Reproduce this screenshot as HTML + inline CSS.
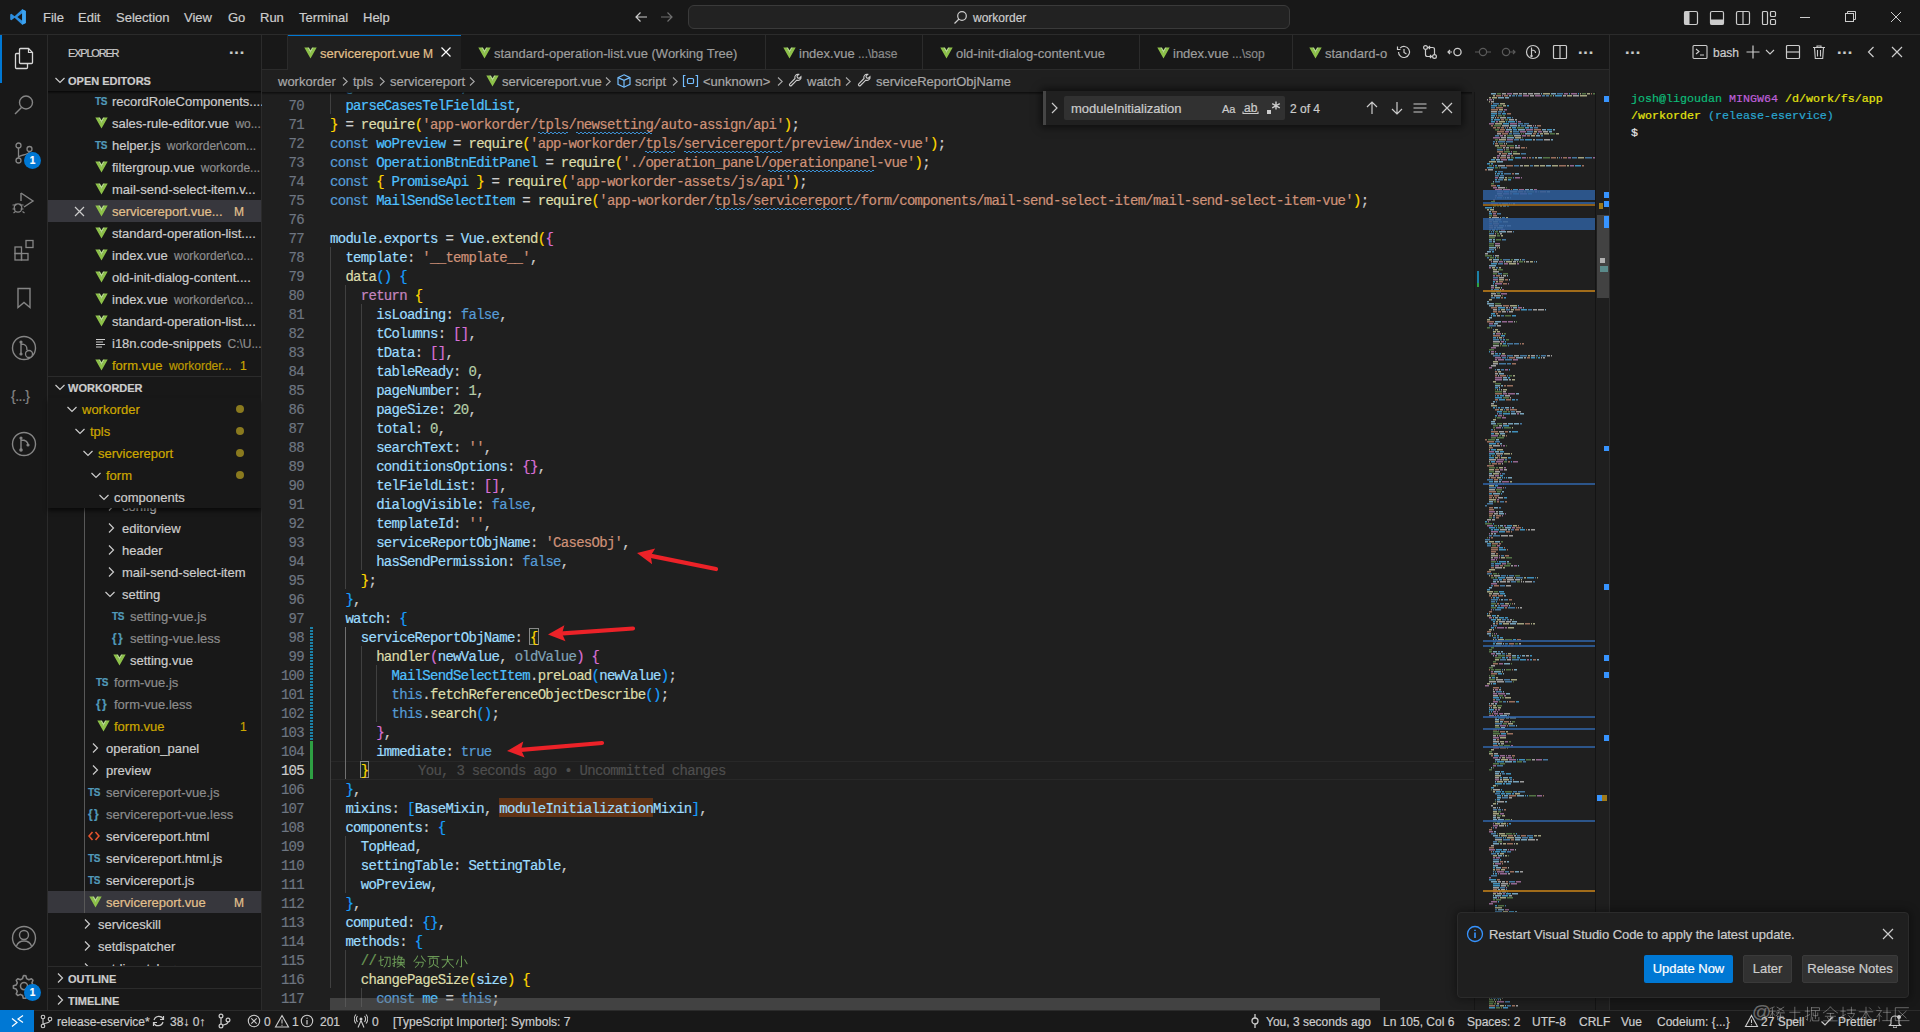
<!DOCTYPE html><html><head><meta charset="utf-8"><style>
*{box-sizing:border-box}
html,body{margin:0;padding:0}
body{width:1920px;height:1032px;overflow:hidden;position:relative;background:#181818;font-family:"Liberation Sans",sans-serif;color:#cccccc;-webkit-text-stroke:0.2px}
.mono{font-family:"Liberation Mono",monospace}
.ui{font-size:13px;line-height:22px}
.cl{position:absolute;left:0;height:19px;line-height:19px;white-space:pre;font-family:"Liberation Mono",monospace;font-size:14px;letter-spacing:-0.71px;margin-top:2px}
.ln{position:absolute;width:42px;text-align:right;height:19px;line-height:19px;font-family:"Liberation Mono",monospace;font-size:14px;letter-spacing:-0.71px;color:#6e7681;margin-top:2px}
.row{position:absolute;left:48px;width:213px;height:22px;line-height:22px;font-size:13px;white-space:pre;color:#cccccc}
.sb{position:absolute;top:1011px;height:22px;line-height:22px;font-size:12px;white-space:pre;color:#cccccc}
</style></head><body><div style="position:absolute;left:0px;top:0px;width:1920px;height:34px;background:#181818"></div><div style="position:absolute;left:0px;top:34px;width:1920px;height:1px;background:#2b2b2b"></div><svg style="position:absolute;left:9px;top:8px;" width="18" height="18" viewBox="0 0 18 18" fill="none"><path d="M13.2 1.2 L16.8 3 V15 L13.2 16.8 L5.6 9.8 L2.4 12.3 L1.2 11.6 V6.4 L2.4 5.7 L5.6 8.2 Z" fill="#2d8fe0"/><path d="M13.2 5.3 V12.7 L8.4 9 Z" fill="#181818"/><path d="M13.2 1.2 L16.8 3 V15 L13.2 16.8 Z" fill="#3ca3f0"/></svg><div style="position:absolute;left:43px;top:7px;white-space:pre;font-size:13px;line-height:22px;color:#cccccc">File</div><div style="position:absolute;left:78px;top:7px;white-space:pre;font-size:13px;line-height:22px;color:#cccccc">Edit</div><div style="position:absolute;left:116px;top:7px;white-space:pre;font-size:13px;line-height:22px;color:#cccccc">Selection</div><div style="position:absolute;left:184px;top:7px;white-space:pre;font-size:13px;line-height:22px;color:#cccccc">View</div><div style="position:absolute;left:228px;top:7px;white-space:pre;font-size:13px;line-height:22px;color:#cccccc">Go</div><div style="position:absolute;left:260px;top:7px;white-space:pre;font-size:13px;line-height:22px;color:#cccccc">Run</div><div style="position:absolute;left:299px;top:7px;white-space:pre;font-size:13px;line-height:22px;color:#cccccc">Terminal</div><div style="position:absolute;left:363px;top:7px;white-space:pre;font-size:13px;line-height:22px;color:#cccccc">Help</div><svg style="position:absolute;left:633px;top:9px;" width="16" height="16" viewBox="0 0 16 16" fill="none"><path d="M14 8H3M7.5 3.5L3 8l4.5 4.5" stroke="#cccccc" stroke-width="1.2"/></svg><svg style="position:absolute;left:659px;top:9px;" width="16" height="16" viewBox="0 0 16 16" fill="none"><path d="M2 8h11M8.5 3.5L13 8l-4.5 4.5" stroke="#6f6f6f" stroke-width="1.2"/></svg><div style="position:absolute;left:688px;top:5px;width:602px;height:24px;background:#222222;border:1px solid #3a3a3a;border-radius:6px"></div><svg style="position:absolute;left:953px;top:10px;" width="15" height="15" viewBox="0 0 15 15" fill="none"><circle cx="9" cy="6" r="4.3" stroke="#cccccc" stroke-width="1.2"/><path d="M6 9L1.5 13.5" stroke="#cccccc" stroke-width="1.3"/></svg><div style="position:absolute;left:973px;top:7px;white-space:pre;font-size:12px;line-height:22px;color:#cccccc">workorder</div><svg style="position:absolute;left:1683px;top:10px;" width="16" height="16" viewBox="0 0 16 16" fill="none"><rect x="1.5" y="1.5" width="13" height="13" rx="1.5" stroke="#cccccc" stroke-width="1.2"/><rect x="1.5" y="1.5" width="5" height="13" fill="#cccccc"/></svg><svg style="position:absolute;left:1709px;top:10px;" width="16" height="16" viewBox="0 0 16 16" fill="none"><rect x="1.5" y="1.5" width="13" height="13" rx="1.5" stroke="#cccccc" stroke-width="1.2"/><rect x="1.5" y="9.5" width="13" height="5" fill="#cccccc"/></svg><svg style="position:absolute;left:1735px;top:10px;" width="16" height="16" viewBox="0 0 16 16" fill="none"><rect x="1.5" y="1.5" width="13" height="13" rx="1.5" stroke="#cccccc" stroke-width="1.2"/><path d="M8 1.5v13" stroke="#cccccc" stroke-width="1.2"/></svg><svg style="position:absolute;left:1761px;top:10px;" width="16" height="16" viewBox="0 0 16 16" fill="none"><rect x="1.5" y="1.5" width="5" height="13" rx="1" stroke="#cccccc" stroke-width="1.2"/><rect x="9.5" y="1.5" width="5" height="5" rx="1" stroke="#cccccc" stroke-width="1.2"/><rect x="9.5" y="9.5" width="5" height="5" rx="1" stroke="#cccccc" stroke-width="1.2"/></svg><div style="position:absolute;left:1800px;top:17px;width:10px;height:1px;background:#cccccc"></div><svg style="position:absolute;left:1845px;top:11px;" width="12" height="12" viewBox="0 0 12 12" fill="none"><rect x="0.5" y="2.5" width="8" height="8" stroke="#cccccc"/><path d="M2.5 2.5V0.5h8v8h-2" stroke="#cccccc"/></svg><svg style="position:absolute;left:1890px;top:11px;" width="12" height="12" viewBox="0 0 12 12" fill="none"><path d="M1 1l10 10M11 1L1 11" stroke="#cccccc" stroke-width="1"/></svg><div style="position:absolute;left:0px;top:35px;width:48px;height:975px;background:#181818"></div><div style="position:absolute;left:47px;top:35px;width:1px;height:975px;background:#2b2b2b"></div><div style="position:absolute;left:0px;top:35px;width:2px;height:48px;background:#0078d4"></div><svg style="position:absolute;left:12px;top:46px;" width="24" height="24" viewBox="0 0 24 24" fill="none"><path d="M8.5 2.5h8l4 4v10a1 1 0 0 1-1 1h-11a1 1 0 0 1-1-1v-13a1 1 0 0 1 1-1z" stroke="#d7d7d7" stroke-width="1.3"/><path d="M16.5 2.5v4h4" stroke="#d7d7d7" stroke-width="1.2"/><path d="M7.5 7.5h-3a1 1 0 0 0-1 1v13a1 1 0 0 0 1 1h10a1 1 0 0 0 1-1v-4" stroke="#d7d7d7" stroke-width="1.3"/></svg><svg style="position:absolute;left:12px;top:93px;" width="24" height="24" viewBox="0 0 24 24" fill="none"><circle cx="14" cy="9.5" r="6.5" stroke="#858585" stroke-width="1.4"/><path d="M9.5 14.5L3 21" stroke="#858585" stroke-width="1.5"/></svg><svg style="position:absolute;left:12px;top:141px;" width="24" height="24" viewBox="0 0 24 24" fill="none"><circle cx="6.5" cy="4.5" r="2.5" stroke="#858585" stroke-width="1.3"/><circle cx="6.5" cy="19.5" r="2.5" stroke="#858585" stroke-width="1.3"/><circle cx="17.5" cy="8" r="2.5" stroke="#858585" stroke-width="1.3"/><path d="M6.5 7v10M17.5 10.5c0 4-11 3-11 6" stroke="#858585" stroke-width="1.3"/></svg><div style="position:absolute;left:24px;top:152px;width:17px;height:17px;background:#0078d4;border-radius:50%;color:#fff;font-size:10px;font-weight:bold;line-height:17px;text-align:center">1</div><svg style="position:absolute;left:10px;top:189px;" width="26" height="26" viewBox="0 0 26 26" fill="none"><path d="M11 4l12 8-9 6" stroke="#858585" stroke-width="1.4"/><path d="M11 4v8" stroke="#858585" stroke-width="1.4"/><ellipse cx="8" cy="19" rx="3.8" ry="4.2" stroke="#858585" stroke-width="1.3"/><path d="M2.5 16h3M10.5 16h3M2.5 20h3M10.5 20h3M3.5 24l2-1.5M12.5 22.5l2 1.5M5 15l1.5 1M11 15l-1.5 1" stroke="#858585" stroke-width="1.2"/></svg><svg style="position:absolute;left:12px;top:238px;" width="24" height="24" viewBox="0 0 24 24" fill="none"><rect x="3" y="9" width="6.5" height="6.5" stroke="#858585" stroke-width="1.3"/><rect x="3" y="15.5" width="6.5" height="6.5" stroke="#858585" stroke-width="1.3"/><rect x="9.5" y="15.5" width="6.5" height="6.5" stroke="#858585" stroke-width="1.3"/><rect x="14" y="2.5" width="7" height="7" stroke="#858585" stroke-width="1.3"/></svg><svg style="position:absolute;left:12px;top:286px;" width="24" height="24" viewBox="0 0 24 24" fill="none"><path d="M6 2.5h12v19l-6-5-6 5z" stroke="#858585" stroke-width="1.4"/></svg><svg style="position:absolute;left:10px;top:334px;" width="28" height="28" viewBox="0 0 28 28" fill="none"><circle cx="14" cy="14" r="11.5" stroke="#858585" stroke-width="1.4"/><path d="M11 7v14M11 10c5 0 6 2 6 6" stroke="#858585" stroke-width="1.4"/><circle cx="11" cy="8" r="1.6" fill="#858585"/><circle cx="11" cy="20" r="1.6" fill="#858585"/><circle cx="19" cy="20" r="3.5" fill="#181818" stroke="#858585" stroke-width="1.3"/></svg><div style="position:absolute;left:11px;top:385px;white-space:pre;font-size:14px;line-height:22px;color:#858585;letter-spacing:-0.5px">{...}</div><svg style="position:absolute;left:10px;top:430px;" width="28" height="28" viewBox="0 0 28 28" fill="none"><circle cx="14" cy="14" r="11.5" stroke="#858585" stroke-width="1.4"/><path d="M11 7v13M11 10c5 0 7 2 7 5" stroke="#858585" stroke-width="1.4"/><circle cx="11" cy="8" r="1.6" fill="#858585"/><circle cx="11" cy="20" r="1.8" fill="#858585"/><circle cx="18" cy="15" r="1.6" fill="#858585"/></svg><svg style="position:absolute;left:10px;top:924px;" width="28" height="28" viewBox="0 0 28 28" fill="none"><circle cx="14" cy="14" r="11.5" stroke="#858585" stroke-width="1.4"/><circle cx="14" cy="11" r="4.5" stroke="#858585" stroke-width="1.4"/><path d="M6.5 22c1.5-4 4-5 7.5-5s6 1 7.5 5" stroke="#858585" stroke-width="1.4"/></svg><svg style="position:absolute;left:8px;top:970px;" width="32" height="32" viewBox="0 0 32 32" fill="none"><g transform="translate(-0.5,-1) scale(1.18)"><path d="M14 5.5l1.6 0.3 0.6 2.3 1.9 1 2.2-0.9 1.3 1.3-0.9 2.2 1 1.9 2.3 0.6v2.2l-2.3 0.6-1 1.9 0.9 2.2-1.3 1.3-2.2-0.9-1.9 1-0.6 2.3h-2.2l-0.6-2.3-1.9-1-2.2 0.9-1.3-1.3 0.9-2.2-1-1.9-2.3-0.6v-2.2l2.3-0.6 1-1.9-0.9-2.2 1.3-1.3 2.2 0.9 1.9-1 0.6-2.3z" stroke="#858585" stroke-width="1.3" stroke-linejoin="round"/><circle cx="14" cy="14.5" r="3" stroke="#858585" stroke-width="1.3"/></g></svg><div style="position:absolute;left:24px;top:984px;width:17px;height:17px;background:#0078d4;border-radius:50%;color:#fff;font-size:10px;font-weight:bold;line-height:17px;text-align:center">1</div><div style="position:absolute;left:48px;top:35px;width:213px;height:975px;background:#181818"></div><div style="position:absolute;left:261px;top:35px;width:1px;height:975px;background:#2b2b2b"></div><div style="position:absolute;left:68px;top:42px;white-space:pre;font-size:11px;line-height:22px;color:#cccccc;letter-spacing:-1.2px">EXPLORER</div><div style="position:absolute;left:229px;top:42px;white-space:pre;font-size:16px;line-height:22px;color:#cccccc;letter-spacing:0px;font-weight:bold">···</div><svg style="position:absolute;left:54px;top:75px;" width="12" height="10" viewBox="0 0 12 10" fill="none"><path d="M1.5 3l4.5 4.5L10.5 3" stroke="#cccccc" stroke-width="1.2"/></svg><div style="position:absolute;left:68px;top:70px;white-space:pre;font-size:11px;line-height:22px;font-weight:bold;color:#cccccc">OPEN EDITORS</div><div style="position:absolute;left:48px;top:91px;width:213px;height:3px;background:linear-gradient(rgba(0,0,0,0.7),rgba(0,0,0,0))"></div><div style="position:absolute;left:95px;top:91px;white-space:pre;font-size:10px;line-height:22px;font-weight:bold;color:#519aba;letter-spacing:-0.3px">TS</div><div style="position:absolute;left:112px;top:91px;white-space:pre;font-size:13px;line-height:22px"><span style="color:#cccccc">recordRoleComponents....</span><span style="font-size:12px;color:#9a9a9a;margin-left:3px;opacity:0.9"></span></div><svg style="position:absolute;left:95px;top:117px;" width="13" height="12" viewBox="0 0 13 12" fill="none"><path d="M0.3 0.5h3.2L6.5 6 9.5 0.5h3.2L6.5 11.5z" fill="#8dc149"/><path d="M3.3 0.5h1.6L6.5 3.3 8.1 0.5h1.6L6.5 6.3z" fill="#b6dd8a"/></svg><div style="position:absolute;left:112px;top:113px;white-space:pre;font-size:13px;line-height:22px"><span style="color:#cccccc">sales-rule-editor.vue</span><span style="font-size:12px;color:#9a9a9a;margin-left:3px;opacity:0.9"> wo...</span></div><div style="position:absolute;left:95px;top:135px;white-space:pre;font-size:10px;line-height:22px;font-weight:bold;color:#519aba;letter-spacing:-0.3px">TS</div><div style="position:absolute;left:112px;top:135px;white-space:pre;font-size:13px;line-height:22px"><span style="color:#cccccc">helper.js</span><span style="font-size:12px;color:#9a9a9a;margin-left:3px;opacity:0.9"> workorder\com...</span></div><svg style="position:absolute;left:95px;top:161px;" width="13" height="12" viewBox="0 0 13 12" fill="none"><path d="M0.3 0.5h3.2L6.5 6 9.5 0.5h3.2L6.5 11.5z" fill="#8dc149"/><path d="M3.3 0.5h1.6L6.5 3.3 8.1 0.5h1.6L6.5 6.3z" fill="#b6dd8a"/></svg><div style="position:absolute;left:112px;top:157px;white-space:pre;font-size:13px;line-height:22px"><span style="color:#cccccc">filtergroup.vue</span><span style="font-size:12px;color:#9a9a9a;margin-left:3px;opacity:0.9"> workorde...</span></div><svg style="position:absolute;left:95px;top:183px;" width="13" height="12" viewBox="0 0 13 12" fill="none"><path d="M0.3 0.5h3.2L6.5 6 9.5 0.5h3.2L6.5 11.5z" fill="#8dc149"/><path d="M3.3 0.5h1.6L6.5 3.3 8.1 0.5h1.6L6.5 6.3z" fill="#b6dd8a"/></svg><div style="position:absolute;left:112px;top:179px;white-space:pre;font-size:13px;line-height:22px"><span style="color:#cccccc">mail-send-select-item.v...</span><span style="font-size:12px;color:#9a9a9a;margin-left:3px;opacity:0.9"></span></div><div style="position:absolute;left:48px;top:200px;width:213px;height:22px;background:#37373d"></div><svg style="position:absolute;left:74px;top:206px;" width="11" height="11" viewBox="0 0 11 11" fill="none"><path d="M1 1l9 9M10 1L1 10" stroke="#cccccc" stroke-width="1.2"/></svg><svg style="position:absolute;left:95px;top:205px;" width="13" height="12" viewBox="0 0 13 12" fill="none"><path d="M0.3 0.5h3.2L6.5 6 9.5 0.5h3.2L6.5 11.5z" fill="#8dc149"/><path d="M3.3 0.5h1.6L6.5 3.3 8.1 0.5h1.6L6.5 6.3z" fill="#b6dd8a"/></svg><div style="position:absolute;left:112px;top:201px;white-space:pre;font-size:13px;line-height:22px"><span style="color:#e2c08d">servicereport.vue...</span><span style="font-size:12px;color:#e2c08d;margin-left:3px;opacity:0.9"></span></div><div style="position:absolute;left:234px;top:201px;white-space:pre;font-size:12px;line-height:22px;color:#e2c08d">M</div><svg style="position:absolute;left:95px;top:227px;" width="13" height="12" viewBox="0 0 13 12" fill="none"><path d="M0.3 0.5h3.2L6.5 6 9.5 0.5h3.2L6.5 11.5z" fill="#8dc149"/><path d="M3.3 0.5h1.6L6.5 3.3 8.1 0.5h1.6L6.5 6.3z" fill="#b6dd8a"/></svg><div style="position:absolute;left:112px;top:223px;white-space:pre;font-size:13px;line-height:22px"><span style="color:#cccccc">standard-operation-list....</span><span style="font-size:12px;color:#9a9a9a;margin-left:3px;opacity:0.9"></span></div><svg style="position:absolute;left:95px;top:249px;" width="13" height="12" viewBox="0 0 13 12" fill="none"><path d="M0.3 0.5h3.2L6.5 6 9.5 0.5h3.2L6.5 11.5z" fill="#8dc149"/><path d="M3.3 0.5h1.6L6.5 3.3 8.1 0.5h1.6L6.5 6.3z" fill="#b6dd8a"/></svg><div style="position:absolute;left:112px;top:245px;white-space:pre;font-size:13px;line-height:22px"><span style="color:#cccccc">index.vue</span><span style="font-size:12px;color:#9a9a9a;margin-left:3px;opacity:0.9"> workorder\co...</span></div><svg style="position:absolute;left:95px;top:271px;" width="13" height="12" viewBox="0 0 13 12" fill="none"><path d="M0.3 0.5h3.2L6.5 6 9.5 0.5h3.2L6.5 11.5z" fill="#8dc149"/><path d="M3.3 0.5h1.6L6.5 3.3 8.1 0.5h1.6L6.5 6.3z" fill="#b6dd8a"/></svg><div style="position:absolute;left:112px;top:267px;white-space:pre;font-size:13px;line-height:22px"><span style="color:#cccccc">old-init-dialog-content....</span><span style="font-size:12px;color:#9a9a9a;margin-left:3px;opacity:0.9"></span></div><svg style="position:absolute;left:95px;top:293px;" width="13" height="12" viewBox="0 0 13 12" fill="none"><path d="M0.3 0.5h3.2L6.5 6 9.5 0.5h3.2L6.5 11.5z" fill="#8dc149"/><path d="M3.3 0.5h1.6L6.5 3.3 8.1 0.5h1.6L6.5 6.3z" fill="#b6dd8a"/></svg><div style="position:absolute;left:112px;top:289px;white-space:pre;font-size:13px;line-height:22px"><span style="color:#cccccc">index.vue</span><span style="font-size:12px;color:#9a9a9a;margin-left:3px;opacity:0.9"> workorder\co...</span></div><svg style="position:absolute;left:95px;top:315px;" width="13" height="12" viewBox="0 0 13 12" fill="none"><path d="M0.3 0.5h3.2L6.5 6 9.5 0.5h3.2L6.5 11.5z" fill="#8dc149"/><path d="M3.3 0.5h1.6L6.5 3.3 8.1 0.5h1.6L6.5 6.3z" fill="#b6dd8a"/></svg><div style="position:absolute;left:112px;top:311px;white-space:pre;font-size:13px;line-height:22px"><span style="color:#cccccc">standard-operation-list....</span><span style="font-size:12px;color:#9a9a9a;margin-left:3px;opacity:0.9"></span></div><svg style="position:absolute;left:95px;top:338px;" width="12" height="10" viewBox="0 0 12 10" fill="none"><path d="M1 1.5h9M1 4h7M1 6.5h9M1 9h6" stroke="#cccccc" stroke-width="1.2"/></svg><div style="position:absolute;left:112px;top:333px;white-space:pre;font-size:13px;line-height:22px"><span style="color:#cccccc">i18n.code-snippets</span><span style="font-size:12px;color:#9a9a9a;margin-left:3px;opacity:0.9"> C:\U...</span></div><svg style="position:absolute;left:95px;top:359px;" width="13" height="12" viewBox="0 0 13 12" fill="none"><path d="M0.3 0.5h3.2L6.5 6 9.5 0.5h3.2L6.5 11.5z" fill="#8dc149"/><path d="M3.3 0.5h1.6L6.5 3.3 8.1 0.5h1.6L6.5 6.3z" fill="#b6dd8a"/></svg><div style="position:absolute;left:112px;top:355px;white-space:pre;font-size:13px;line-height:22px"><span style="color:#cca700">form.vue</span><span style="font-size:12px;color:#cca700;margin-left:3px;opacity:0.9"> workorder...</span></div><div style="position:absolute;left:240px;top:355px;white-space:pre;font-size:12px;line-height:22px;color:#cca700">1</div><div style="position:absolute;left:48px;top:376px;width:213px;height:1px;background:#2b2b2b"></div><svg style="position:absolute;left:54px;top:382px;" width="12" height="10" viewBox="0 0 12 10" fill="none"><path d="M1.5 3l4.5 4.5L10.5 3" stroke="#cccccc" stroke-width="1.2"/></svg><div style="position:absolute;left:68px;top:377px;white-space:pre;font-size:11px;line-height:22px;font-weight:bold;color:#cccccc">WORKORDER</div><div style="position:absolute;left:0px;top:0px;width:261px;height:966px;overflow:hidden;position:absolute"><svg style="position:absolute;left:106px;top:500px;" width="10" height="12" viewBox="0 0 10 12" fill="none"><path d="M3 1.5l4.5 4.5L3 10.5" stroke="#cccccc" stroke-width="1.2"/></svg><div style="position:absolute;left:122px;top:496px;white-space:pre;font-size:13px;line-height:22px;color:#cccccc">config</div><svg style="position:absolute;left:106px;top:522px;" width="10" height="12" viewBox="0 0 10 12" fill="none"><path d="M3 1.5l4.5 4.5L3 10.5" stroke="#cccccc" stroke-width="1.2"/></svg><div style="position:absolute;left:122px;top:518px;white-space:pre;font-size:13px;line-height:22px;color:#cccccc">editorview</div><svg style="position:absolute;left:106px;top:544px;" width="10" height="12" viewBox="0 0 10 12" fill="none"><path d="M3 1.5l4.5 4.5L3 10.5" stroke="#cccccc" stroke-width="1.2"/></svg><div style="position:absolute;left:122px;top:540px;white-space:pre;font-size:13px;line-height:22px;color:#cccccc">header</div><svg style="position:absolute;left:106px;top:566px;" width="10" height="12" viewBox="0 0 10 12" fill="none"><path d="M3 1.5l4.5 4.5L3 10.5" stroke="#cccccc" stroke-width="1.2"/></svg><div style="position:absolute;left:122px;top:562px;white-space:pre;font-size:13px;line-height:22px;color:#cccccc">mail-send-select-item</div><svg style="position:absolute;left:104px;top:589px;" width="12" height="10" viewBox="0 0 12 10" fill="none"><path d="M1.5 3l4.5 4.5L10.5 3" stroke="#cccccc" stroke-width="1.2"/></svg><div style="position:absolute;left:122px;top:584px;white-space:pre;font-size:13px;line-height:22px;color:#cccccc">setting</div><div style="position:absolute;left:112px;top:606px;white-space:pre;font-size:10px;line-height:22px;font-weight:bold;color:#519aba;letter-spacing:-0.3px">TS</div><div style="position:absolute;left:130px;top:606px;white-space:pre;font-size:13px;line-height:22px;color:#8c8c8c">setting-vue.js</div><div style="position:absolute;left:112px;top:627px;white-space:pre;font-size:12px;line-height:22px;font-weight:bold;color:#519aba;letter-spacing:-1px">{ }</div><div style="position:absolute;left:130px;top:628px;white-space:pre;font-size:13px;line-height:22px;color:#8c8c8c">setting-vue.less</div><svg style="position:absolute;left:113px;top:654px;" width="13" height="12" viewBox="0 0 13 12" fill="none"><path d="M0.3 0.5h3.2L6.5 6 9.5 0.5h3.2L6.5 11.5z" fill="#8dc149"/><path d="M3.3 0.5h1.6L6.5 3.3 8.1 0.5h1.6L6.5 6.3z" fill="#b6dd8a"/></svg><div style="position:absolute;left:130px;top:650px;white-space:pre;font-size:13px;line-height:22px;color:#cccccc">setting.vue</div><div style="position:absolute;left:96px;top:672px;white-space:pre;font-size:10px;line-height:22px;font-weight:bold;color:#519aba;letter-spacing:-0.3px">TS</div><div style="position:absolute;left:114px;top:672px;white-space:pre;font-size:13px;line-height:22px;color:#8c8c8c">form-vue.js</div><div style="position:absolute;left:96px;top:693px;white-space:pre;font-size:12px;line-height:22px;font-weight:bold;color:#519aba;letter-spacing:-1px">{ }</div><div style="position:absolute;left:114px;top:694px;white-space:pre;font-size:13px;line-height:22px;color:#8c8c8c">form-vue.less</div><svg style="position:absolute;left:97px;top:720px;" width="13" height="12" viewBox="0 0 13 12" fill="none"><path d="M0.3 0.5h3.2L6.5 6 9.5 0.5h3.2L6.5 11.5z" fill="#8dc149"/><path d="M3.3 0.5h1.6L6.5 3.3 8.1 0.5h1.6L6.5 6.3z" fill="#b6dd8a"/></svg><div style="position:absolute;left:114px;top:716px;white-space:pre;font-size:13px;line-height:22px;color:#cca700">form.vue</div><div style="position:absolute;left:240px;top:716px;white-space:pre;font-size:12px;line-height:22px;color:#cca700">1</div><svg style="position:absolute;left:90px;top:742px;" width="10" height="12" viewBox="0 0 10 12" fill="none"><path d="M3 1.5l4.5 4.5L3 10.5" stroke="#cccccc" stroke-width="1.2"/></svg><div style="position:absolute;left:106px;top:738px;white-space:pre;font-size:13px;line-height:22px;color:#cccccc">operation_panel</div><svg style="position:absolute;left:90px;top:764px;" width="10" height="12" viewBox="0 0 10 12" fill="none"><path d="M3 1.5l4.5 4.5L3 10.5" stroke="#cccccc" stroke-width="1.2"/></svg><div style="position:absolute;left:106px;top:760px;white-space:pre;font-size:13px;line-height:22px;color:#cccccc">preview</div><div style="position:absolute;left:88px;top:782px;white-space:pre;font-size:10px;line-height:22px;font-weight:bold;color:#519aba;letter-spacing:-0.3px">TS</div><div style="position:absolute;left:106px;top:782px;white-space:pre;font-size:13px;line-height:22px;color:#8c8c8c">servicereport-vue.js</div><div style="position:absolute;left:88px;top:803px;white-space:pre;font-size:12px;line-height:22px;font-weight:bold;color:#519aba;letter-spacing:-1px">{ }</div><div style="position:absolute;left:106px;top:804px;white-space:pre;font-size:13px;line-height:22px;color:#8c8c8c">servicereport-vue.less</div><svg style="position:absolute;left:88px;top:831px;" width="12" height="10" viewBox="0 0 12 10" fill="none"><path d="M4.5 1L1 5l3.5 4M7.5 1L11 5l-3.5 4" stroke="#e5532d" stroke-width="1.6"/></svg><div style="position:absolute;left:106px;top:826px;white-space:pre;font-size:13px;line-height:22px;color:#cccccc">servicereport.html</div><div style="position:absolute;left:88px;top:848px;white-space:pre;font-size:10px;line-height:22px;font-weight:bold;color:#519aba;letter-spacing:-0.3px">TS</div><div style="position:absolute;left:106px;top:848px;white-space:pre;font-size:13px;line-height:22px;color:#cccccc">servicereport.html.js</div><div style="position:absolute;left:88px;top:870px;white-space:pre;font-size:10px;line-height:22px;font-weight:bold;color:#519aba;letter-spacing:-0.3px">TS</div><div style="position:absolute;left:106px;top:870px;white-space:pre;font-size:13px;line-height:22px;color:#cccccc">servicereport.js</div><div style="position:absolute;left:48px;top:891px;width:213px;height:22px;background:#37373d"></div><svg style="position:absolute;left:89px;top:896px;" width="13" height="12" viewBox="0 0 13 12" fill="none"><path d="M0.3 0.5h3.2L6.5 6 9.5 0.5h3.2L6.5 11.5z" fill="#8dc149"/><path d="M3.3 0.5h1.6L6.5 3.3 8.1 0.5h1.6L6.5 6.3z" fill="#b6dd8a"/></svg><div style="position:absolute;left:106px;top:892px;white-space:pre;font-size:13px;line-height:22px;color:#e2c08d">servicereport.vue</div><div style="position:absolute;left:234px;top:892px;white-space:pre;font-size:12px;line-height:22px;color:#e2c08d">M</div><svg style="position:absolute;left:82px;top:918px;" width="10" height="12" viewBox="0 0 10 12" fill="none"><path d="M3 1.5l4.5 4.5L3 10.5" stroke="#cccccc" stroke-width="1.2"/></svg><div style="position:absolute;left:98px;top:914px;white-space:pre;font-size:13px;line-height:22px;color:#cccccc">serviceskill</div><svg style="position:absolute;left:82px;top:940px;" width="10" height="12" viewBox="0 0 10 12" fill="none"><path d="M3 1.5l4.5 4.5L3 10.5" stroke="#cccccc" stroke-width="1.2"/></svg><div style="position:absolute;left:98px;top:936px;white-space:pre;font-size:13px;line-height:22px;color:#cccccc">setdispatcher</div><svg style="position:absolute;left:82px;top:962px;" width="10" height="12" viewBox="0 0 10 12" fill="none"><path d="M3 1.5l4.5 4.5L3 10.5" stroke="#cccccc" stroke-width="1.2"/></svg><div style="position:absolute;left:98px;top:958px;white-space:pre;font-size:13px;line-height:22px;color:#cccccc">setdispatcher</div><div style="position:absolute;left:84px;top:508px;width:1px;height:405px;background:#585858"></div></div><div style="position:absolute;left:48px;top:398px;width:213px;height:110px;background:#181818;box-shadow:0 3px 4px rgba(0,0,0,0.6)"></div><svg style="position:absolute;left:66px;top:404px;" width="12" height="10" viewBox="0 0 12 10" fill="none"><path d="M1.5 3l4.5 4.5L10.5 3" stroke="#cccccc" stroke-width="1.2"/></svg><div style="position:absolute;left:82px;top:399px;white-space:pre;font-size:13px;line-height:22px;color:#cca700">workorder</div><div style="position:absolute;left:236px;top:405px;width:8px;height:8px;background:#8a7a1e;border-radius:50%"></div><svg style="position:absolute;left:74px;top:426px;" width="12" height="10" viewBox="0 0 12 10" fill="none"><path d="M1.5 3l4.5 4.5L10.5 3" stroke="#cccccc" stroke-width="1.2"/></svg><div style="position:absolute;left:90px;top:421px;white-space:pre;font-size:13px;line-height:22px;color:#cca700">tpls</div><div style="position:absolute;left:236px;top:427px;width:8px;height:8px;background:#8a7a1e;border-radius:50%"></div><svg style="position:absolute;left:82px;top:448px;" width="12" height="10" viewBox="0 0 12 10" fill="none"><path d="M1.5 3l4.5 4.5L10.5 3" stroke="#cccccc" stroke-width="1.2"/></svg><div style="position:absolute;left:98px;top:443px;white-space:pre;font-size:13px;line-height:22px;color:#cca700">servicereport</div><div style="position:absolute;left:236px;top:449px;width:8px;height:8px;background:#8a7a1e;border-radius:50%"></div><svg style="position:absolute;left:90px;top:470px;" width="12" height="10" viewBox="0 0 12 10" fill="none"><path d="M1.5 3l4.5 4.5L10.5 3" stroke="#cccccc" stroke-width="1.2"/></svg><div style="position:absolute;left:106px;top:465px;white-space:pre;font-size:13px;line-height:22px;color:#cca700">form</div><div style="position:absolute;left:236px;top:471px;width:8px;height:8px;background:#8a7a1e;border-radius:50%"></div><svg style="position:absolute;left:98px;top:492px;" width="12" height="10" viewBox="0 0 12 10" fill="none"><path d="M1.5 3l4.5 4.5L10.5 3" stroke="#cccccc" stroke-width="1.2"/></svg><div style="position:absolute;left:114px;top:487px;white-space:pre;font-size:13px;line-height:22px;color:#cccccc">components</div><div style="position:absolute;left:48px;top:966px;width:213px;height:1px;background:#2b2b2b"></div><div style="position:absolute;left:48px;top:967px;width:213px;height:22px;background:#181818"></div><svg style="position:absolute;left:55px;top:972px;" width="10" height="12" viewBox="0 0 10 12" fill="none"><path d="M3 1.5l4.5 4.5L3 10.5" stroke="#cccccc" stroke-width="1.2"/></svg><div style="position:absolute;left:68px;top:968px;white-space:pre;font-size:11px;line-height:22px;font-weight:bold;color:#cccccc">OUTLINE</div><div style="position:absolute;left:48px;top:988px;width:213px;height:1px;background:#2b2b2b"></div><svg style="position:absolute;left:55px;top:994px;" width="10" height="12" viewBox="0 0 10 12" fill="none"><path d="M3 1.5l4.5 4.5L3 10.5" stroke="#cccccc" stroke-width="1.2"/></svg><div style="position:absolute;left:68px;top:990px;white-space:pre;font-size:11px;line-height:22px;font-weight:bold;color:#cccccc">TIMELINE</div><div style="position:absolute;left:262px;top:35px;width:1348px;height:35px;background:#181818"></div><div style="position:absolute;left:262px;top:69px;width:1348px;height:1px;background:#2b2b2b"></div><div style="position:absolute;left:287px;top:35px;width:1px;height:34px;background:#2b2b2b"></div><div style="position:absolute;left:288px;top:35px;width:173px;height:35px;background:#1f1f1f;border-top:1px solid #0078d4"></div><svg style="position:absolute;left:304px;top:47px;" width="13" height="12" viewBox="0 0 13 12" fill="none"><path d="M0.3 0.5h3.2L6.5 6 9.5 0.5h3.2L6.5 11.5z" fill="#8dc149"/><path d="M3.3 0.5h1.6L6.5 3.3 8.1 0.5h1.6L6.5 6.3z" fill="#b6dd8a"/></svg><div style="position:absolute;left:320px;top:43px;white-space:pre;font-size:13px;line-height:22px"><span style="color:#e2c08d">servicereport.vue</span><span style="color:#e2c08d;font-size:12px"> M</span></div><svg style="position:absolute;left:440px;top:46px;" width="12" height="12" viewBox="0 0 12 12" fill="none"><path d="M1.5 1.5l9 9M10.5 1.5l-9 9" stroke="#ffffff" stroke-width="1.2"/></svg><div style="position:absolute;left:765px;top:35px;width:1px;height:34px;background:#2b2b2b"></div><svg style="position:absolute;left:478px;top:47px;" width="13" height="12" viewBox="0 0 13 12" fill="none"><path d="M0.3 0.5h3.2L6.5 6 9.5 0.5h3.2L6.5 11.5z" fill="#8dc149"/><path d="M3.3 0.5h1.6L6.5 3.3 8.1 0.5h1.6L6.5 6.3z" fill="#b6dd8a"/></svg><div style="position:absolute;left:494px;top:43px;white-space:pre;font-size:13px;line-height:22px"><span style="color:#9d9d9d">standard-operation-list.vue (Working Tree)</span><span style="color:#8a8a8a;font-size:12px"></span></div><div style="position:absolute;left:922px;top:35px;width:1px;height:34px;background:#2b2b2b"></div><svg style="position:absolute;left:783px;top:47px;" width="13" height="12" viewBox="0 0 13 12" fill="none"><path d="M0.3 0.5h3.2L6.5 6 9.5 0.5h3.2L6.5 11.5z" fill="#8dc149"/><path d="M3.3 0.5h1.6L6.5 3.3 8.1 0.5h1.6L6.5 6.3z" fill="#b6dd8a"/></svg><div style="position:absolute;left:799px;top:43px;white-space:pre;font-size:13px;line-height:22px"><span style="color:#9d9d9d">index.vue</span><span style="color:#8a8a8a;font-size:12px"> ...\base</span></div><div style="position:absolute;left:1139px;top:35px;width:1px;height:34px;background:#2b2b2b"></div><svg style="position:absolute;left:940px;top:47px;" width="13" height="12" viewBox="0 0 13 12" fill="none"><path d="M0.3 0.5h3.2L6.5 6 9.5 0.5h3.2L6.5 11.5z" fill="#8dc149"/><path d="M3.3 0.5h1.6L6.5 3.3 8.1 0.5h1.6L6.5 6.3z" fill="#b6dd8a"/></svg><div style="position:absolute;left:956px;top:43px;white-space:pre;font-size:13px;line-height:22px"><span style="color:#9d9d9d">old-init-dialog-content.vue</span><span style="color:#8a8a8a;font-size:12px"></span></div><div style="position:absolute;left:1292px;top:35px;width:1px;height:34px;background:#2b2b2b"></div><svg style="position:absolute;left:1157px;top:47px;" width="13" height="12" viewBox="0 0 13 12" fill="none"><path d="M0.3 0.5h3.2L6.5 6 9.5 0.5h3.2L6.5 11.5z" fill="#8dc149"/><path d="M3.3 0.5h1.6L6.5 3.3 8.1 0.5h1.6L6.5 6.3z" fill="#b6dd8a"/></svg><div style="position:absolute;left:1173px;top:43px;white-space:pre;font-size:13px;line-height:22px"><span style="color:#9d9d9d">index.vue</span><span style="color:#8a8a8a;font-size:12px"> ...\sop</span></div><svg style="position:absolute;left:1309px;top:47px;" width="13" height="12" viewBox="0 0 13 12" fill="none"><path d="M0.3 0.5h3.2L6.5 6 9.5 0.5h3.2L6.5 11.5z" fill="#8dc149"/><path d="M3.3 0.5h1.6L6.5 3.3 8.1 0.5h1.6L6.5 6.3z" fill="#b6dd8a"/></svg><div style="position:absolute;left:1325px;top:43px;white-space:pre;font-size:13px;line-height:22px;color:#9d9d9d">standard-o</div><div style="position:absolute;left:1392px;top:35px;width:218px;height:34px;background:#181818"></div><svg style="position:absolute;left:1396px;top:44px;" width="16" height="16" viewBox="0 0 16 16" fill="none"><path d="M2.5 8a5.5 5.5 0 1 0 1.6-3.9" stroke="#cccccc" stroke-width="1.2"/><path d="M1.5 2.5v3h3" stroke="#cccccc" stroke-width="1.2"/><path d="M8 5v3.5l2.5 1.5" stroke="#cccccc" stroke-width="1.2"/></svg><svg style="position:absolute;left:1422px;top:44px;" width="16" height="16" viewBox="0 0 16 16" fill="none"><circle cx="3.5" cy="3.5" r="1.9" stroke="#cccccc" stroke-width="1.2"/><circle cx="12.5" cy="12.5" r="1.9" stroke="#cccccc" stroke-width="1.2"/><path d="M3.5 5.5V10.5Q3.5 12.5 5.5 12.5H9.5M8 11l1.5 1.5L8 14M12.5 10.5V5.5Q12.5 3.5 10.5 3.5H6.5M8 2L6.5 3.5 8 5" stroke="#cccccc" stroke-width="1.2"/></svg><svg style="position:absolute;left:1447px;top:44px;" width="18" height="16" viewBox="0 0 18 16" fill="none"><circle cx="10.5" cy="8" r="3.6" stroke="#cccccc" stroke-width="1.3"/><path d="M5 8H1M3 6L1 8l2 2" stroke="#cccccc" stroke-width="1.2"/></svg><svg style="position:absolute;left:1474px;top:44px;" width="18" height="16" viewBox="0 0 18 16" fill="none"><circle cx="9" cy="8" r="3.6" stroke="#5a5a5a" stroke-width="1.2"/><path d="M1 8h4M13 8h4" stroke="#5a5a5a" stroke-width="1.2"/></svg><svg style="position:absolute;left:1499px;top:44px;" width="18" height="16" viewBox="0 0 18 16" fill="none"><circle cx="7" cy="8" r="3.6" stroke="#5a5a5a" stroke-width="1.2"/><path d="M11 8h5M14 6l2 2-2 2" stroke="#5a5a5a" stroke-width="1.2"/></svg><svg style="position:absolute;left:1525px;top:44px;" width="16" height="16" viewBox="0 0 16 16" fill="none"><circle cx="8" cy="8" r="6.5" stroke="#cccccc" stroke-width="1.2"/><path d="M6.5 3.5v9M6.5 6c3 0 4 1 4 3" stroke="#cccccc" stroke-width="1.2"/><circle cx="6.5" cy="12" r="1.2" fill="#cccccc"/></svg><svg style="position:absolute;left:1552px;top:44px;" width="16" height="16" viewBox="0 0 16 16" fill="none"><rect x="1.5" y="1.5" width="13" height="13" rx="1" stroke="#cccccc" stroke-width="1.2"/><path d="M8 1.5v13" stroke="#cccccc" stroke-width="1.2"/></svg><div style="position:absolute;left:1578px;top:42px;white-space:pre;font-size:16px;line-height:22px;color:#cccccc;font-weight:bold">···</div><div style="position:absolute;left:262px;top:92px;width:1348px;height:918px;background:#1f1f1f"></div><div style="position:absolute;left:0px;top:92px;width:1920px;height:918px;overflow:hidden"><div style="position:absolute;left:330px;top:669px;width:1145px;height:19px;border-top:1px solid #282828;border-bottom:1px solid #282828"></div><div class="ln" style="left:262px;top:-16px;color:#6e7681">69</div><div class="ln" style="left:262px;top:3px;color:#6e7681">70</div><div class="ln" style="left:262px;top:22px;color:#6e7681">71</div><div class="ln" style="left:262px;top:41px;color:#6e7681">72</div><div class="ln" style="left:262px;top:60px;color:#6e7681">73</div><div class="ln" style="left:262px;top:79px;color:#6e7681">74</div><div class="ln" style="left:262px;top:98px;color:#6e7681">75</div><div class="ln" style="left:262px;top:117px;color:#6e7681">76</div><div class="ln" style="left:262px;top:136px;color:#6e7681">77</div><div class="ln" style="left:262px;top:155px;color:#6e7681">78</div><div class="ln" style="left:262px;top:174px;color:#6e7681">79</div><div class="ln" style="left:262px;top:193px;color:#6e7681">80</div><div class="ln" style="left:262px;top:212px;color:#6e7681">81</div><div class="ln" style="left:262px;top:231px;color:#6e7681">82</div><div class="ln" style="left:262px;top:250px;color:#6e7681">83</div><div class="ln" style="left:262px;top:269px;color:#6e7681">84</div><div class="ln" style="left:262px;top:288px;color:#6e7681">85</div><div class="ln" style="left:262px;top:307px;color:#6e7681">86</div><div class="ln" style="left:262px;top:326px;color:#6e7681">87</div><div class="ln" style="left:262px;top:345px;color:#6e7681">88</div><div class="ln" style="left:262px;top:364px;color:#6e7681">89</div><div class="ln" style="left:262px;top:383px;color:#6e7681">90</div><div class="ln" style="left:262px;top:402px;color:#6e7681">91</div><div class="ln" style="left:262px;top:421px;color:#6e7681">92</div><div class="ln" style="left:262px;top:440px;color:#6e7681">93</div><div class="ln" style="left:262px;top:459px;color:#6e7681">94</div><div class="ln" style="left:262px;top:478px;color:#6e7681">95</div><div class="ln" style="left:262px;top:497px;color:#6e7681">96</div><div class="ln" style="left:262px;top:516px;color:#6e7681">97</div><div class="ln" style="left:262px;top:535px;color:#6e7681">98</div><div class="ln" style="left:262px;top:554px;color:#6e7681">99</div><div class="ln" style="left:262px;top:573px;color:#6e7681">100</div><div class="ln" style="left:262px;top:592px;color:#6e7681">101</div><div class="ln" style="left:262px;top:611px;color:#6e7681">102</div><div class="ln" style="left:262px;top:630px;color:#6e7681">103</div><div class="ln" style="left:262px;top:649px;color:#6e7681">104</div><div class="ln" style="left:262px;top:668px;color:#cccccc">105</div><div class="ln" style="left:262px;top:687px;color:#6e7681">106</div><div class="ln" style="left:262px;top:706px;color:#6e7681">107</div><div class="ln" style="left:262px;top:725px;color:#6e7681">108</div><div class="ln" style="left:262px;top:744px;color:#6e7681">109</div><div class="ln" style="left:262px;top:763px;color:#6e7681">110</div><div class="ln" style="left:262px;top:782px;color:#6e7681">111</div><div class="ln" style="left:262px;top:801px;color:#6e7681">112</div><div class="ln" style="left:262px;top:820px;color:#6e7681">113</div><div class="ln" style="left:262px;top:839px;color:#6e7681">114</div><div class="ln" style="left:262px;top:858px;color:#6e7681">115</div><div class="ln" style="left:262px;top:877px;color:#6e7681">116</div><div class="ln" style="left:262px;top:896px;color:#6e7681">117</div><div style="position:absolute;left:498.68px;top:706px;width:154.8px;height:19px;background:#623315"></div><div style="position:absolute;left:528.94px;top:536px;width:9.690000000000001px;height:17px;border:1px solid #888888;background:rgba(0,100,0,0.1)"></div><div style="position:absolute;left:359.76px;top:669px;width:9.690000000000001px;height:17px;border:1px solid #888888;background:rgba(0,100,0,0.1)"></div><div style="position:absolute;left:330.0px;top:-16px;width:1px;height:38px;background:#404040"></div><div style="position:absolute;left:330.0px;top:155px;width:1px;height:741px;background:#404040"></div><div style="position:absolute;left:345.38px;top:193px;width:1px;height:304px;background:#404040"></div><div style="position:absolute;left:360.76px;top:212px;width:1px;height:266px;background:#404040"></div><div style="position:absolute;left:345.38px;top:535px;width:1px;height:152px;background:#707070"></div><div style="position:absolute;left:360.76px;top:554px;width:1px;height:114px;background:#404040"></div><div style="position:absolute;left:376.14px;top:573px;width:1px;height:57px;background:#404040"></div><div style="position:absolute;left:345.38px;top:744px;width:1px;height:57px;background:#404040"></div><div style="position:absolute;left:345.38px;top:858px;width:1px;height:57px;background:#404040"></div><div style="position:absolute;left:360.76px;top:896px;width:1px;height:19px;background:#404040"></div><div class="cl" style="left:330px;top:3px"><span style="color:#cccccc">  </span><span style="color:#4fc1ff">parseCasesTelFieldList</span><span style="color:#cccccc">,</span></div><div class="cl" style="left:330px;top:22px"><span style="color:#ffd700">}</span><span style="color:#cccccc"> = </span><span style="color:#dcdcaa">require</span><span style="color:#ffd700">(</span><span style="color:#ce9178">'app-workorder/tpls/newsetting/auto-assign/api'</span><span style="color:#ffd700">)</span><span style="color:#cccccc">;</span></div><div class="cl" style="left:330px;top:41px"><span style="color:#569cd6">const</span><span style="color:#cccccc"> </span><span style="color:#4fc1ff">woPreview</span><span style="color:#cccccc"> = </span><span style="color:#dcdcaa">require</span><span style="color:#ffd700">(</span><span style="color:#ce9178">'app-workorder/tpls/servicereport/preview/index-vue'</span><span style="color:#ffd700">)</span><span style="color:#cccccc">;</span></div><div class="cl" style="left:330px;top:60px"><span style="color:#569cd6">const</span><span style="color:#cccccc"> </span><span style="color:#4fc1ff">OperationBtnEditPanel</span><span style="color:#cccccc"> = </span><span style="color:#dcdcaa">require</span><span style="color:#ffd700">(</span><span style="color:#ce9178">'./operation_panel/operationpanel-vue'</span><span style="color:#ffd700">)</span><span style="color:#cccccc">;</span></div><div class="cl" style="left:330px;top:79px"><span style="color:#569cd6">const</span><span style="color:#cccccc"> </span><span style="color:#ffd700">{</span><span style="color:#cccccc"> </span><span style="color:#4fc1ff">PromiseApi</span><span style="color:#cccccc"> </span><span style="color:#ffd700">}</span><span style="color:#cccccc"> = </span><span style="color:#dcdcaa">require</span><span style="color:#ffd700">(</span><span style="color:#ce9178">'app-workorder-assets/js/api'</span><span style="color:#ffd700">)</span><span style="color:#cccccc">;</span></div><div class="cl" style="left:330px;top:98px"><span style="color:#569cd6">const</span><span style="color:#cccccc"> </span><span style="color:#4fc1ff">MailSendSelectItem</span><span style="color:#cccccc"> = </span><span style="color:#dcdcaa">require</span><span style="color:#ffd700">(</span><span style="color:#ce9178">'app-workorder/tpls/servicereport/form/components/mail-send-select-item/mail-send-select-item-vue'</span><span style="color:#ffd700">)</span><span style="color:#cccccc">;</span></div><div class="cl" style="left:330px;top:117px"></div><div class="cl" style="left:330px;top:136px"><span style="color:#9cdcfe">module</span><span style="color:#cccccc">.</span><span style="color:#9cdcfe">exports</span><span style="color:#cccccc"> = </span><span style="color:#9cdcfe">Vue</span><span style="color:#cccccc">.</span><span style="color:#dcdcaa">extend</span><span style="color:#ffd700">(</span><span style="color:#da70d6">{</span></div><div class="cl" style="left:330px;top:155px"><span style="color:#cccccc">  </span><span style="color:#9cdcfe">template</span><span style="color:#cccccc">: </span><span style="color:#ce9178">'__template__'</span><span style="color:#cccccc">,</span></div><div class="cl" style="left:330px;top:174px"><span style="color:#cccccc">  </span><span style="color:#dcdcaa">data</span><span style="color:#179fff">()</span><span style="color:#cccccc"> </span><span style="color:#179fff">{</span></div><div class="cl" style="left:330px;top:193px"><span style="color:#cccccc">    </span><span style="color:#c586c0">return</span><span style="color:#cccccc"> </span><span style="color:#ffd700">{</span></div><div class="cl" style="left:330px;top:212px"><span style="color:#cccccc">      </span><span style="color:#9cdcfe">isLoading</span><span style="color:#cccccc">: </span><span style="color:#569cd6">false</span><span style="color:#cccccc">,</span></div><div class="cl" style="left:330px;top:231px"><span style="color:#cccccc">      </span><span style="color:#9cdcfe">tColumns</span><span style="color:#cccccc">: </span><span style="color:#da70d6">[]</span><span style="color:#cccccc">,</span></div><div class="cl" style="left:330px;top:250px"><span style="color:#cccccc">      </span><span style="color:#9cdcfe">tData</span><span style="color:#cccccc">: </span><span style="color:#da70d6">[]</span><span style="color:#cccccc">,</span></div><div class="cl" style="left:330px;top:269px"><span style="color:#cccccc">      </span><span style="color:#9cdcfe">tableReady</span><span style="color:#cccccc">: </span><span style="color:#b5cea8">0</span><span style="color:#cccccc">,</span></div><div class="cl" style="left:330px;top:288px"><span style="color:#cccccc">      </span><span style="color:#9cdcfe">pageNumber</span><span style="color:#cccccc">: </span><span style="color:#b5cea8">1</span><span style="color:#cccccc">,</span></div><div class="cl" style="left:330px;top:307px"><span style="color:#cccccc">      </span><span style="color:#9cdcfe">pageSize</span><span style="color:#cccccc">: </span><span style="color:#b5cea8">20</span><span style="color:#cccccc">,</span></div><div class="cl" style="left:330px;top:326px"><span style="color:#cccccc">      </span><span style="color:#9cdcfe">total</span><span style="color:#cccccc">: </span><span style="color:#b5cea8">0</span><span style="color:#cccccc">,</span></div><div class="cl" style="left:330px;top:345px"><span style="color:#cccccc">      </span><span style="color:#9cdcfe">searchText</span><span style="color:#cccccc">: </span><span style="color:#ce9178">''</span><span style="color:#cccccc">,</span></div><div class="cl" style="left:330px;top:364px"><span style="color:#cccccc">      </span><span style="color:#9cdcfe">conditionsOptions</span><span style="color:#cccccc">: </span><span style="color:#da70d6">{}</span><span style="color:#cccccc">,</span></div><div class="cl" style="left:330px;top:383px"><span style="color:#cccccc">      </span><span style="color:#9cdcfe">telFieldList</span><span style="color:#cccccc">: </span><span style="color:#da70d6">[]</span><span style="color:#cccccc">,</span></div><div class="cl" style="left:330px;top:402px"><span style="color:#cccccc">      </span><span style="color:#9cdcfe">dialogVisible</span><span style="color:#cccccc">: </span><span style="color:#569cd6">false</span><span style="color:#cccccc">,</span></div><div class="cl" style="left:330px;top:421px"><span style="color:#cccccc">      </span><span style="color:#9cdcfe">templateId</span><span style="color:#cccccc">: </span><span style="color:#ce9178">''</span><span style="color:#cccccc">,</span></div><div class="cl" style="left:330px;top:440px"><span style="color:#cccccc">      </span><span style="color:#9cdcfe">serviceReportObjName</span><span style="color:#cccccc">: </span><span style="color:#ce9178">'CasesObj'</span><span style="color:#cccccc">,</span></div><div class="cl" style="left:330px;top:459px"><span style="color:#cccccc">      </span><span style="color:#9cdcfe">hasSendPermission</span><span style="color:#cccccc">: </span><span style="color:#569cd6">false</span><span style="color:#cccccc">,</span></div><div class="cl" style="left:330px;top:478px"><span style="color:#cccccc">    </span><span style="color:#ffd700">}</span><span style="color:#cccccc">;</span></div><div class="cl" style="left:330px;top:497px"><span style="color:#cccccc">  </span><span style="color:#179fff">}</span><span style="color:#cccccc">,</span></div><div class="cl" style="left:330px;top:516px"><span style="color:#cccccc">  </span><span style="color:#9cdcfe">watch</span><span style="color:#cccccc">: </span><span style="color:#179fff">{</span></div><div class="cl" style="left:330px;top:535px"><span style="color:#cccccc">    </span><span style="color:#9cdcfe">serviceReportObjName</span><span style="color:#cccccc">: </span><span style="color:#ffd700">{</span></div><div class="cl" style="left:330px;top:554px"><span style="color:#cccccc">      </span><span style="color:#dcdcaa">handler</span><span style="color:#da70d6">(</span><span style="color:#9cdcfe">newValue</span><span style="color:#cccccc">, </span><span style="color:#7fa2b8">oldValue</span><span style="color:#da70d6">)</span><span style="color:#cccccc"> </span><span style="color:#da70d6">{</span></div><div class="cl" style="left:330px;top:573px"><span style="color:#cccccc">        </span><span style="color:#4fc1ff">MailSendSelectItem</span><span style="color:#cccccc">.</span><span style="color:#dcdcaa">preLoad</span><span style="color:#179fff">(</span><span style="color:#9cdcfe">newValue</span><span style="color:#179fff">)</span><span style="color:#cccccc">;</span></div><div class="cl" style="left:330px;top:592px"><span style="color:#cccccc">        </span><span style="color:#569cd6">this</span><span style="color:#cccccc">.</span><span style="color:#dcdcaa">fetchReferenceObjectDescribe</span><span style="color:#179fff">()</span><span style="color:#cccccc">;</span></div><div class="cl" style="left:330px;top:611px"><span style="color:#cccccc">        </span><span style="color:#569cd6">this</span><span style="color:#cccccc">.</span><span style="color:#dcdcaa">search</span><span style="color:#179fff">()</span><span style="color:#cccccc">;</span></div><div class="cl" style="left:330px;top:630px"><span style="color:#cccccc">      </span><span style="color:#da70d6">}</span><span style="color:#cccccc">,</span></div><div class="cl" style="left:330px;top:649px"><span style="color:#cccccc">      </span><span style="color:#9cdcfe">immediate</span><span style="color:#cccccc">: </span><span style="color:#569cd6">true</span></div><div class="cl" style="left:330px;top:668px"><span style="color:#cccccc">    </span><span style="color:#ffd700">}</span></div><div class="cl" style="left:330px;top:687px"><span style="color:#cccccc">  </span><span style="color:#179fff">}</span><span style="color:#cccccc">,</span></div><div class="cl" style="left:330px;top:706px"><span style="color:#cccccc">  </span><span style="color:#9cdcfe">mixins</span><span style="color:#cccccc">: </span><span style="color:#179fff">[</span><span style="color:#9cdcfe">BaseMixin</span><span style="color:#cccccc">, </span><span style="color:#9cdcfe">moduleInitializationMixin</span><span style="color:#179fff">]</span><span style="color:#cccccc">,</span></div><div class="cl" style="left:330px;top:725px"><span style="color:#cccccc">  </span><span style="color:#9cdcfe">components</span><span style="color:#cccccc">: </span><span style="color:#179fff">{</span></div><div class="cl" style="left:330px;top:744px"><span style="color:#cccccc">    </span><span style="color:#9cdcfe">TopHead</span><span style="color:#cccccc">,</span></div><div class="cl" style="left:330px;top:763px"><span style="color:#cccccc">    </span><span style="color:#9cdcfe">settingTable</span><span style="color:#cccccc">: </span><span style="color:#9cdcfe">SettingTable</span><span style="color:#cccccc">,</span></div><div class="cl" style="left:330px;top:782px"><span style="color:#cccccc">    </span><span style="color:#9cdcfe">woPreview</span><span style="color:#cccccc">,</span></div><div class="cl" style="left:330px;top:801px"><span style="color:#cccccc">  </span><span style="color:#179fff">}</span><span style="color:#cccccc">,</span></div><div class="cl" style="left:330px;top:820px"><span style="color:#cccccc">  </span><span style="color:#9cdcfe">computed</span><span style="color:#cccccc">: </span><span style="color:#179fff">{}</span><span style="color:#cccccc">,</span></div><div class="cl" style="left:330px;top:839px"><span style="color:#cccccc">  </span><span style="color:#9cdcfe">methods</span><span style="color:#cccccc">: </span><span style="color:#179fff">{</span></div><div class="cl" style="left:330px;top:858px"><span style="color:#cccccc">    </span><span style="color:#6a9955">//</span></div><div class="cl" style="left:330px;top:877px"><span style="color:#cccccc">    </span><span style="color:#dcdcaa">changePageSize</span><span style="color:#ffd700">(</span><span style="color:#9cdcfe">size</span><span style="color:#ffd700">)</span><span style="color:#cccccc"> </span><span style="color:#ffd700">{</span></div><div class="cl" style="left:330px;top:896px"><span style="color:#cccccc">      </span><span style="color:#569cd6">const</span><span style="color:#cccccc"> </span><span style="color:#4fc1ff">me</span><span style="color:#cccccc"> = </span><span style="color:#569cd6">this</span><span style="color:#cccccc">;</span></div><div class="cl" style="left:330px;top:-16px"><span style="color:#4fc1ff">  getBizFieldList,</span></div><svg style="position:absolute;left:377px;top:862px;opacity:1" width="32" height="17" viewBox="-1 -1 32 17"><path transform="translate(0.00 0) scale(0.929)" d="M1 6.5L6 4.8M3 1V10.5Q3 11.5 5 11.2M7 2.5H13V11Q13 12.8 11 12.3M10 2.5Q10 9.5 6.5 13" stroke="#6a9955" stroke-width="1.08" fill="none" stroke-linecap="round" stroke-linejoin="round"/><path transform="translate(14.00 0) scale(0.929)" d="M0.5 4.5H4.5M2.5 1V12.5L1.3 11.5M0.5 9.5L4.5 7.5M7.5 0.8L6 3.8M7 2.3H11L9.8 4.2M6.3 4.5H13V8.2H6.3ZM5.5 9.8H13.5M9.6 4.5V9.8Q9 12.3 5.5 13.3M9.9 10.2L13.5 13.3" stroke="#6a9955" stroke-width="1.08" fill="none" stroke-linecap="round" stroke-linejoin="round"/></svg><svg style="position:absolute;left:412px;top:862px;opacity:1" width="60" height="17" viewBox="-1 -1 60 17"><path transform="translate(0.00 0) scale(0.929)" d="M5 1Q4 4 1 6.8M9 1Q10 4 13.5 6.8M3 7.8H11Q11 12.3 9 12.8M6.5 7.8Q6 11.3 2.5 13.3" stroke="#6a9955" stroke-width="1.08" fill="none" stroke-linecap="round" stroke-linejoin="round"/><path transform="translate(14.00 0) scale(0.929)" d="M1 1.5H13M7 1.5L6 3.5M3 3.5H11V10M3 3.5V10M7 5.5V9Q6.5 11.5 2 13.3M8 10.5L12.5 13.3" stroke="#6a9955" stroke-width="1.08" fill="none" stroke-linecap="round" stroke-linejoin="round"/><path transform="translate(28.00 0) scale(0.929)" d="M1 5H13M7 1V5Q6.5 10 1.5 13.3M7.5 6Q9 10 13.5 13.3" stroke="#6a9955" stroke-width="1.08" fill="none" stroke-linecap="round" stroke-linejoin="round"/><path transform="translate(42.00 0) scale(0.929)" d="M7 1V12Q7 13.3 5.5 12.5M3.5 5L1.5 10M10.5 5L13 9.5" stroke="#6a9955" stroke-width="1.08" fill="none" stroke-linecap="round" stroke-linejoin="round"/></svg><svg style="position:absolute;left:537.6px;top:39px" width="32" height="4" viewBox="0 0 32 4"><path d="M0 2 Q1 0 2 2 Q3 4 4 2 Q5 0 6 2 Q7 4 8 2 Q9 0 10 2 Q11 4 12 2 Q13 0 14 2 Q15 4 16 2 Q17 0 18 2 Q19 4 20 2 Q21 0 22 2 Q23 4 24 2 Q25 0 26 2 Q27 4 28 2 Q29 0 30 2" stroke="#3d8fd1" stroke-width="1" fill="none"/></svg><svg style="position:absolute;left:576.1px;top:39px" width="78" height="4" viewBox="0 0 78 4"><path d="M0 2 Q1 0 2 2 Q3 4 4 2 Q5 0 6 2 Q7 4 8 2 Q9 0 10 2 Q11 4 12 2 Q13 0 14 2 Q15 4 16 2 Q17 0 18 2 Q19 4 20 2 Q21 0 22 2 Q23 4 24 2 Q25 0 26 2 Q27 4 28 2 Q29 0 30 2 Q31 4 32 2 Q33 0 34 2 Q35 4 36 2 Q37 0 38 2 Q39 4 40 2 Q41 0 42 2 Q43 4 44 2 Q45 0 46 2 Q47 4 48 2 Q49 0 50 2 Q51 4 52 2 Q53 0 54 2 Q55 4 56 2 Q57 0 58 2 Q59 4 60 2 Q61 0 62 2 Q63 4 64 2 Q65 0 66 2 Q67 4 68 2 Q69 0 70 2 Q71 4 72 2 Q73 0 74 2 Q75 4 76 2" stroke="#3d8fd1" stroke-width="1" fill="none"/></svg><svg style="position:absolute;left:645.3px;top:58px" width="32" height="4" viewBox="0 0 32 4"><path d="M0 2 Q1 0 2 2 Q3 4 4 2 Q5 0 6 2 Q7 4 8 2 Q9 0 10 2 Q11 4 12 2 Q13 0 14 2 Q15 4 16 2 Q17 0 18 2 Q19 4 20 2 Q21 0 22 2 Q23 4 24 2 Q25 0 26 2 Q27 4 28 2 Q29 0 30 2" stroke="#3d8fd1" stroke-width="1" fill="none"/></svg><svg style="position:absolute;left:683.7px;top:58px" width="101" height="4" viewBox="0 0 101 4"><path d="M0 2 Q1 0 2 2 Q3 4 4 2 Q5 0 6 2 Q7 4 8 2 Q9 0 10 2 Q11 4 12 2 Q13 0 14 2 Q15 4 16 2 Q17 0 18 2 Q19 4 20 2 Q21 0 22 2 Q23 4 24 2 Q25 0 26 2 Q27 4 28 2 Q29 0 30 2 Q31 4 32 2 Q33 0 34 2 Q35 4 36 2 Q37 0 38 2 Q39 4 40 2 Q41 0 42 2 Q43 4 44 2 Q45 0 46 2 Q47 4 48 2 Q49 0 50 2 Q51 4 52 2 Q53 0 54 2 Q55 4 56 2 Q57 0 58 2 Q59 4 60 2 Q61 0 62 2 Q63 4 64 2 Q65 0 66 2 Q67 4 68 2 Q69 0 70 2 Q71 4 72 2 Q73 0 74 2 Q75 4 76 2 Q77 0 78 2 Q79 4 80 2 Q81 0 82 2 Q83 4 84 2 Q85 0 86 2 Q87 4 88 2 Q89 0 90 2 Q91 4 92 2 Q93 0 94 2 Q95 4 96 2 Q97 0 98 2" stroke="#3d8fd1" stroke-width="1" fill="none"/></svg><svg style="position:absolute;left:768.3px;top:77px" width="109" height="4" viewBox="0 0 109 4"><path d="M0 2 Q1 0 2 2 Q3 4 4 2 Q5 0 6 2 Q7 4 8 2 Q9 0 10 2 Q11 4 12 2 Q13 0 14 2 Q15 4 16 2 Q17 0 18 2 Q19 4 20 2 Q21 0 22 2 Q23 4 24 2 Q25 0 26 2 Q27 4 28 2 Q29 0 30 2 Q31 4 32 2 Q33 0 34 2 Q35 4 36 2 Q37 0 38 2 Q39 4 40 2 Q41 0 42 2 Q43 4 44 2 Q45 0 46 2 Q47 4 48 2 Q49 0 50 2 Q51 4 52 2 Q53 0 54 2 Q55 4 56 2 Q57 0 58 2 Q59 4 60 2 Q61 0 62 2 Q63 4 64 2 Q65 0 66 2 Q67 4 68 2 Q69 0 70 2 Q71 4 72 2 Q73 0 74 2 Q75 4 76 2 Q77 0 78 2 Q79 4 80 2 Q81 0 82 2 Q83 4 84 2 Q85 0 86 2 Q87 4 88 2 Q89 0 90 2 Q91 4 92 2 Q93 0 94 2 Q95 4 96 2 Q97 0 98 2 Q99 4 100 2 Q101 0 102 2 Q103 4 104 2 Q105 0 106 2" stroke="#3d8fd1" stroke-width="1" fill="none"/></svg><svg style="position:absolute;left:714.5px;top:115px" width="32" height="4" viewBox="0 0 32 4"><path d="M0 2 Q1 0 2 2 Q3 4 4 2 Q5 0 6 2 Q7 4 8 2 Q9 0 10 2 Q11 4 12 2 Q13 0 14 2 Q15 4 16 2 Q17 0 18 2 Q19 4 20 2 Q21 0 22 2 Q23 4 24 2 Q25 0 26 2 Q27 4 28 2 Q29 0 30 2" stroke="#3d8fd1" stroke-width="1" fill="none"/></svg><svg style="position:absolute;left:753.0px;top:115px" width="101" height="4" viewBox="0 0 101 4"><path d="M0 2 Q1 0 2 2 Q3 4 4 2 Q5 0 6 2 Q7 4 8 2 Q9 0 10 2 Q11 4 12 2 Q13 0 14 2 Q15 4 16 2 Q17 0 18 2 Q19 4 20 2 Q21 0 22 2 Q23 4 24 2 Q25 0 26 2 Q27 4 28 2 Q29 0 30 2 Q31 4 32 2 Q33 0 34 2 Q35 4 36 2 Q37 0 38 2 Q39 4 40 2 Q41 0 42 2 Q43 4 44 2 Q45 0 46 2 Q47 4 48 2 Q49 0 50 2 Q51 4 52 2 Q53 0 54 2 Q55 4 56 2 Q57 0 58 2 Q59 4 60 2 Q61 0 62 2 Q63 4 64 2 Q65 0 66 2 Q67 4 68 2 Q69 0 70 2 Q71 4 72 2 Q73 0 74 2 Q75 4 76 2 Q77 0 78 2 Q79 4 80 2 Q81 0 82 2 Q83 4 84 2 Q85 0 86 2 Q87 4 88 2 Q89 0 90 2 Q91 4 92 2 Q93 0 94 2 Q95 4 96 2 Q97 0 98 2" stroke="#3d8fd1" stroke-width="1" fill="none"/></svg><div class="cl" style="left:418px;top:668px;color:#4e4e4e">You, 3 seconds ago • Uncommitted changes</div><div style="position:absolute;left:310px;top:535px;width:3px;height:114px;background:repeating-linear-gradient(to bottom,#1b81a8 0 2px,#1f1f1f 2px 3px)"></div><div style="position:absolute;left:310px;top:649px;width:3px;height:38px;background:#2ea043"></div></div><div style="position:absolute;left:262px;top:92px;width:1210px;height:3px;background:linear-gradient(#0d0d0d,rgba(0,0,0,0))"></div><div style="position:absolute;left:330px;top:998px;width:1050px;height:12px;background:rgba(121,121,121,0.4)"></div><div style="position:absolute;left:262px;top:70px;width:1348px;height:22px;background:#1f1f1f"></div><div style="position:absolute;left:278px;top:71px;white-space:pre;font-size:13px;line-height:22px;color:#a9a9a9">workorder</div><svg style="position:absolute;left:341px;top:75px;" width="9" height="13" viewBox="0 0 9 13" fill="none"><path d="M2 2.5l4.2 4-4.2 4" stroke="#a9a9a9" stroke-width="1.1"/></svg><div style="position:absolute;left:353px;top:71px;white-space:pre;font-size:13px;line-height:22px;color:#a9a9a9">tpls</div><svg style="position:absolute;left:378px;top:75px;" width="9" height="13" viewBox="0 0 9 13" fill="none"><path d="M2 2.5l4.2 4-4.2 4" stroke="#a9a9a9" stroke-width="1.1"/></svg><div style="position:absolute;left:390px;top:71px;white-space:pre;font-size:13px;line-height:22px;color:#a9a9a9">servicereport</div><svg style="position:absolute;left:468px;top:75px;" width="9" height="13" viewBox="0 0 9 13" fill="none"><path d="M2 2.5l4.2 4-4.2 4" stroke="#a9a9a9" stroke-width="1.1"/></svg><svg style="position:absolute;left:486px;top:75px;" width="13" height="12" viewBox="0 0 13 12" fill="none"><path d="M0.3 0.5h3.2L6.5 6 9.5 0.5h3.2L6.5 11.5z" fill="#8dc149"/><path d="M3.3 0.5h1.6L6.5 3.3 8.1 0.5h1.6L6.5 6.3z" fill="#b6dd8a"/></svg><div style="position:absolute;left:502px;top:71px;white-space:pre;font-size:13px;line-height:22px;color:#a9a9a9">servicereport.vue</div><svg style="position:absolute;left:604px;top:75px;" width="9" height="13" viewBox="0 0 9 13" fill="none"><path d="M2 2.5l4.2 4-4.2 4" stroke="#a9a9a9" stroke-width="1.1"/></svg><svg style="position:absolute;left:616px;top:73px;" width="16" height="16" viewBox="0 0 16 16" fill="none"><path d="M8 1.8l6 2.8v6.8l-6 2.8-6-2.8V4.6z" stroke="#75beff" stroke-width="1.2"/><path d="M2 4.6l6 2.8 6-2.8M8 7.4v6.8" stroke="#75beff" stroke-width="1.2"/></svg><div style="position:absolute;left:635px;top:71px;white-space:pre;font-size:13px;line-height:22px;color:#a9a9a9">script</div><svg style="position:absolute;left:671px;top:75px;" width="9" height="13" viewBox="0 0 9 13" fill="none"><path d="M2 2.5l4.2 4-4.2 4" stroke="#a9a9a9" stroke-width="1.1"/></svg><svg style="position:absolute;left:682px;top:74px;" width="17" height="14" viewBox="0 0 17 14" fill="none"><path d="M3.5 1.5h-2v11h2M13.5 1.5h2v11h-2" stroke="#75beff" stroke-width="1.2"/><rect x="5.5" y="4.5" width="6" height="5" rx="1" stroke="#75beff" stroke-width="1.2"/></svg><div style="position:absolute;left:703px;top:71px;white-space:pre;font-size:13px;line-height:22px;color:#a9a9a9">&lt;unknown&gt;</div><svg style="position:absolute;left:776px;top:75px;" width="9" height="13" viewBox="0 0 9 13" fill="none"><path d="M2 2.5l4.2 4-4.2 4" stroke="#a9a9a9" stroke-width="1.1"/></svg><svg style="position:absolute;left:788px;top:73px;" width="15" height="15" viewBox="0 0 15 15" fill="none"><path d="M13 3.5a3.2 3.2 0 0 1-4.2 3.7L3.5 12.5a1.2 1.2 0 0 1-1.7-1.7L7 5.5A3.2 3.2 0 0 1 10.8 1.3L9 3.2l0.5 1.6 1.6 0.5z" stroke="#cccccc" stroke-width="1.1"/></svg><div style="position:absolute;left:807px;top:71px;white-space:pre;font-size:13px;line-height:22px;color:#a9a9a9">watch</div><svg style="position:absolute;left:844px;top:75px;" width="9" height="13" viewBox="0 0 9 13" fill="none"><path d="M2 2.5l4.2 4-4.2 4" stroke="#a9a9a9" stroke-width="1.1"/></svg><svg style="position:absolute;left:857px;top:73px;" width="15" height="15" viewBox="0 0 15 15" fill="none"><path d="M13 3.5a3.2 3.2 0 0 1-4.2 3.7L3.5 12.5a1.2 1.2 0 0 1-1.7-1.7L7 5.5A3.2 3.2 0 0 1 10.8 1.3L9 3.2l0.5 1.6 1.6 0.5z" stroke="#cccccc" stroke-width="1.1"/></svg><div style="position:absolute;left:876px;top:71px;white-space:pre;font-size:13px;line-height:22px;color:#a9a9a9">serviceReportObjName</div><div style="position:absolute;left:1043px;top:91px;width:418px;height:34px;background:#202020;box-shadow:0 0 8px 2px rgba(0,0,0,0.6)"></div><div style="position:absolute;left:1043px;top:91px;width:3px;height:34px;background:#454545"></div><svg style="position:absolute;left:1049px;top:100px;" width="10" height="16" viewBox="0 0 10 16" fill="none"><path d="M3 3l5 5-5 5" stroke="#cccccc" stroke-width="1.2"/></svg><div style="position:absolute;left:1064px;top:96px;width:221px;height:24px;background:#313131;border-radius:2px"></div><div style="position:absolute;left:1071px;top:98px;white-space:pre;font-size:13px;line-height:22px;color:#cccccc">moduleInitialization</div><div style="position:absolute;left:1222px;top:98px;white-space:pre;font-size:11px;line-height:22px;color:#cccccc">Aa</div><div style="position:absolute;left:1244px;top:97px;white-space:pre;font-size:12px;line-height:22px;color:#cccccc">ab</div><svg style="position:absolute;left:1242px;top:111px;" width="18" height="4" viewBox="0 0 18 4" fill="none"><path d="M1 0.5v2h15v-2" stroke="#cccccc" stroke-width="1.1"/></svg><div style="position:absolute;left:1267px;top:110px;width:4px;height:4px;background:#cccccc"></div><svg style="position:absolute;left:1271px;top:101px;" width="10" height="10" viewBox="0 0 10 10" fill="none"><path d="M5 0.5v8M1.2 2.6l7.6 4.2M8.8 2.6L1.2 6.8" stroke="#cccccc" stroke-width="1.4"/></svg><div style="position:absolute;left:1290px;top:98px;white-space:pre;font-size:12px;line-height:22px;color:#cccccc">2 of 4</div><svg style="position:absolute;left:1364px;top:100px;" width="16" height="16" viewBox="0 0 16 16" fill="none"><path d="M8 14V2.5M3 7l5-5 5 5" stroke="#cccccc" stroke-width="1.2"/></svg><svg style="position:absolute;left:1389px;top:100px;" width="16" height="16" viewBox="0 0 16 16" fill="none"><path d="M8 2v11.5M3 9l5 5 5-5" stroke="#cccccc" stroke-width="1.2"/></svg><svg style="position:absolute;left:1412px;top:100px;" width="16" height="16" viewBox="0 0 16 16" fill="none"><path d="M1.5 4h13M1.5 8h13M1.5 12h9" stroke="#cccccc" stroke-width="1.2"/></svg><svg style="position:absolute;left:1439px;top:100px;" width="16" height="16" viewBox="0 0 16 16" fill="none"><path d="M3 3l10 10M13 3L3 13" stroke="#cccccc" stroke-width="1.2"/></svg><div style="position:absolute;left:1475px;top:92px;width:135px;height:918px;background:#1f1f1f"></div><div style="position:absolute;left:1474px;top:92px;width:1px;height:918px;background:#161616"></div><svg style="position:absolute;left:1475px;top:92px;" width="135" height="918" viewBox="0 0 135 918" fill="none"><rect x="16" y="1" width="5" height="1.5" fill="#9cdcfe" fill-opacity="0.7"/><rect x="22" y="1" width="4" height="1.5" fill="#6a9955" fill-opacity="0.7"/><rect x="27" y="1" width="4" height="1.5" fill="#d4d4d4" fill-opacity="0.7"/><rect x="32" y="1" width="5" height="1.5" fill="#c586c0" fill-opacity="0.7"/><rect x="38" y="1" width="5" height="1.5" fill="#d4d4d4" fill-opacity="0.7"/><rect x="44" y="1" width="3" height="1.5" fill="#d4d4d4" fill-opacity="0.7"/><rect x="48" y="1" width="4" height="1.5" fill="#d4d4d4" fill-opacity="0.7"/><rect x="53" y="1" width="5" height="1.5" fill="#d4d4d4" fill-opacity="0.7"/><rect x="59" y="1" width="6" height="1.5" fill="#d4d4d4" fill-opacity="0.7"/><rect x="66" y="1" width="1" height="1.5" fill="#9cdcfe" fill-opacity="0.7"/><rect x="68" y="1" width="7" height="1.5" fill="#dcdcaa" fill-opacity="0.7"/><rect x="76" y="1" width="5" height="1.5" fill="#9cdcfe" fill-opacity="0.7"/><rect x="82" y="1" width="6" height="1.5" fill="#569cd6" fill-opacity="0.7"/><rect x="89" y="1" width="4" height="1.5" fill="#c586c0" fill-opacity="0.7"/><rect x="94" y="1" width="1" height="1.5" fill="#4fc1ff" fill-opacity="0.7"/><rect x="96" y="1" width="6" height="1.5" fill="#c586c0" fill-opacity="0.7"/><rect x="103" y="1" width="1" height="1.5" fill="#4fc1ff" fill-opacity="0.7"/><rect x="105" y="1" width="1" height="1.5" fill="#dcdcaa" fill-opacity="0.7"/><rect x="107" y="1" width="4" height="1.5" fill="#6a9955" fill-opacity="0.7"/><rect x="112" y="1" width="3" height="1.5" fill="#dcdcaa" fill-opacity="0.7"/><rect x="116" y="1" width="1" height="1.5" fill="#ce9178" fill-opacity="0.7"/><rect x="118" y="1" width="2" height="1.5" fill="#6a9955" fill-opacity="0.7"/><rect x="18" y="3" width="2" height="1.5" fill="#dcdcaa" fill-opacity="0.7"/><rect x="21" y="3" width="5" height="1.5" fill="#ce9178" fill-opacity="0.7"/><rect x="27" y="3" width="1" height="1.5" fill="#c586c0" fill-opacity="0.7"/><rect x="29" y="3" width="4" height="1.5" fill="#ce9178" fill-opacity="0.7"/><rect x="34" y="3" width="2" height="1.5" fill="#9cdcfe" fill-opacity="0.7"/><rect x="37" y="3" width="3" height="1.5" fill="#569cd6" fill-opacity="0.7"/><rect x="41" y="3" width="1" height="1.5" fill="#4fc1ff" fill-opacity="0.7"/><rect x="43" y="3" width="4" height="1.5" fill="#569cd6" fill-opacity="0.7"/><rect x="48" y="3" width="6" height="1.5" fill="#c586c0" fill-opacity="0.7"/><rect x="55" y="3" width="4" height="1.5" fill="#d4d4d4" fill-opacity="0.7"/><rect x="60" y="3" width="6" height="1.5" fill="#c586c0" fill-opacity="0.7"/><rect x="67" y="3" width="3" height="1.5" fill="#569cd6" fill-opacity="0.7"/><rect x="71" y="3" width="3" height="1.5" fill="#569cd6" fill-opacity="0.7"/><rect x="75" y="3" width="2" height="1.5" fill="#6a9955" fill-opacity="0.7"/><rect x="78" y="3" width="1" height="1.5" fill="#d4d4d4" fill-opacity="0.7"/><rect x="80" y="3" width="7" height="1.5" fill="#4fc1ff" fill-opacity="0.7"/><rect x="88" y="3" width="3" height="1.5" fill="#d4d4d4" fill-opacity="0.7"/><rect x="92" y="3" width="5" height="1.5" fill="#dcdcaa" fill-opacity="0.7"/><rect x="98" y="3" width="6" height="1.5" fill="#d4d4d4" fill-opacity="0.7"/><rect x="105" y="3" width="7" height="1.5" fill="#dcdcaa" fill-opacity="0.7"/><rect x="14" y="5" width="2" height="1.5" fill="#dcdcaa" fill-opacity="0.7"/><rect x="17" y="5" width="5" height="1.5" fill="#dcdcaa" fill-opacity="0.7"/><rect x="23" y="5" width="6" height="1.5" fill="#9cdcfe" fill-opacity="0.7"/><rect x="30" y="5" width="4" height="1.5" fill="#9cdcfe" fill-opacity="0.7"/><rect x="12" y="7" width="1" height="1.5" fill="#d4d4d4" fill-opacity="0.7"/><rect x="14" y="7" width="3" height="1.5" fill="#c586c0" fill-opacity="0.7"/><rect x="18" y="7" width="1" height="1.5" fill="#9cdcfe" fill-opacity="0.7"/><rect x="14" y="9" width="1" height="1.5" fill="#dcdcaa" fill-opacity="0.7"/><rect x="16" y="9" width="3" height="1.5" fill="#d4d4d4" fill-opacity="0.7"/><rect x="16" y="11" width="1" height="1.5" fill="#ce9178" fill-opacity="0.7"/><rect x="18" y="11" width="6" height="1.5" fill="#569cd6" fill-opacity="0.7"/><rect x="25" y="11" width="5" height="1.5" fill="#dcdcaa" fill-opacity="0.7"/><rect x="16" y="13" width="6" height="1.5" fill="#4fc1ff" fill-opacity="0.7"/><rect x="23" y="13" width="4" height="1.5" fill="#6a9955" fill-opacity="0.7"/><rect x="28" y="13" width="3" height="1.5" fill="#dcdcaa" fill-opacity="0.7"/><rect x="32" y="13" width="2" height="1.5" fill="#4fc1ff" fill-opacity="0.7"/><rect x="16" y="15" width="4" height="1.5" fill="#569cd6" fill-opacity="0.7"/><rect x="21" y="15" width="7" height="1.5" fill="#ce9178" fill-opacity="0.7"/><rect x="16" y="17" width="7" height="1.5" fill="#ce9178" fill-opacity="0.7"/><rect x="24" y="17" width="4" height="1.5" fill="#dcdcaa" fill-opacity="0.7"/><rect x="29" y="17" width="3" height="1.5" fill="#c586c0" fill-opacity="0.7"/><rect x="16" y="19" width="6" height="1.5" fill="#d4d4d4" fill-opacity="0.7"/><rect x="23" y="19" width="4" height="1.5" fill="#569cd6" fill-opacity="0.7"/><rect x="28" y="19" width="2" height="1.5" fill="#569cd6" fill-opacity="0.7"/><rect x="16" y="21" width="6" height="1.5" fill="#4fc1ff" fill-opacity="0.7"/><rect x="23" y="21" width="3" height="1.5" fill="#569cd6" fill-opacity="0.7"/><rect x="27" y="21" width="4" height="1.5" fill="#4fc1ff" fill-opacity="0.7"/><rect x="32" y="21" width="4" height="1.5" fill="#ce9178" fill-opacity="0.7"/><rect x="16" y="23" width="4" height="1.5" fill="#4fc1ff" fill-opacity="0.7"/><rect x="21" y="23" width="1" height="1.5" fill="#ce9178" fill-opacity="0.7"/><rect x="23" y="23" width="4" height="1.5" fill="#6a9955" fill-opacity="0.7"/><rect x="28" y="23" width="2" height="1.5" fill="#6a9955" fill-opacity="0.7"/><rect x="16" y="25" width="3" height="1.5" fill="#9cdcfe" fill-opacity="0.7"/><rect x="20" y="25" width="1" height="1.5" fill="#d4d4d4" fill-opacity="0.7"/><rect x="22" y="25" width="2" height="1.5" fill="#ce9178" fill-opacity="0.7"/><rect x="25" y="25" width="6" height="1.5" fill="#d4d4d4" fill-opacity="0.7"/><rect x="32" y="25" width="4" height="1.5" fill="#4fc1ff" fill-opacity="0.7"/><rect x="37" y="25" width="1" height="1.5" fill="#569cd6" fill-opacity="0.7"/><rect x="16" y="27" width="2" height="1.5" fill="#4fc1ff" fill-opacity="0.7"/><rect x="19" y="27" width="6" height="1.5" fill="#4fc1ff" fill-opacity="0.7"/><rect x="26" y="27" width="3" height="1.5" fill="#ce9178" fill-opacity="0.7"/><rect x="30" y="27" width="3" height="1.5" fill="#6a9955" fill-opacity="0.7"/><rect x="34" y="27" width="5" height="1.5" fill="#d4d4d4" fill-opacity="0.7"/><rect x="40" y="27" width="2" height="1.5" fill="#d4d4d4" fill-opacity="0.7"/><rect x="16" y="29" width="4" height="1.5" fill="#4fc1ff" fill-opacity="0.7"/><rect x="21" y="29" width="2" height="1.5" fill="#c586c0" fill-opacity="0.7"/><rect x="24" y="29" width="6" height="1.5" fill="#dcdcaa" fill-opacity="0.7"/><rect x="31" y="29" width="1" height="1.5" fill="#4fc1ff" fill-opacity="0.7"/><rect x="33" y="29" width="7" height="1.5" fill="#4fc1ff" fill-opacity="0.7"/><rect x="41" y="29" width="1" height="1.5" fill="#4fc1ff" fill-opacity="0.7"/><rect x="43" y="29" width="3" height="1.5" fill="#c586c0" fill-opacity="0.7"/><rect x="14" y="31" width="5" height="1.5" fill="#c586c0" fill-opacity="0.7"/><rect x="20" y="31" width="7" height="1.5" fill="#dcdcaa" fill-opacity="0.7"/><rect x="28" y="31" width="6" height="1.5" fill="#4fc1ff" fill-opacity="0.7"/><rect x="35" y="31" width="7" height="1.5" fill="#c586c0" fill-opacity="0.7"/><rect x="43" y="31" width="5" height="1.5" fill="#569cd6" fill-opacity="0.7"/><rect x="49" y="31" width="5" height="1.5" fill="#569cd6" fill-opacity="0.7"/><rect x="16" y="33" width="2" height="1.5" fill="#ce9178" fill-opacity="0.7"/><rect x="19" y="33" width="7" height="1.5" fill="#6a9955" fill-opacity="0.7"/><rect x="27" y="33" width="7" height="1.5" fill="#d4d4d4" fill-opacity="0.7"/><rect x="35" y="33" width="7" height="1.5" fill="#9cdcfe" fill-opacity="0.7"/><rect x="43" y="33" width="2" height="1.5" fill="#9cdcfe" fill-opacity="0.7"/><rect x="46" y="33" width="5" height="1.5" fill="#569cd6" fill-opacity="0.7"/><rect x="52" y="33" width="5" height="1.5" fill="#d4d4d4" fill-opacity="0.7"/><rect x="58" y="33" width="1" height="1.5" fill="#c586c0" fill-opacity="0.7"/><rect x="60" y="33" width="1" height="1.5" fill="#d4d4d4" fill-opacity="0.7"/><rect x="62" y="33" width="4" height="1.5" fill="#ce9178" fill-opacity="0.7"/><rect x="18" y="35" width="3" height="1.5" fill="#ce9178" fill-opacity="0.7"/><rect x="22" y="35" width="3" height="1.5" fill="#ce9178" fill-opacity="0.7"/><rect x="26" y="35" width="3" height="1.5" fill="#ce9178" fill-opacity="0.7"/><rect x="30" y="35" width="1" height="1.5" fill="#569cd6" fill-opacity="0.7"/><rect x="32" y="35" width="1" height="1.5" fill="#c586c0" fill-opacity="0.7"/><rect x="34" y="35" width="2" height="1.5" fill="#dcdcaa" fill-opacity="0.7"/><rect x="37" y="35" width="4" height="1.5" fill="#4fc1ff" fill-opacity="0.7"/><rect x="42" y="35" width="7" height="1.5" fill="#6a9955" fill-opacity="0.7"/><rect x="50" y="35" width="4" height="1.5" fill="#4fc1ff" fill-opacity="0.7"/><rect x="55" y="35" width="3" height="1.5" fill="#4fc1ff" fill-opacity="0.7"/><rect x="59" y="35" width="4" height="1.5" fill="#569cd6" fill-opacity="0.7"/><rect x="20" y="37" width="4" height="1.5" fill="#6a9955" fill-opacity="0.7"/><rect x="25" y="37" width="5" height="1.5" fill="#ce9178" fill-opacity="0.7"/><rect x="31" y="37" width="6" height="1.5" fill="#9cdcfe" fill-opacity="0.7"/><rect x="38" y="37" width="4" height="1.5" fill="#4fc1ff" fill-opacity="0.7"/><rect x="43" y="37" width="7" height="1.5" fill="#9cdcfe" fill-opacity="0.7"/><rect x="51" y="37" width="7" height="1.5" fill="#c586c0" fill-opacity="0.7"/><rect x="59" y="37" width="7" height="1.5" fill="#ce9178" fill-opacity="0.7"/><rect x="67" y="37" width="4" height="1.5" fill="#9cdcfe" fill-opacity="0.7"/><rect x="72" y="37" width="5" height="1.5" fill="#4fc1ff" fill-opacity="0.7"/><rect x="78" y="37" width="2" height="1.5" fill="#9cdcfe" fill-opacity="0.7"/><rect x="22" y="39" width="7" height="1.5" fill="#ce9178" fill-opacity="0.7"/><rect x="30" y="39" width="4" height="1.5" fill="#c586c0" fill-opacity="0.7"/><rect x="35" y="39" width="2" height="1.5" fill="#dcdcaa" fill-opacity="0.7"/><rect x="38" y="39" width="6" height="1.5" fill="#569cd6" fill-opacity="0.7"/><rect x="45" y="39" width="6" height="1.5" fill="#c586c0" fill-opacity="0.7"/><rect x="52" y="39" width="6" height="1.5" fill="#569cd6" fill-opacity="0.7"/><rect x="59" y="39" width="3" height="1.5" fill="#dcdcaa" fill-opacity="0.7"/><rect x="63" y="39" width="4" height="1.5" fill="#c586c0" fill-opacity="0.7"/><rect x="68" y="39" width="5" height="1.5" fill="#d4d4d4" fill-opacity="0.7"/><rect x="74" y="39" width="3" height="1.5" fill="#9cdcfe" fill-opacity="0.7"/><rect x="22" y="41" width="4" height="1.5" fill="#d4d4d4" fill-opacity="0.7"/><rect x="27" y="41" width="6" height="1.5" fill="#ce9178" fill-opacity="0.7"/><rect x="34" y="41" width="3" height="1.5" fill="#569cd6" fill-opacity="0.7"/><rect x="38" y="41" width="7" height="1.5" fill="#569cd6" fill-opacity="0.7"/><rect x="46" y="41" width="1" height="1.5" fill="#6a9955" fill-opacity="0.7"/><rect x="48" y="41" width="1" height="1.5" fill="#6a9955" fill-opacity="0.7"/><rect x="50" y="41" width="7" height="1.5" fill="#9cdcfe" fill-opacity="0.7"/><rect x="58" y="41" width="3" height="1.5" fill="#ce9178" fill-opacity="0.7"/><rect x="62" y="41" width="2" height="1.5" fill="#569cd6" fill-opacity="0.7"/><rect x="65" y="41" width="3" height="1.5" fill="#dcdcaa" fill-opacity="0.7"/><rect x="69" y="41" width="5" height="1.5" fill="#dcdcaa" fill-opacity="0.7"/><rect x="75" y="41" width="5" height="1.5" fill="#6a9955" fill-opacity="0.7"/><rect x="81" y="41" width="3" height="1.5" fill="#dcdcaa" fill-opacity="0.7"/><rect x="20" y="43" width="4" height="1.5" fill="#569cd6" fill-opacity="0.7"/><rect x="25" y="43" width="3" height="1.5" fill="#c586c0" fill-opacity="0.7"/><rect x="29" y="43" width="2" height="1.5" fill="#d4d4d4" fill-opacity="0.7"/><rect x="32" y="43" width="6" height="1.5" fill="#6a9955" fill-opacity="0.7"/><rect x="39" y="43" width="7" height="1.5" fill="#d4d4d4" fill-opacity="0.7"/><rect x="47" y="43" width="4" height="1.5" fill="#c586c0" fill-opacity="0.7"/><rect x="52" y="43" width="3" height="1.5" fill="#ce9178" fill-opacity="0.7"/><rect x="56" y="43" width="4" height="1.5" fill="#dcdcaa" fill-opacity="0.7"/><rect x="61" y="43" width="4" height="1.5" fill="#9cdcfe" fill-opacity="0.7"/><rect x="66" y="43" width="2" height="1.5" fill="#569cd6" fill-opacity="0.7"/><rect x="18" y="45" width="7" height="1.5" fill="#c586c0" fill-opacity="0.7"/><rect x="26" y="45" width="5" height="1.5" fill="#d4d4d4" fill-opacity="0.7"/><rect x="32" y="45" width="7" height="1.5" fill="#9cdcfe" fill-opacity="0.7"/><rect x="40" y="45" width="6" height="1.5" fill="#dcdcaa" fill-opacity="0.7"/><rect x="47" y="45" width="1" height="1.5" fill="#6a9955" fill-opacity="0.7"/><rect x="20" y="47" width="3" height="1.5" fill="#6a9955" fill-opacity="0.7"/><rect x="24" y="47" width="7" height="1.5" fill="#dcdcaa" fill-opacity="0.7"/><rect x="32" y="47" width="6" height="1.5" fill="#c586c0" fill-opacity="0.7"/><rect x="39" y="47" width="5" height="1.5" fill="#569cd6" fill-opacity="0.7"/><rect x="45" y="47" width="4" height="1.5" fill="#569cd6" fill-opacity="0.7"/><rect x="50" y="47" width="7" height="1.5" fill="#4fc1ff" fill-opacity="0.7"/><rect x="58" y="47" width="2" height="1.5" fill="#d4d4d4" fill-opacity="0.7"/><rect x="61" y="47" width="7" height="1.5" fill="#569cd6" fill-opacity="0.7"/><rect x="69" y="47" width="6" height="1.5" fill="#d4d4d4" fill-opacity="0.7"/><rect x="76" y="47" width="2" height="1.5" fill="#9cdcfe" fill-opacity="0.7"/><rect x="18" y="49" width="2" height="1.5" fill="#569cd6" fill-opacity="0.7"/><rect x="21" y="49" width="1" height="1.5" fill="#dcdcaa" fill-opacity="0.7"/><rect x="23" y="49" width="7" height="1.5" fill="#569cd6" fill-opacity="0.7"/><rect x="31" y="49" width="7" height="1.5" fill="#569cd6" fill-opacity="0.7"/><rect x="18" y="51" width="1" height="1.5" fill="#4fc1ff" fill-opacity="0.7"/><rect x="20" y="51" width="3" height="1.5" fill="#ce9178" fill-opacity="0.7"/><rect x="24" y="51" width="4" height="1.5" fill="#6a9955" fill-opacity="0.7"/><rect x="29" y="51" width="1" height="1.5" fill="#d4d4d4" fill-opacity="0.7"/><rect x="31" y="51" width="1" height="1.5" fill="#dcdcaa" fill-opacity="0.7"/><rect x="20" y="53" width="4" height="1.5" fill="#dcdcaa" fill-opacity="0.7"/><rect x="25" y="53" width="6" height="1.5" fill="#ce9178" fill-opacity="0.7"/><rect x="32" y="53" width="7" height="1.5" fill="#6a9955" fill-opacity="0.7"/><rect x="40" y="53" width="2" height="1.5" fill="#9cdcfe" fill-opacity="0.7"/><rect x="43" y="53" width="2" height="1.5" fill="#c586c0" fill-opacity="0.7"/><rect x="22" y="55" width="5" height="1.5" fill="#6a9955" fill-opacity="0.7"/><rect x="28" y="55" width="2" height="1.5" fill="#d4d4d4" fill-opacity="0.7"/><rect x="31" y="55" width="3" height="1.5" fill="#d4d4d4" fill-opacity="0.7"/><rect x="35" y="55" width="4" height="1.5" fill="#ce9178" fill-opacity="0.7"/><rect x="40" y="55" width="5" height="1.5" fill="#d4d4d4" fill-opacity="0.7"/><rect x="46" y="55" width="4" height="1.5" fill="#ce9178" fill-opacity="0.7"/><rect x="51" y="55" width="1" height="1.5" fill="#ce9178" fill-opacity="0.7"/><rect x="22" y="57" width="6" height="1.5" fill="#569cd6" fill-opacity="0.7"/><rect x="29" y="57" width="1" height="1.5" fill="#c586c0" fill-opacity="0.7"/><rect x="31" y="57" width="3" height="1.5" fill="#6a9955" fill-opacity="0.7"/><rect x="22" y="59" width="6" height="1.5" fill="#ce9178" fill-opacity="0.7"/><rect x="29" y="59" width="6" height="1.5" fill="#6a9955" fill-opacity="0.7"/><rect x="36" y="59" width="1" height="1.5" fill="#c586c0" fill-opacity="0.7"/><rect x="38" y="59" width="4" height="1.5" fill="#6a9955" fill-opacity="0.7"/><rect x="24" y="61" width="2" height="1.5" fill="#d4d4d4" fill-opacity="0.7"/><rect x="27" y="61" width="5" height="1.5" fill="#ce9178" fill-opacity="0.7"/><rect x="33" y="61" width="4" height="1.5" fill="#9cdcfe" fill-opacity="0.7"/><rect x="38" y="61" width="7" height="1.5" fill="#dcdcaa" fill-opacity="0.7"/><rect x="46" y="61" width="5" height="1.5" fill="#569cd6" fill-opacity="0.7"/><rect x="22" y="63" width="3" height="1.5" fill="#c586c0" fill-opacity="0.7"/><rect x="26" y="63" width="5" height="1.5" fill="#d4d4d4" fill-opacity="0.7"/><rect x="32" y="63" width="3" height="1.5" fill="#c586c0" fill-opacity="0.7"/><rect x="36" y="63" width="2" height="1.5" fill="#ce9178" fill-opacity="0.7"/><rect x="18" y="65" width="3" height="1.5" fill="#dcdcaa" fill-opacity="0.7"/><rect x="22" y="65" width="2" height="1.5" fill="#c586c0" fill-opacity="0.7"/><rect x="25" y="65" width="6" height="1.5" fill="#ce9178" fill-opacity="0.7"/><rect x="32" y="65" width="3" height="1.5" fill="#d4d4d4" fill-opacity="0.7"/><rect x="36" y="65" width="3" height="1.5" fill="#6a9955" fill-opacity="0.7"/><rect x="40" y="65" width="6" height="1.5" fill="#4fc1ff" fill-opacity="0.7"/><rect x="47" y="65" width="4" height="1.5" fill="#c586c0" fill-opacity="0.7"/><rect x="52" y="65" width="1" height="1.5" fill="#ce9178" fill-opacity="0.7"/><rect x="54" y="65" width="2" height="1.5" fill="#ce9178" fill-opacity="0.7"/><rect x="57" y="65" width="2" height="1.5" fill="#569cd6" fill-opacity="0.7"/><rect x="60" y="65" width="2" height="1.5" fill="#dcdcaa" fill-opacity="0.7"/><rect x="63" y="65" width="4" height="1.5" fill="#9cdcfe" fill-opacity="0.7"/><rect x="68" y="65" width="7" height="1.5" fill="#6a9955" fill-opacity="0.7"/><rect x="76" y="65" width="5" height="1.5" fill="#ce9178" fill-opacity="0.7"/><rect x="82" y="65" width="1" height="1.5" fill="#dcdcaa" fill-opacity="0.7"/><rect x="84" y="65" width="1" height="1.5" fill="#569cd6" fill-opacity="0.7"/><rect x="86" y="65" width="1" height="1.5" fill="#c586c0" fill-opacity="0.7"/><rect x="88" y="65" width="4" height="1.5" fill="#ce9178" fill-opacity="0.7"/><rect x="93" y="65" width="3" height="1.5" fill="#c586c0" fill-opacity="0.7"/><rect x="97" y="65" width="5" height="1.5" fill="#569cd6" fill-opacity="0.7"/><rect x="103" y="65" width="6" height="1.5" fill="#dcdcaa" fill-opacity="0.7"/><rect x="110" y="65" width="7" height="1.5" fill="#569cd6" fill-opacity="0.7"/><rect x="118" y="65" width="2" height="1.5" fill="#c586c0" fill-opacity="0.7"/><rect x="16" y="67" width="4" height="1.5" fill="#4fc1ff" fill-opacity="0.7"/><rect x="21" y="67" width="4" height="1.5" fill="#9cdcfe" fill-opacity="0.7"/><rect x="26" y="67" width="6" height="1.5" fill="#c586c0" fill-opacity="0.7"/><rect x="33" y="67" width="5" height="1.5" fill="#4fc1ff" fill-opacity="0.7"/><rect x="14" y="69" width="7" height="1.5" fill="#dcdcaa" fill-opacity="0.7"/><rect x="22" y="69" width="6" height="1.5" fill="#9cdcfe" fill-opacity="0.7"/><rect x="12" y="71" width="3" height="1.5" fill="#4fc1ff" fill-opacity="0.7"/><rect x="16" y="71" width="2" height="1.5" fill="#4fc1ff" fill-opacity="0.7"/><rect x="14" y="73" width="3" height="1.5" fill="#6a9955" fill-opacity="0.7"/><rect x="18" y="73" width="1" height="1.5" fill="#c586c0" fill-opacity="0.7"/><rect x="20" y="73" width="2" height="1.5" fill="#4fc1ff" fill-opacity="0.7"/><rect x="23" y="73" width="7" height="1.5" fill="#d4d4d4" fill-opacity="0.7"/><rect x="31" y="73" width="7" height="1.5" fill="#ce9178" fill-opacity="0.7"/><rect x="39" y="73" width="5" height="1.5" fill="#569cd6" fill-opacity="0.7"/><rect x="45" y="73" width="3" height="1.5" fill="#d4d4d4" fill-opacity="0.7"/><rect x="49" y="73" width="5" height="1.5" fill="#dcdcaa" fill-opacity="0.7"/><rect x="55" y="73" width="3" height="1.5" fill="#569cd6" fill-opacity="0.7"/><rect x="59" y="73" width="5" height="1.5" fill="#dcdcaa" fill-opacity="0.7"/><rect x="65" y="73" width="5" height="1.5" fill="#dcdcaa" fill-opacity="0.7"/><rect x="71" y="73" width="5" height="1.5" fill="#9cdcfe" fill-opacity="0.7"/><rect x="77" y="73" width="6" height="1.5" fill="#dcdcaa" fill-opacity="0.7"/><rect x="84" y="73" width="7" height="1.5" fill="#ce9178" fill-opacity="0.7"/><rect x="92" y="73" width="2" height="1.5" fill="#dcdcaa" fill-opacity="0.7"/><rect x="95" y="73" width="4" height="1.5" fill="#c586c0" fill-opacity="0.7"/><rect x="100" y="73" width="6" height="1.5" fill="#4fc1ff" fill-opacity="0.7"/><rect x="107" y="73" width="2" height="1.5" fill="#ce9178" fill-opacity="0.7"/><rect x="12" y="75" width="7" height="1.5" fill="#4fc1ff" fill-opacity="0.7"/><rect x="20" y="75" width="3" height="1.5" fill="#6a9955" fill-opacity="0.7"/><rect x="24" y="75" width="1" height="1.5" fill="#6a9955" fill-opacity="0.7"/><rect x="26" y="75" width="6" height="1.5" fill="#569cd6" fill-opacity="0.7"/><rect x="10" y="77" width="2" height="1.5" fill="#ce9178" fill-opacity="0.7"/><rect x="13" y="77" width="5" height="1.5" fill="#d4d4d4" fill-opacity="0.7"/><rect x="20" y="79" width="2" height="1.5" fill="#4fc1ff" fill-opacity="0.7"/><rect x="23" y="79" width="5" height="1.5" fill="#569cd6" fill-opacity="0.7"/><rect x="20" y="81" width="1" height="1.5" fill="#9cdcfe" fill-opacity="0.7"/><rect x="22" y="81" width="3" height="1.5" fill="#4fc1ff" fill-opacity="0.7"/><rect x="26" y="81" width="2" height="1.5" fill="#4fc1ff" fill-opacity="0.7"/><rect x="29" y="81" width="7" height="1.5" fill="#569cd6" fill-opacity="0.7"/><rect x="37" y="81" width="2" height="1.5" fill="#ce9178" fill-opacity="0.7"/><rect x="40" y="81" width="4" height="1.5" fill="#9cdcfe" fill-opacity="0.7"/><rect x="20" y="83" width="4" height="1.5" fill="#569cd6" fill-opacity="0.7"/><rect x="25" y="83" width="4" height="1.5" fill="#569cd6" fill-opacity="0.7"/><rect x="20" y="85" width="3" height="1.5" fill="#c586c0" fill-opacity="0.7"/><rect x="24" y="85" width="5" height="1.5" fill="#9cdcfe" fill-opacity="0.7"/><rect x="30" y="85" width="2" height="1.5" fill="#dcdcaa" fill-opacity="0.7"/><rect x="33" y="85" width="4" height="1.5" fill="#6a9955" fill-opacity="0.7"/><rect x="38" y="85" width="1" height="1.5" fill="#569cd6" fill-opacity="0.7"/><rect x="40" y="85" width="5" height="1.5" fill="#c586c0" fill-opacity="0.7"/><rect x="46" y="85" width="1" height="1.5" fill="#c586c0" fill-opacity="0.7"/><rect x="20" y="87" width="2" height="1.5" fill="#4fc1ff" fill-opacity="0.7"/><rect x="23" y="87" width="5" height="1.5" fill="#569cd6" fill-opacity="0.7"/><rect x="29" y="87" width="3" height="1.5" fill="#dcdcaa" fill-opacity="0.7"/><rect x="33" y="87" width="3" height="1.5" fill="#4fc1ff" fill-opacity="0.7"/><rect x="18" y="89" width="1" height="1.5" fill="#9cdcfe" fill-opacity="0.7"/><rect x="20" y="89" width="5" height="1.5" fill="#569cd6" fill-opacity="0.7"/><rect x="16" y="91" width="3" height="1.5" fill="#6a9955" fill-opacity="0.7"/><rect x="16" y="93" width="5" height="1.5" fill="#ce9178" fill-opacity="0.7"/><rect x="22" y="93" width="3" height="1.5" fill="#4fc1ff" fill-opacity="0.7"/><rect x="18" y="95" width="4" height="1.5" fill="#c586c0" fill-opacity="0.7"/><rect x="23" y="95" width="7" height="1.5" fill="#d4d4d4" fill-opacity="0.7"/><rect x="31" y="95" width="1" height="1.5" fill="#6a9955" fill-opacity="0.7"/><rect x="20" y="97" width="7" height="1.5" fill="#c586c0" fill-opacity="0.7"/><rect x="28" y="97" width="7" height="1.5" fill="#c586c0" fill-opacity="0.7"/><rect x="36" y="97" width="1" height="1.5" fill="#ce9178" fill-opacity="0.7"/><rect x="38" y="97" width="5" height="1.5" fill="#4fc1ff" fill-opacity="0.7"/><rect x="44" y="97" width="5" height="1.5" fill="#c586c0" fill-opacity="0.7"/><rect x="50" y="97" width="4" height="1.5" fill="#9cdcfe" fill-opacity="0.7"/><rect x="55" y="97" width="3" height="1.5" fill="#9cdcfe" fill-opacity="0.7"/><rect x="59" y="97" width="3" height="1.5" fill="#c586c0" fill-opacity="0.7"/><rect x="22" y="99" width="6" height="1.5" fill="#c586c0" fill-opacity="0.7"/><rect x="29" y="99" width="5" height="1.5" fill="#4fc1ff" fill-opacity="0.7"/><rect x="35" y="99" width="7" height="1.5" fill="#d4d4d4" fill-opacity="0.7"/><rect x="43" y="99" width="5" height="1.5" fill="#ce9178" fill-opacity="0.7"/><rect x="49" y="99" width="2" height="1.5" fill="#ce9178" fill-opacity="0.7"/><rect x="52" y="99" width="7" height="1.5" fill="#6a9955" fill-opacity="0.7"/><rect x="60" y="99" width="2" height="1.5" fill="#c586c0" fill-opacity="0.7"/><rect x="63" y="99" width="1" height="1.5" fill="#6a9955" fill-opacity="0.7"/><rect x="65" y="99" width="6" height="1.5" fill="#ce9178" fill-opacity="0.7"/><rect x="72" y="99" width="3" height="1.5" fill="#dcdcaa" fill-opacity="0.7"/><rect x="22" y="101" width="5" height="1.5" fill="#d4d4d4" fill-opacity="0.7"/><rect x="28" y="101" width="6" height="1.5" fill="#c586c0" fill-opacity="0.7"/><rect x="35" y="101" width="2" height="1.5" fill="#ce9178" fill-opacity="0.7"/><rect x="38" y="101" width="6" height="1.5" fill="#4fc1ff" fill-opacity="0.7"/><rect x="45" y="101" width="7" height="1.5" fill="#c586c0" fill-opacity="0.7"/><rect x="53" y="101" width="4" height="1.5" fill="#569cd6" fill-opacity="0.7"/><rect x="20" y="103" width="2" height="1.5" fill="#c586c0" fill-opacity="0.7"/><rect x="23" y="103" width="5" height="1.5" fill="#ce9178" fill-opacity="0.7"/><rect x="20" y="105" width="1" height="1.5" fill="#ce9178" fill-opacity="0.7"/><rect x="22" y="105" width="5" height="1.5" fill="#569cd6" fill-opacity="0.7"/><rect x="28" y="105" width="1" height="1.5" fill="#6a9955" fill-opacity="0.7"/><rect x="30" y="105" width="1" height="1.5" fill="#d4d4d4" fill-opacity="0.7"/><rect x="32" y="105" width="2" height="1.5" fill="#d4d4d4" fill-opacity="0.7"/><rect x="35" y="105" width="1" height="1.5" fill="#4fc1ff" fill-opacity="0.7"/><rect x="18" y="107" width="2" height="1.5" fill="#ce9178" fill-opacity="0.7"/><rect x="16" y="109" width="4" height="1.5" fill="#6a9955" fill-opacity="0.7"/><rect x="16" y="111" width="7" height="1.5" fill="#c586c0" fill-opacity="0.7"/><rect x="24" y="111" width="2" height="1.5" fill="#4fc1ff" fill-opacity="0.7"/><rect x="27" y="111" width="6" height="1.5" fill="#dcdcaa" fill-opacity="0.7"/><rect x="34" y="111" width="1" height="1.5" fill="#d4d4d4" fill-opacity="0.7"/><rect x="36" y="111" width="1" height="1.5" fill="#6a9955" fill-opacity="0.7"/><rect x="38" y="111" width="2" height="1.5" fill="#d4d4d4" fill-opacity="0.7"/><rect x="18" y="113" width="3" height="1.5" fill="#6a9955" fill-opacity="0.7"/><rect x="22" y="113" width="2" height="1.5" fill="#6a9955" fill-opacity="0.7"/><rect x="25" y="113" width="2" height="1.5" fill="#dcdcaa" fill-opacity="0.7"/><rect x="28" y="113" width="3" height="1.5" fill="#9cdcfe" fill-opacity="0.7"/><rect x="32" y="113" width="2" height="1.5" fill="#4fc1ff" fill-opacity="0.7"/><rect x="10" y="115" width="7" height="1.5" fill="#4fc1ff" fill-opacity="0.7"/><rect x="18" y="115" width="1" height="1.5" fill="#9cdcfe" fill-opacity="0.7"/><rect x="12" y="117" width="2" height="1.5" fill="#dcdcaa" fill-opacity="0.7"/><rect x="15" y="117" width="4" height="1.5" fill="#dcdcaa" fill-opacity="0.7"/><rect x="14" y="119" width="2" height="1.5" fill="#9cdcfe" fill-opacity="0.7"/><rect x="17" y="119" width="5" height="1.5" fill="#ce9178" fill-opacity="0.7"/><rect x="14" y="121" width="3" height="1.5" fill="#4fc1ff" fill-opacity="0.7"/><rect x="18" y="121" width="3" height="1.5" fill="#c586c0" fill-opacity="0.7"/><rect x="22" y="121" width="4" height="1.5" fill="#569cd6" fill-opacity="0.7"/><rect x="14" y="123" width="3" height="1.5" fill="#6a9955" fill-opacity="0.7"/><rect x="18" y="123" width="4" height="1.5" fill="#ce9178" fill-opacity="0.7"/><rect x="14" y="125" width="2" height="1.5" fill="#dcdcaa" fill-opacity="0.7"/><rect x="17" y="125" width="7" height="1.5" fill="#d4d4d4" fill-opacity="0.7"/><rect x="25" y="125" width="1" height="1.5" fill="#dcdcaa" fill-opacity="0.7"/><rect x="27" y="125" width="3" height="1.5" fill="#569cd6" fill-opacity="0.7"/><rect x="31" y="125" width="2" height="1.5" fill="#dcdcaa" fill-opacity="0.7"/><rect x="14" y="127" width="5" height="1.5" fill="#d4d4d4" fill-opacity="0.7"/><rect x="20" y="127" width="6" height="1.5" fill="#d4d4d4" fill-opacity="0.7"/><rect x="14" y="129" width="3" height="1.5" fill="#ce9178" fill-opacity="0.7"/><rect x="18" y="129" width="5" height="1.5" fill="#dcdcaa" fill-opacity="0.7"/><rect x="24" y="129" width="3" height="1.5" fill="#569cd6" fill-opacity="0.7"/><rect x="28" y="129" width="5" height="1.5" fill="#dcdcaa" fill-opacity="0.7"/><rect x="14" y="131" width="3" height="1.5" fill="#569cd6" fill-opacity="0.7"/><rect x="18" y="131" width="6" height="1.5" fill="#ce9178" fill-opacity="0.7"/><rect x="14" y="133" width="4" height="1.5" fill="#ce9178" fill-opacity="0.7"/><rect x="19" y="133" width="4" height="1.5" fill="#ce9178" fill-opacity="0.7"/><rect x="24" y="133" width="5" height="1.5" fill="#9cdcfe" fill-opacity="0.7"/><rect x="30" y="133" width="1" height="1.5" fill="#d4d4d4" fill-opacity="0.7"/><rect x="32" y="133" width="4" height="1.5" fill="#d4d4d4" fill-opacity="0.7"/><rect x="14" y="135" width="4" height="1.5" fill="#ce9178" fill-opacity="0.7"/><rect x="19" y="135" width="2" height="1.5" fill="#d4d4d4" fill-opacity="0.7"/><rect x="22" y="135" width="6" height="1.5" fill="#dcdcaa" fill-opacity="0.7"/><rect x="14" y="137" width="2" height="1.5" fill="#569cd6" fill-opacity="0.7"/><rect x="17" y="137" width="3" height="1.5" fill="#9cdcfe" fill-opacity="0.7"/><rect x="21" y="137" width="2" height="1.5" fill="#569cd6" fill-opacity="0.7"/><rect x="24" y="137" width="1" height="1.5" fill="#6a9955" fill-opacity="0.7"/><rect x="26" y="137" width="4" height="1.5" fill="#c586c0" fill-opacity="0.7"/><rect x="14" y="139" width="1" height="1.5" fill="#6a9955" fill-opacity="0.7"/><rect x="16" y="139" width="1" height="1.5" fill="#569cd6" fill-opacity="0.7"/><rect x="18" y="139" width="1" height="1.5" fill="#4fc1ff" fill-opacity="0.7"/><rect x="20" y="139" width="3" height="1.5" fill="#6a9955" fill-opacity="0.7"/><rect x="24" y="139" width="7" height="1.5" fill="#9cdcfe" fill-opacity="0.7"/><rect x="32" y="139" width="5" height="1.5" fill="#d4d4d4" fill-opacity="0.7"/><rect x="38" y="139" width="1" height="1.5" fill="#569cd6" fill-opacity="0.7"/><rect x="14" y="141" width="5" height="1.5" fill="#569cd6" fill-opacity="0.7"/><rect x="20" y="141" width="1" height="1.5" fill="#c586c0" fill-opacity="0.7"/><rect x="22" y="141" width="2" height="1.5" fill="#6a9955" fill-opacity="0.7"/><rect x="25" y="141" width="2" height="1.5" fill="#d4d4d4" fill-opacity="0.7"/><rect x="14" y="143" width="7" height="1.5" fill="#dcdcaa" fill-opacity="0.7"/><rect x="22" y="143" width="3" height="1.5" fill="#6a9955" fill-opacity="0.7"/><rect x="26" y="143" width="2" height="1.5" fill="#dcdcaa" fill-opacity="0.7"/><rect x="14" y="145" width="6" height="1.5" fill="#6a9955" fill-opacity="0.7"/><rect x="14" y="147" width="3" height="1.5" fill="#9cdcfe" fill-opacity="0.7"/><rect x="18" y="147" width="2" height="1.5" fill="#9cdcfe" fill-opacity="0.7"/><rect x="21" y="147" width="5" height="1.5" fill="#6a9955" fill-opacity="0.7"/><rect x="27" y="147" width="4" height="1.5" fill="#569cd6" fill-opacity="0.7"/><rect x="14" y="149" width="3" height="1.5" fill="#569cd6" fill-opacity="0.7"/><rect x="18" y="149" width="2" height="1.5" fill="#9cdcfe" fill-opacity="0.7"/><rect x="14" y="151" width="5" height="1.5" fill="#6a9955" fill-opacity="0.7"/><rect x="20" y="151" width="5" height="1.5" fill="#c586c0" fill-opacity="0.7"/><rect x="14" y="153" width="5" height="1.5" fill="#6a9955" fill-opacity="0.7"/><rect x="20" y="153" width="5" height="1.5" fill="#d4d4d4" fill-opacity="0.7"/><rect x="14" y="155" width="7" height="1.5" fill="#9cdcfe" fill-opacity="0.7"/><rect x="22" y="155" width="1" height="1.5" fill="#ce9178" fill-opacity="0.7"/><rect x="24" y="155" width="1" height="1.5" fill="#dcdcaa" fill-opacity="0.7"/><rect x="14" y="157" width="5" height="1.5" fill="#569cd6" fill-opacity="0.7"/><rect x="20" y="157" width="1" height="1.5" fill="#d4d4d4" fill-opacity="0.7"/><rect x="12" y="159" width="4" height="1.5" fill="#9cdcfe" fill-opacity="0.7"/><rect x="17" y="159" width="2" height="1.5" fill="#4fc1ff" fill-opacity="0.7"/><rect x="10" y="161" width="3" height="1.5" fill="#d4d4d4" fill-opacity="0.7"/><rect x="10" y="163" width="7" height="1.5" fill="#6a9955" fill-opacity="0.7"/><rect x="18" y="163" width="1" height="1.5" fill="#569cd6" fill-opacity="0.7"/><rect x="20" y="163" width="4" height="1.5" fill="#d4d4d4" fill-opacity="0.7"/><rect x="12" y="165" width="2" height="1.5" fill="#569cd6" fill-opacity="0.7"/><rect x="15" y="165" width="4" height="1.5" fill="#6a9955" fill-opacity="0.7"/><rect x="20" y="165" width="1" height="1.5" fill="#4fc1ff" fill-opacity="0.7"/><rect x="22" y="165" width="2" height="1.5" fill="#6a9955" fill-opacity="0.7"/><rect x="14" y="167" width="3" height="1.5" fill="#dcdcaa" fill-opacity="0.7"/><rect x="18" y="167" width="6" height="1.5" fill="#9cdcfe" fill-opacity="0.7"/><rect x="25" y="167" width="2" height="1.5" fill="#6a9955" fill-opacity="0.7"/><rect x="28" y="167" width="7" height="1.5" fill="#569cd6" fill-opacity="0.7"/><rect x="36" y="167" width="2" height="1.5" fill="#6a9955" fill-opacity="0.7"/><rect x="39" y="167" width="5" height="1.5" fill="#9cdcfe" fill-opacity="0.7"/><rect x="45" y="167" width="1" height="1.5" fill="#dcdcaa" fill-opacity="0.7"/><rect x="47" y="167" width="3" height="1.5" fill="#569cd6" fill-opacity="0.7"/><rect x="16" y="169" width="1" height="1.5" fill="#c586c0" fill-opacity="0.7"/><rect x="18" y="169" width="5" height="1.5" fill="#d4d4d4" fill-opacity="0.7"/><rect x="24" y="169" width="4" height="1.5" fill="#c586c0" fill-opacity="0.7"/><rect x="29" y="169" width="1" height="1.5" fill="#9cdcfe" fill-opacity="0.7"/><rect x="31" y="169" width="6" height="1.5" fill="#dcdcaa" fill-opacity="0.7"/><rect x="38" y="169" width="3" height="1.5" fill="#d4d4d4" fill-opacity="0.7"/><rect x="42" y="169" width="1" height="1.5" fill="#dcdcaa" fill-opacity="0.7"/><rect x="44" y="169" width="4" height="1.5" fill="#6a9955" fill-opacity="0.7"/><rect x="49" y="169" width="1" height="1.5" fill="#dcdcaa" fill-opacity="0.7"/><rect x="51" y="169" width="3" height="1.5" fill="#d4d4d4" fill-opacity="0.7"/><rect x="55" y="169" width="3" height="1.5" fill="#dcdcaa" fill-opacity="0.7"/><rect x="59" y="169" width="1" height="1.5" fill="#569cd6" fill-opacity="0.7"/><rect x="61" y="169" width="1" height="1.5" fill="#9cdcfe" fill-opacity="0.7"/><rect x="16" y="171" width="6" height="1.5" fill="#4fc1ff" fill-opacity="0.7"/><rect x="23" y="171" width="5" height="1.5" fill="#569cd6" fill-opacity="0.7"/><rect x="29" y="171" width="4" height="1.5" fill="#c586c0" fill-opacity="0.7"/><rect x="34" y="171" width="7" height="1.5" fill="#dcdcaa" fill-opacity="0.7"/><rect x="42" y="171" width="2" height="1.5" fill="#c586c0" fill-opacity="0.7"/><rect x="14" y="173" width="7" height="1.5" fill="#9cdcfe" fill-opacity="0.7"/><rect x="14" y="175" width="2" height="1.5" fill="#c586c0" fill-opacity="0.7"/><rect x="17" y="175" width="3" height="1.5" fill="#dcdcaa" fill-opacity="0.7"/><rect x="21" y="175" width="2" height="1.5" fill="#569cd6" fill-opacity="0.7"/><rect x="24" y="175" width="2" height="1.5" fill="#dcdcaa" fill-opacity="0.7"/><rect x="18" y="177" width="4" height="1.5" fill="#dcdcaa" fill-opacity="0.7"/><rect x="23" y="177" width="5" height="1.5" fill="#6a9955" fill-opacity="0.7"/><rect x="18" y="179" width="6" height="1.5" fill="#d4d4d4" fill-opacity="0.7"/><rect x="18" y="181" width="4" height="1.5" fill="#6a9955" fill-opacity="0.7"/><rect x="23" y="181" width="4" height="1.5" fill="#569cd6" fill-opacity="0.7"/><rect x="28" y="181" width="5" height="1.5" fill="#6a9955" fill-opacity="0.7"/><rect x="18" y="183" width="2" height="1.5" fill="#c586c0" fill-opacity="0.7"/><rect x="21" y="183" width="4" height="1.5" fill="#ce9178" fill-opacity="0.7"/><rect x="26" y="183" width="1" height="1.5" fill="#d4d4d4" fill-opacity="0.7"/><rect x="28" y="183" width="3" height="1.5" fill="#d4d4d4" fill-opacity="0.7"/><rect x="32" y="183" width="1" height="1.5" fill="#9cdcfe" fill-opacity="0.7"/><rect x="18" y="185" width="5" height="1.5" fill="#569cd6" fill-opacity="0.7"/><rect x="24" y="185" width="5" height="1.5" fill="#d4d4d4" fill-opacity="0.7"/><rect x="18" y="187" width="5" height="1.5" fill="#c586c0" fill-opacity="0.7"/><rect x="24" y="187" width="5" height="1.5" fill="#dcdcaa" fill-opacity="0.7"/><rect x="30" y="187" width="3" height="1.5" fill="#ce9178" fill-opacity="0.7"/><rect x="34" y="187" width="1" height="1.5" fill="#9cdcfe" fill-opacity="0.7"/><rect x="18" y="189" width="2" height="1.5" fill="#4fc1ff" fill-opacity="0.7"/><rect x="21" y="189" width="2" height="1.5" fill="#dcdcaa" fill-opacity="0.7"/><rect x="24" y="189" width="4" height="1.5" fill="#ce9178" fill-opacity="0.7"/><rect x="18" y="191" width="1" height="1.5" fill="#4fc1ff" fill-opacity="0.7"/><rect x="20" y="191" width="7" height="1.5" fill="#c586c0" fill-opacity="0.7"/><rect x="28" y="191" width="4" height="1.5" fill="#ce9178" fill-opacity="0.7"/><rect x="33" y="191" width="1" height="1.5" fill="#c586c0" fill-opacity="0.7"/><rect x="16" y="193" width="3" height="1.5" fill="#d4d4d4" fill-opacity="0.7"/><rect x="20" y="193" width="2" height="1.5" fill="#9cdcfe" fill-opacity="0.7"/><rect x="16" y="195" width="3" height="1.5" fill="#c586c0" fill-opacity="0.7"/><rect x="20" y="195" width="5" height="1.5" fill="#dcdcaa" fill-opacity="0.7"/><rect x="26" y="195" width="1" height="1.5" fill="#9cdcfe" fill-opacity="0.7"/><rect x="16" y="197" width="2" height="1.5" fill="#569cd6" fill-opacity="0.7"/><rect x="19" y="197" width="5" height="1.5" fill="#569cd6" fill-opacity="0.7"/><rect x="25" y="197" width="1" height="1.5" fill="#dcdcaa" fill-opacity="0.7"/><rect x="27" y="197" width="2" height="1.5" fill="#c586c0" fill-opacity="0.7"/><rect x="16" y="199" width="4" height="1.5" fill="#6a9955" fill-opacity="0.7"/><rect x="21" y="199" width="5" height="1.5" fill="#569cd6" fill-opacity="0.7"/><rect x="16" y="201" width="5" height="1.5" fill="#d4d4d4" fill-opacity="0.7"/><rect x="22" y="201" width="3" height="1.5" fill="#6a9955" fill-opacity="0.7"/><rect x="26" y="201" width="6" height="1.5" fill="#c586c0" fill-opacity="0.7"/><rect x="16" y="203" width="2" height="1.5" fill="#dcdcaa" fill-opacity="0.7"/><rect x="19" y="203" width="7" height="1.5" fill="#d4d4d4" fill-opacity="0.7"/><rect x="27" y="203" width="1" height="1.5" fill="#6a9955" fill-opacity="0.7"/><rect x="16" y="205" width="4" height="1.5" fill="#569cd6" fill-opacity="0.7"/><rect x="21" y="205" width="4" height="1.5" fill="#4fc1ff" fill-opacity="0.7"/><rect x="26" y="205" width="2" height="1.5" fill="#ce9178" fill-opacity="0.7"/><rect x="29" y="205" width="2" height="1.5" fill="#4fc1ff" fill-opacity="0.7"/><rect x="14" y="207" width="3" height="1.5" fill="#dcdcaa" fill-opacity="0.7"/><rect x="12" y="209" width="2" height="1.5" fill="#9cdcfe" fill-opacity="0.7"/><rect x="12" y="211" width="7" height="1.5" fill="#9cdcfe" fill-opacity="0.7"/><rect x="20" y="211" width="6" height="1.5" fill="#6a9955" fill-opacity="0.7"/><rect x="14" y="213" width="5" height="1.5" fill="#9cdcfe" fill-opacity="0.7"/><rect x="20" y="213" width="7" height="1.5" fill="#d4d4d4" fill-opacity="0.7"/><rect x="28" y="213" width="6" height="1.5" fill="#ce9178" fill-opacity="0.7"/><rect x="35" y="213" width="7" height="1.5" fill="#dcdcaa" fill-opacity="0.7"/><rect x="43" y="213" width="1" height="1.5" fill="#4fc1ff" fill-opacity="0.7"/><rect x="16" y="215" width="6" height="1.5" fill="#ce9178" fill-opacity="0.7"/><rect x="23" y="215" width="7" height="1.5" fill="#4fc1ff" fill-opacity="0.7"/><rect x="31" y="215" width="2" height="1.5" fill="#d4d4d4" fill-opacity="0.7"/><rect x="34" y="215" width="1" height="1.5" fill="#c586c0" fill-opacity="0.7"/><rect x="36" y="215" width="1" height="1.5" fill="#c586c0" fill-opacity="0.7"/><rect x="38" y="215" width="4" height="1.5" fill="#9cdcfe" fill-opacity="0.7"/><rect x="43" y="215" width="4" height="1.5" fill="#c586c0" fill-opacity="0.7"/><rect x="48" y="215" width="1" height="1.5" fill="#d4d4d4" fill-opacity="0.7"/><rect x="18" y="217" width="4" height="1.5" fill="#d4d4d4" fill-opacity="0.7"/><rect x="23" y="217" width="2" height="1.5" fill="#569cd6" fill-opacity="0.7"/><rect x="26" y="217" width="4" height="1.5" fill="#dcdcaa" fill-opacity="0.7"/><rect x="31" y="217" width="4" height="1.5" fill="#569cd6" fill-opacity="0.7"/><rect x="36" y="217" width="3" height="1.5" fill="#dcdcaa" fill-opacity="0.7"/><rect x="40" y="217" width="5" height="1.5" fill="#ce9178" fill-opacity="0.7"/><rect x="46" y="217" width="6" height="1.5" fill="#4fc1ff" fill-opacity="0.7"/><rect x="53" y="217" width="4" height="1.5" fill="#569cd6" fill-opacity="0.7"/><rect x="58" y="217" width="4" height="1.5" fill="#d4d4d4" fill-opacity="0.7"/><rect x="63" y="217" width="6" height="1.5" fill="#d4d4d4" fill-opacity="0.7"/><rect x="70" y="217" width="1" height="1.5" fill="#9cdcfe" fill-opacity="0.7"/><rect x="18" y="219" width="4" height="1.5" fill="#ce9178" fill-opacity="0.7"/><rect x="23" y="219" width="3" height="1.5" fill="#ce9178" fill-opacity="0.7"/><rect x="27" y="219" width="4" height="1.5" fill="#d4d4d4" fill-opacity="0.7"/><rect x="32" y="219" width="1" height="1.5" fill="#c586c0" fill-opacity="0.7"/><rect x="34" y="219" width="4" height="1.5" fill="#d4d4d4" fill-opacity="0.7"/><rect x="16" y="221" width="4" height="1.5" fill="#4fc1ff" fill-opacity="0.7"/><rect x="21" y="221" width="2" height="1.5" fill="#ce9178" fill-opacity="0.7"/><rect x="16" y="223" width="1" height="1.5" fill="#9cdcfe" fill-opacity="0.7"/><rect x="18" y="223" width="3" height="1.5" fill="#4fc1ff" fill-opacity="0.7"/><rect x="22" y="223" width="3" height="1.5" fill="#d4d4d4" fill-opacity="0.7"/><rect x="26" y="223" width="3" height="1.5" fill="#569cd6" fill-opacity="0.7"/><rect x="30" y="223" width="6" height="1.5" fill="#6a9955" fill-opacity="0.7"/><rect x="37" y="223" width="4" height="1.5" fill="#4fc1ff" fill-opacity="0.7"/><rect x="14" y="225" width="3" height="1.5" fill="#9cdcfe" fill-opacity="0.7"/><rect x="12" y="227" width="3" height="1.5" fill="#dcdcaa" fill-opacity="0.7"/><rect x="12" y="229" width="7" height="1.5" fill="#ce9178" fill-opacity="0.7"/><rect x="20" y="229" width="6" height="1.5" fill="#9cdcfe" fill-opacity="0.7"/><rect x="27" y="229" width="5" height="1.5" fill="#c586c0" fill-opacity="0.7"/><rect x="33" y="229" width="5" height="1.5" fill="#c586c0" fill-opacity="0.7"/><rect x="39" y="229" width="1" height="1.5" fill="#d4d4d4" fill-opacity="0.7"/><rect x="41" y="229" width="1" height="1.5" fill="#6a9955" fill-opacity="0.7"/><rect x="14" y="231" width="4" height="1.5" fill="#c586c0" fill-opacity="0.7"/><rect x="19" y="231" width="4" height="1.5" fill="#9cdcfe" fill-opacity="0.7"/><rect x="14" y="233" width="7" height="1.5" fill="#569cd6" fill-opacity="0.7"/><rect x="22" y="233" width="4" height="1.5" fill="#d4d4d4" fill-opacity="0.7"/><rect x="12" y="235" width="3" height="1.5" fill="#6a9955" fill-opacity="0.7"/><rect x="16" y="235" width="1" height="1.5" fill="#6a9955" fill-opacity="0.7"/><rect x="18" y="237" width="1" height="1.5" fill="#569cd6" fill-opacity="0.7"/><rect x="20" y="237" width="3" height="1.5" fill="#dcdcaa" fill-opacity="0.7"/><rect x="18" y="239" width="3" height="1.5" fill="#dcdcaa" fill-opacity="0.7"/><rect x="22" y="239" width="3" height="1.5" fill="#dcdcaa" fill-opacity="0.7"/><rect x="18" y="241" width="2" height="1.5" fill="#9cdcfe" fill-opacity="0.7"/><rect x="21" y="241" width="5" height="1.5" fill="#c586c0" fill-opacity="0.7"/><rect x="27" y="241" width="1" height="1.5" fill="#dcdcaa" fill-opacity="0.7"/><rect x="29" y="241" width="2" height="1.5" fill="#6a9955" fill-opacity="0.7"/><rect x="18" y="243" width="7" height="1.5" fill="#ce9178" fill-opacity="0.7"/><rect x="26" y="243" width="4" height="1.5" fill="#4fc1ff" fill-opacity="0.7"/><rect x="18" y="245" width="3" height="1.5" fill="#4fc1ff" fill-opacity="0.7"/><rect x="22" y="245" width="1" height="1.5" fill="#9cdcfe" fill-opacity="0.7"/><rect x="24" y="245" width="3" height="1.5" fill="#dcdcaa" fill-opacity="0.7"/><rect x="28" y="245" width="1" height="1.5" fill="#c586c0" fill-opacity="0.7"/><rect x="18" y="247" width="6" height="1.5" fill="#569cd6" fill-opacity="0.7"/><rect x="25" y="247" width="2" height="1.5" fill="#569cd6" fill-opacity="0.7"/><rect x="28" y="247" width="2" height="1.5" fill="#4fc1ff" fill-opacity="0.7"/><rect x="31" y="247" width="3" height="1.5" fill="#6a9955" fill-opacity="0.7"/><rect x="18" y="249" width="7" height="1.5" fill="#d4d4d4" fill-opacity="0.7"/><rect x="26" y="249" width="3" height="1.5" fill="#c586c0" fill-opacity="0.7"/><rect x="30" y="249" width="1" height="1.5" fill="#4fc1ff" fill-opacity="0.7"/><rect x="18" y="251" width="6" height="1.5" fill="#6a9955" fill-opacity="0.7"/><rect x="25" y="251" width="2" height="1.5" fill="#dcdcaa" fill-opacity="0.7"/><rect x="28" y="251" width="3" height="1.5" fill="#4fc1ff" fill-opacity="0.7"/><rect x="32" y="251" width="6" height="1.5" fill="#569cd6" fill-opacity="0.7"/><rect x="39" y="251" width="5" height="1.5" fill="#569cd6" fill-opacity="0.7"/><rect x="45" y="251" width="1" height="1.5" fill="#ce9178" fill-opacity="0.7"/><rect x="47" y="251" width="2" height="1.5" fill="#ce9178" fill-opacity="0.7"/><rect x="18" y="253" width="6" height="1.5" fill="#d4d4d4" fill-opacity="0.7"/><rect x="25" y="253" width="1" height="1.5" fill="#6a9955" fill-opacity="0.7"/><rect x="27" y="253" width="5" height="1.5" fill="#6a9955" fill-opacity="0.7"/><rect x="33" y="253" width="1" height="1.5" fill="#569cd6" fill-opacity="0.7"/><rect x="16" y="255" width="5" height="1.5" fill="#c586c0" fill-opacity="0.7"/><rect x="14" y="257" width="5" height="1.5" fill="#6a9955" fill-opacity="0.7"/><rect x="14" y="259" width="1" height="1.5" fill="#4fc1ff" fill-opacity="0.7"/><rect x="16" y="259" width="3" height="1.5" fill="#c586c0" fill-opacity="0.7"/><rect x="20" y="259" width="1" height="1.5" fill="#c586c0" fill-opacity="0.7"/><rect x="16" y="261" width="3" height="1.5" fill="#d4d4d4" fill-opacity="0.7"/><rect x="20" y="261" width="3" height="1.5" fill="#4fc1ff" fill-opacity="0.7"/><rect x="24" y="261" width="2" height="1.5" fill="#4fc1ff" fill-opacity="0.7"/><rect x="27" y="261" width="3" height="1.5" fill="#dcdcaa" fill-opacity="0.7"/><rect x="18" y="263" width="7" height="1.5" fill="#569cd6" fill-opacity="0.7"/><rect x="26" y="263" width="5" height="1.5" fill="#c586c0" fill-opacity="0.7"/><rect x="32" y="263" width="6" height="1.5" fill="#569cd6" fill-opacity="0.7"/><rect x="39" y="263" width="5" height="1.5" fill="#d4d4d4" fill-opacity="0.7"/><rect x="45" y="263" width="7" height="1.5" fill="#569cd6" fill-opacity="0.7"/><rect x="53" y="263" width="2" height="1.5" fill="#dcdcaa" fill-opacity="0.7"/><rect x="56" y="263" width="4" height="1.5" fill="#d4d4d4" fill-opacity="0.7"/><rect x="61" y="263" width="2" height="1.5" fill="#569cd6" fill-opacity="0.7"/><rect x="64" y="263" width="1" height="1.5" fill="#6a9955" fill-opacity="0.7"/><rect x="66" y="263" width="5" height="1.5" fill="#569cd6" fill-opacity="0.7"/><rect x="72" y="263" width="3" height="1.5" fill="#d4d4d4" fill-opacity="0.7"/><rect x="76" y="263" width="1" height="1.5" fill="#d4d4d4" fill-opacity="0.7"/><rect x="20" y="265" width="6" height="1.5" fill="#c586c0" fill-opacity="0.7"/><rect x="27" y="265" width="4" height="1.5" fill="#569cd6" fill-opacity="0.7"/><rect x="32" y="265" width="1" height="1.5" fill="#569cd6" fill-opacity="0.7"/><rect x="34" y="265" width="6" height="1.5" fill="#ce9178" fill-opacity="0.7"/><rect x="41" y="265" width="7" height="1.5" fill="#9cdcfe" fill-opacity="0.7"/><rect x="49" y="265" width="2" height="1.5" fill="#d4d4d4" fill-opacity="0.7"/><rect x="52" y="265" width="3" height="1.5" fill="#ce9178" fill-opacity="0.7"/><rect x="56" y="265" width="4" height="1.5" fill="#4fc1ff" fill-opacity="0.7"/><rect x="61" y="265" width="1" height="1.5" fill="#6a9955" fill-opacity="0.7"/><rect x="63" y="265" width="2" height="1.5" fill="#4fc1ff" fill-opacity="0.7"/><rect x="66" y="265" width="1" height="1.5" fill="#d4d4d4" fill-opacity="0.7"/><rect x="68" y="265" width="2" height="1.5" fill="#d4d4d4" fill-opacity="0.7"/><rect x="20" y="267" width="2" height="1.5" fill="#c586c0" fill-opacity="0.7"/><rect x="23" y="267" width="6" height="1.5" fill="#c586c0" fill-opacity="0.7"/><rect x="30" y="267" width="7" height="1.5" fill="#569cd6" fill-opacity="0.7"/><rect x="38" y="267" width="5" height="1.5" fill="#c586c0" fill-opacity="0.7"/><rect x="18" y="269" width="5" height="1.5" fill="#dcdcaa" fill-opacity="0.7"/><rect x="18" y="271" width="5" height="1.5" fill="#d4d4d4" fill-opacity="0.7"/><rect x="24" y="271" width="7" height="1.5" fill="#569cd6" fill-opacity="0.7"/><rect x="32" y="271" width="4" height="1.5" fill="#569cd6" fill-opacity="0.7"/><rect x="37" y="271" width="4" height="1.5" fill="#ce9178" fill-opacity="0.7"/><rect x="16" y="273" width="5" height="1.5" fill="#d4d4d4" fill-opacity="0.7"/><rect x="14" y="275" width="3" height="1.5" fill="#c586c0" fill-opacity="0.7"/><rect x="20" y="277" width="1" height="1.5" fill="#569cd6" fill-opacity="0.7"/><rect x="22" y="277" width="3" height="1.5" fill="#9cdcfe" fill-opacity="0.7"/><rect x="26" y="277" width="3" height="1.5" fill="#569cd6" fill-opacity="0.7"/><rect x="30" y="277" width="3" height="1.5" fill="#c586c0" fill-opacity="0.7"/><rect x="34" y="277" width="1" height="1.5" fill="#4fc1ff" fill-opacity="0.7"/><rect x="20" y="279" width="2" height="1.5" fill="#ce9178" fill-opacity="0.7"/><rect x="23" y="279" width="3" height="1.5" fill="#dcdcaa" fill-opacity="0.7"/><rect x="20" y="281" width="3" height="1.5" fill="#d4d4d4" fill-opacity="0.7"/><rect x="24" y="281" width="5" height="1.5" fill="#9cdcfe" fill-opacity="0.7"/><rect x="20" y="283" width="2" height="1.5" fill="#ce9178" fill-opacity="0.7"/><rect x="23" y="283" width="1" height="1.5" fill="#d4d4d4" fill-opacity="0.7"/><rect x="25" y="283" width="6" height="1.5" fill="#ce9178" fill-opacity="0.7"/><rect x="32" y="283" width="1" height="1.5" fill="#569cd6" fill-opacity="0.7"/><rect x="34" y="283" width="3" height="1.5" fill="#6a9955" fill-opacity="0.7"/><rect x="38" y="283" width="2" height="1.5" fill="#dcdcaa" fill-opacity="0.7"/><rect x="20" y="285" width="7" height="1.5" fill="#c586c0" fill-opacity="0.7"/><rect x="28" y="285" width="4" height="1.5" fill="#9cdcfe" fill-opacity="0.7"/><rect x="33" y="285" width="2" height="1.5" fill="#4fc1ff" fill-opacity="0.7"/><rect x="20" y="287" width="7" height="1.5" fill="#c586c0" fill-opacity="0.7"/><rect x="28" y="287" width="5" height="1.5" fill="#9cdcfe" fill-opacity="0.7"/><rect x="34" y="287" width="2" height="1.5" fill="#d4d4d4" fill-opacity="0.7"/><rect x="37" y="287" width="3" height="1.5" fill="#dcdcaa" fill-opacity="0.7"/><rect x="18" y="289" width="3" height="1.5" fill="#dcdcaa" fill-opacity="0.7"/><rect x="20" y="291" width="6" height="1.5" fill="#6a9955" fill-opacity="0.7"/><rect x="20" y="293" width="5" height="1.5" fill="#9cdcfe" fill-opacity="0.7"/><rect x="26" y="293" width="2" height="1.5" fill="#9cdcfe" fill-opacity="0.7"/><rect x="29" y="293" width="2" height="1.5" fill="#ce9178" fill-opacity="0.7"/><rect x="32" y="293" width="6" height="1.5" fill="#ce9178" fill-opacity="0.7"/><rect x="20" y="295" width="3" height="1.5" fill="#4fc1ff" fill-opacity="0.7"/><rect x="24" y="295" width="1" height="1.5" fill="#d4d4d4" fill-opacity="0.7"/><rect x="20" y="297" width="1" height="1.5" fill="#6a9955" fill-opacity="0.7"/><rect x="22" y="297" width="1" height="1.5" fill="#dcdcaa" fill-opacity="0.7"/><rect x="24" y="297" width="1" height="1.5" fill="#4fc1ff" fill-opacity="0.7"/><rect x="26" y="297" width="1" height="1.5" fill="#d4d4d4" fill-opacity="0.7"/><rect x="28" y="297" width="4" height="1.5" fill="#dcdcaa" fill-opacity="0.7"/><rect x="20" y="299" width="7" height="1.5" fill="#6a9955" fill-opacity="0.7"/><rect x="28" y="299" width="3" height="1.5" fill="#d4d4d4" fill-opacity="0.7"/><rect x="20" y="301" width="7" height="1.5" fill="#ce9178" fill-opacity="0.7"/><rect x="28" y="301" width="4" height="1.5" fill="#c586c0" fill-opacity="0.7"/><rect x="33" y="301" width="7" height="1.5" fill="#c586c0" fill-opacity="0.7"/><rect x="41" y="301" width="3" height="1.5" fill="#9cdcfe" fill-opacity="0.7"/><rect x="20" y="303" width="1" height="1.5" fill="#569cd6" fill-opacity="0.7"/><rect x="22" y="303" width="2" height="1.5" fill="#4fc1ff" fill-opacity="0.7"/><rect x="25" y="303" width="4" height="1.5" fill="#4fc1ff" fill-opacity="0.7"/><rect x="30" y="303" width="5" height="1.5" fill="#d4d4d4" fill-opacity="0.7"/><rect x="20" y="305" width="7" height="1.5" fill="#4fc1ff" fill-opacity="0.7"/><rect x="28" y="305" width="6" height="1.5" fill="#6a9955" fill-opacity="0.7"/><rect x="35" y="305" width="1" height="1.5" fill="#d4d4d4" fill-opacity="0.7"/><rect x="20" y="307" width="3" height="1.5" fill="#ce9178" fill-opacity="0.7"/><rect x="24" y="307" width="6" height="1.5" fill="#4fc1ff" fill-opacity="0.7"/><rect x="31" y="307" width="5" height="1.5" fill="#ce9178" fill-opacity="0.7"/><rect x="37" y="307" width="3" height="1.5" fill="#4fc1ff" fill-opacity="0.7"/><rect x="41" y="307" width="2" height="1.5" fill="#569cd6" fill-opacity="0.7"/><rect x="18" y="309" width="2" height="1.5" fill="#9cdcfe" fill-opacity="0.7"/><rect x="21" y="309" width="1" height="1.5" fill="#569cd6" fill-opacity="0.7"/><rect x="16" y="311" width="3" height="1.5" fill="#d4d4d4" fill-opacity="0.7"/><rect x="16" y="313" width="6" height="1.5" fill="#dcdcaa" fill-opacity="0.7"/><rect x="18" y="315" width="2" height="1.5" fill="#4fc1ff" fill-opacity="0.7"/><rect x="21" y="315" width="1" height="1.5" fill="#569cd6" fill-opacity="0.7"/><rect x="23" y="315" width="2" height="1.5" fill="#4fc1ff" fill-opacity="0.7"/><rect x="26" y="315" width="3" height="1.5" fill="#569cd6" fill-opacity="0.7"/><rect x="30" y="315" width="4" height="1.5" fill="#9cdcfe" fill-opacity="0.7"/><rect x="35" y="315" width="1" height="1.5" fill="#c586c0" fill-opacity="0.7"/><rect x="37" y="315" width="2" height="1.5" fill="#9cdcfe" fill-opacity="0.7"/><rect x="20" y="317" width="4" height="1.5" fill="#ce9178" fill-opacity="0.7"/><rect x="25" y="317" width="3" height="1.5" fill="#dcdcaa" fill-opacity="0.7"/><rect x="29" y="317" width="1" height="1.5" fill="#569cd6" fill-opacity="0.7"/><rect x="31" y="317" width="3" height="1.5" fill="#ce9178" fill-opacity="0.7"/><rect x="35" y="317" width="7" height="1.5" fill="#ce9178" fill-opacity="0.7"/><rect x="22" y="319" width="5" height="1.5" fill="#4fc1ff" fill-opacity="0.7"/><rect x="28" y="319" width="4" height="1.5" fill="#6a9955" fill-opacity="0.7"/><rect x="33" y="319" width="2" height="1.5" fill="#6a9955" fill-opacity="0.7"/><rect x="36" y="319" width="4" height="1.5" fill="#569cd6" fill-opacity="0.7"/><rect x="41" y="319" width="5" height="1.5" fill="#d4d4d4" fill-opacity="0.7"/><rect x="22" y="321" width="1" height="1.5" fill="#c586c0" fill-opacity="0.7"/><rect x="24" y="321" width="3" height="1.5" fill="#569cd6" fill-opacity="0.7"/><rect x="28" y="321" width="7" height="1.5" fill="#4fc1ff" fill-opacity="0.7"/><rect x="36" y="321" width="5" height="1.5" fill="#9cdcfe" fill-opacity="0.7"/><rect x="42" y="321" width="2" height="1.5" fill="#c586c0" fill-opacity="0.7"/><rect x="45" y="321" width="4" height="1.5" fill="#9cdcfe" fill-opacity="0.7"/><rect x="20" y="323" width="2" height="1.5" fill="#4fc1ff" fill-opacity="0.7"/><rect x="23" y="323" width="4" height="1.5" fill="#c586c0" fill-opacity="0.7"/><rect x="28" y="323" width="1" height="1.5" fill="#ce9178" fill-opacity="0.7"/><rect x="20" y="325" width="1" height="1.5" fill="#6a9955" fill-opacity="0.7"/><rect x="22" y="325" width="4" height="1.5" fill="#6a9955" fill-opacity="0.7"/><rect x="27" y="325" width="4" height="1.5" fill="#c586c0" fill-opacity="0.7"/><rect x="18" y="327" width="3" height="1.5" fill="#dcdcaa" fill-opacity="0.7"/><rect x="16" y="329" width="4" height="1.5" fill="#9cdcfe" fill-opacity="0.7"/><rect x="16" y="331" width="5" height="1.5" fill="#9cdcfe" fill-opacity="0.7"/><rect x="22" y="331" width="5" height="1.5" fill="#6a9955" fill-opacity="0.7"/><rect x="28" y="331" width="4" height="1.5" fill="#d4d4d4" fill-opacity="0.7"/><rect x="33" y="331" width="5" height="1.5" fill="#9cdcfe" fill-opacity="0.7"/><rect x="39" y="331" width="5" height="1.5" fill="#9cdcfe" fill-opacity="0.7"/><rect x="45" y="331" width="2" height="1.5" fill="#569cd6" fill-opacity="0.7"/><rect x="18" y="333" width="5" height="1.5" fill="#6a9955" fill-opacity="0.7"/><rect x="24" y="333" width="3" height="1.5" fill="#d4d4d4" fill-opacity="0.7"/><rect x="28" y="333" width="6" height="1.5" fill="#4fc1ff" fill-opacity="0.7"/><rect x="18" y="335" width="2" height="1.5" fill="#6a9955" fill-opacity="0.7"/><rect x="21" y="335" width="5" height="1.5" fill="#c586c0" fill-opacity="0.7"/><rect x="27" y="335" width="1" height="1.5" fill="#569cd6" fill-opacity="0.7"/><rect x="29" y="335" width="7" height="1.5" fill="#6a9955" fill-opacity="0.7"/><rect x="37" y="335" width="1" height="1.5" fill="#dcdcaa" fill-opacity="0.7"/><rect x="16" y="337" width="2" height="1.5" fill="#569cd6" fill-opacity="0.7"/><rect x="19" y="337" width="1" height="1.5" fill="#ce9178" fill-opacity="0.7"/><rect x="16" y="339" width="7" height="1.5" fill="#ce9178" fill-opacity="0.7"/><rect x="24" y="339" width="5" height="1.5" fill="#d4d4d4" fill-opacity="0.7"/><rect x="30" y="339" width="3" height="1.5" fill="#ce9178" fill-opacity="0.7"/><rect x="34" y="339" width="2" height="1.5" fill="#9cdcfe" fill-opacity="0.7"/><rect x="37" y="339" width="6" height="1.5" fill="#4fc1ff" fill-opacity="0.7"/><rect x="16" y="341" width="3" height="1.5" fill="#4fc1ff" fill-opacity="0.7"/><rect x="20" y="341" width="4" height="1.5" fill="#dcdcaa" fill-opacity="0.7"/><rect x="25" y="341" width="5" height="1.5" fill="#9cdcfe" fill-opacity="0.7"/><rect x="16" y="343" width="7" height="1.5" fill="#c586c0" fill-opacity="0.7"/><rect x="24" y="343" width="2" height="1.5" fill="#6a9955" fill-opacity="0.7"/><rect x="27" y="343" width="3" height="1.5" fill="#dcdcaa" fill-opacity="0.7"/><rect x="31" y="343" width="1" height="1.5" fill="#ce9178" fill-opacity="0.7"/><rect x="16" y="345" width="5" height="1.5" fill="#6a9955" fill-opacity="0.7"/><rect x="22" y="345" width="7" height="1.5" fill="#6a9955" fill-opacity="0.7"/><rect x="10" y="347" width="2" height="1.5" fill="#ce9178" fill-opacity="0.7"/><rect x="13" y="347" width="7" height="1.5" fill="#6a9955" fill-opacity="0.7"/><rect x="21" y="347" width="3" height="1.5" fill="#9cdcfe" fill-opacity="0.7"/><rect x="12" y="349" width="7" height="1.5" fill="#ce9178" fill-opacity="0.7"/><rect x="20" y="349" width="5" height="1.5" fill="#569cd6" fill-opacity="0.7"/><rect x="14" y="351" width="7" height="1.5" fill="#4fc1ff" fill-opacity="0.7"/><rect x="22" y="351" width="2" height="1.5" fill="#ce9178" fill-opacity="0.7"/><rect x="25" y="351" width="2" height="1.5" fill="#9cdcfe" fill-opacity="0.7"/><rect x="14" y="353" width="3" height="1.5" fill="#dcdcaa" fill-opacity="0.7"/><rect x="18" y="353" width="7" height="1.5" fill="#d4d4d4" fill-opacity="0.7"/><rect x="26" y="353" width="1" height="1.5" fill="#c586c0" fill-opacity="0.7"/><rect x="28" y="353" width="2" height="1.5" fill="#c586c0" fill-opacity="0.7"/><rect x="31" y="353" width="1" height="1.5" fill="#6a9955" fill-opacity="0.7"/><rect x="14" y="355" width="4" height="1.5" fill="#ce9178" fill-opacity="0.7"/><rect x="14" y="357" width="1" height="1.5" fill="#dcdcaa" fill-opacity="0.7"/><rect x="16" y="357" width="5" height="1.5" fill="#4fc1ff" fill-opacity="0.7"/><rect x="22" y="357" width="6" height="1.5" fill="#dcdcaa" fill-opacity="0.7"/><rect x="14" y="359" width="5" height="1.5" fill="#c586c0" fill-opacity="0.7"/><rect x="20" y="359" width="4" height="1.5" fill="#9cdcfe" fill-opacity="0.7"/><rect x="25" y="359" width="4" height="1.5" fill="#4fc1ff" fill-opacity="0.7"/><rect x="14" y="361" width="6" height="1.5" fill="#4fc1ff" fill-opacity="0.7"/><rect x="21" y="361" width="7" height="1.5" fill="#d4d4d4" fill-opacity="0.7"/><rect x="29" y="361" width="6" height="1.5" fill="#dcdcaa" fill-opacity="0.7"/><rect x="36" y="361" width="1" height="1.5" fill="#dcdcaa" fill-opacity="0.7"/><rect x="14" y="363" width="2" height="1.5" fill="#569cd6" fill-opacity="0.7"/><rect x="17" y="363" width="2" height="1.5" fill="#6a9955" fill-opacity="0.7"/><rect x="20" y="363" width="1" height="1.5" fill="#569cd6" fill-opacity="0.7"/><rect x="22" y="363" width="3" height="1.5" fill="#ce9178" fill-opacity="0.7"/><rect x="26" y="363" width="1" height="1.5" fill="#4fc1ff" fill-opacity="0.7"/><rect x="14" y="365" width="5" height="1.5" fill="#4fc1ff" fill-opacity="0.7"/><rect x="20" y="365" width="3" height="1.5" fill="#dcdcaa" fill-opacity="0.7"/><rect x="24" y="365" width="1" height="1.5" fill="#ce9178" fill-opacity="0.7"/><rect x="26" y="365" width="6" height="1.5" fill="#dcdcaa" fill-opacity="0.7"/><rect x="33" y="365" width="3" height="1.5" fill="#4fc1ff" fill-opacity="0.7"/><rect x="14" y="367" width="7" height="1.5" fill="#d4d4d4" fill-opacity="0.7"/><rect x="22" y="367" width="7" height="1.5" fill="#c586c0" fill-opacity="0.7"/><rect x="30" y="367" width="2" height="1.5" fill="#569cd6" fill-opacity="0.7"/><rect x="14" y="369" width="1" height="1.5" fill="#d4d4d4" fill-opacity="0.7"/><rect x="16" y="369" width="4" height="1.5" fill="#4fc1ff" fill-opacity="0.7"/><rect x="21" y="369" width="7" height="1.5" fill="#c586c0" fill-opacity="0.7"/><rect x="29" y="369" width="3" height="1.5" fill="#6a9955" fill-opacity="0.7"/><rect x="33" y="369" width="2" height="1.5" fill="#ce9178" fill-opacity="0.7"/><rect x="36" y="369" width="1" height="1.5" fill="#4fc1ff" fill-opacity="0.7"/><rect x="38" y="369" width="5" height="1.5" fill="#c586c0" fill-opacity="0.7"/><rect x="14" y="371" width="2" height="1.5" fill="#6a9955" fill-opacity="0.7"/><rect x="17" y="371" width="5" height="1.5" fill="#ce9178" fill-opacity="0.7"/><rect x="23" y="371" width="3" height="1.5" fill="#ce9178" fill-opacity="0.7"/><rect x="27" y="371" width="1" height="1.5" fill="#d4d4d4" fill-opacity="0.7"/><rect x="12" y="373" width="7" height="1.5" fill="#ce9178" fill-opacity="0.7"/><rect x="14" y="375" width="6" height="1.5" fill="#6a9955" fill-opacity="0.7"/><rect x="21" y="375" width="2" height="1.5" fill="#6a9955" fill-opacity="0.7"/><rect x="24" y="375" width="4" height="1.5" fill="#dcdcaa" fill-opacity="0.7"/><rect x="29" y="375" width="2" height="1.5" fill="#c586c0" fill-opacity="0.7"/><rect x="14" y="377" width="5" height="1.5" fill="#dcdcaa" fill-opacity="0.7"/><rect x="20" y="377" width="4" height="1.5" fill="#ce9178" fill-opacity="0.7"/><rect x="25" y="377" width="3" height="1.5" fill="#c586c0" fill-opacity="0.7"/><rect x="29" y="377" width="3" height="1.5" fill="#d4d4d4" fill-opacity="0.7"/><rect x="14" y="379" width="5" height="1.5" fill="#6a9955" fill-opacity="0.7"/><rect x="20" y="379" width="5" height="1.5" fill="#d4d4d4" fill-opacity="0.7"/><rect x="14" y="381" width="3" height="1.5" fill="#9cdcfe" fill-opacity="0.7"/><rect x="18" y="381" width="6" height="1.5" fill="#dcdcaa" fill-opacity="0.7"/><rect x="25" y="381" width="1" height="1.5" fill="#c586c0" fill-opacity="0.7"/><rect x="27" y="381" width="3" height="1.5" fill="#569cd6" fill-opacity="0.7"/><rect x="14" y="383" width="5" height="1.5" fill="#d4d4d4" fill-opacity="0.7"/><rect x="20" y="383" width="4" height="1.5" fill="#c586c0" fill-opacity="0.7"/><rect x="25" y="383" width="3" height="1.5" fill="#4fc1ff" fill-opacity="0.7"/><rect x="14" y="385" width="1" height="1.5" fill="#ce9178" fill-opacity="0.7"/><rect x="16" y="385" width="5" height="1.5" fill="#ce9178" fill-opacity="0.7"/><rect x="22" y="385" width="4" height="1.5" fill="#dcdcaa" fill-opacity="0.7"/><rect x="27" y="385" width="1" height="1.5" fill="#4fc1ff" fill-opacity="0.7"/><rect x="29" y="385" width="1" height="1.5" fill="#4fc1ff" fill-opacity="0.7"/><rect x="31" y="385" width="1" height="1.5" fill="#4fc1ff" fill-opacity="0.7"/><rect x="33" y="385" width="4" height="1.5" fill="#9cdcfe" fill-opacity="0.7"/><rect x="12" y="387" width="6" height="1.5" fill="#569cd6" fill-opacity="0.7"/><rect x="19" y="387" width="4" height="1.5" fill="#ce9178" fill-opacity="0.7"/><rect x="24" y="387" width="3" height="1.5" fill="#569cd6" fill-opacity="0.7"/><rect x="14" y="389" width="4" height="1.5" fill="#4fc1ff" fill-opacity="0.7"/><rect x="19" y="389" width="4" height="1.5" fill="#9cdcfe" fill-opacity="0.7"/><rect x="24" y="389" width="2" height="1.5" fill="#9cdcfe" fill-opacity="0.7"/><rect x="27" y="389" width="7" height="1.5" fill="#c586c0" fill-opacity="0.7"/><rect x="35" y="389" width="2" height="1.5" fill="#dcdcaa" fill-opacity="0.7"/><rect x="14" y="391" width="6" height="1.5" fill="#ce9178" fill-opacity="0.7"/><rect x="21" y="391" width="1" height="1.5" fill="#ce9178" fill-opacity="0.7"/><rect x="23" y="391" width="4" height="1.5" fill="#c586c0" fill-opacity="0.7"/><rect x="28" y="391" width="1" height="1.5" fill="#dcdcaa" fill-opacity="0.7"/><rect x="14" y="393" width="5" height="1.5" fill="#dcdcaa" fill-opacity="0.7"/><rect x="20" y="393" width="3" height="1.5" fill="#4fc1ff" fill-opacity="0.7"/><rect x="14" y="395" width="7" height="1.5" fill="#569cd6" fill-opacity="0.7"/><rect x="22" y="395" width="5" height="1.5" fill="#c586c0" fill-opacity="0.7"/><rect x="28" y="395" width="1" height="1.5" fill="#ce9178" fill-opacity="0.7"/><rect x="30" y="395" width="1" height="1.5" fill="#569cd6" fill-opacity="0.7"/><rect x="14" y="397" width="6" height="1.5" fill="#d4d4d4" fill-opacity="0.7"/><rect x="21" y="397" width="6" height="1.5" fill="#6a9955" fill-opacity="0.7"/><rect x="14" y="399" width="7" height="1.5" fill="#ce9178" fill-opacity="0.7"/><rect x="22" y="399" width="4" height="1.5" fill="#6a9955" fill-opacity="0.7"/><rect x="27" y="399" width="2" height="1.5" fill="#9cdcfe" fill-opacity="0.7"/><rect x="14" y="401" width="3" height="1.5" fill="#4fc1ff" fill-opacity="0.7"/><rect x="18" y="401" width="7" height="1.5" fill="#9cdcfe" fill-opacity="0.7"/><rect x="26" y="401" width="1" height="1.5" fill="#4fc1ff" fill-opacity="0.7"/><rect x="14" y="403" width="4" height="1.5" fill="#ce9178" fill-opacity="0.7"/><rect x="19" y="403" width="5" height="1.5" fill="#ce9178" fill-opacity="0.7"/><rect x="14" y="405" width="3" height="1.5" fill="#ce9178" fill-opacity="0.7"/><rect x="18" y="405" width="1" height="1.5" fill="#dcdcaa" fill-opacity="0.7"/><rect x="20" y="405" width="2" height="1.5" fill="#ce9178" fill-opacity="0.7"/><rect x="23" y="405" width="5" height="1.5" fill="#d4d4d4" fill-opacity="0.7"/><rect x="29" y="405" width="3" height="1.5" fill="#4fc1ff" fill-opacity="0.7"/><rect x="14" y="407" width="7" height="1.5" fill="#dcdcaa" fill-opacity="0.7"/><rect x="22" y="407" width="2" height="1.5" fill="#c586c0" fill-opacity="0.7"/><rect x="14" y="409" width="4" height="1.5" fill="#9cdcfe" fill-opacity="0.7"/><rect x="19" y="409" width="2" height="1.5" fill="#6a9955" fill-opacity="0.7"/><rect x="22" y="409" width="2" height="1.5" fill="#ce9178" fill-opacity="0.7"/><rect x="25" y="409" width="4" height="1.5" fill="#569cd6" fill-opacity="0.7"/><rect x="30" y="409" width="2" height="1.5" fill="#ce9178" fill-opacity="0.7"/><rect x="12" y="411" width="6" height="1.5" fill="#569cd6" fill-opacity="0.7"/><rect x="10" y="413" width="2" height="1.5" fill="#569cd6" fill-opacity="0.7"/><rect x="14" y="415" width="4" height="1.5" fill="#ce9178" fill-opacity="0.7"/><rect x="19" y="415" width="4" height="1.5" fill="#9cdcfe" fill-opacity="0.7"/><rect x="24" y="415" width="2" height="1.5" fill="#569cd6" fill-opacity="0.7"/><rect x="14" y="417" width="5" height="1.5" fill="#ce9178" fill-opacity="0.7"/><rect x="14" y="419" width="6" height="1.5" fill="#c586c0" fill-opacity="0.7"/><rect x="21" y="419" width="2" height="1.5" fill="#d4d4d4" fill-opacity="0.7"/><rect x="24" y="419" width="4" height="1.5" fill="#9cdcfe" fill-opacity="0.7"/><rect x="14" y="421" width="4" height="1.5" fill="#ce9178" fill-opacity="0.7"/><rect x="19" y="421" width="4" height="1.5" fill="#d4d4d4" fill-opacity="0.7"/><rect x="24" y="421" width="5" height="1.5" fill="#9cdcfe" fill-opacity="0.7"/><rect x="30" y="421" width="1" height="1.5" fill="#c586c0" fill-opacity="0.7"/><rect x="14" y="423" width="3" height="1.5" fill="#ce9178" fill-opacity="0.7"/><rect x="18" y="423" width="2" height="1.5" fill="#d4d4d4" fill-opacity="0.7"/><rect x="21" y="423" width="5" height="1.5" fill="#ce9178" fill-opacity="0.7"/><rect x="27" y="423" width="1" height="1.5" fill="#c586c0" fill-opacity="0.7"/><rect x="14" y="425" width="3" height="1.5" fill="#6a9955" fill-opacity="0.7"/><rect x="18" y="425" width="2" height="1.5" fill="#569cd6" fill-opacity="0.7"/><rect x="21" y="425" width="3" height="1.5" fill="#ce9178" fill-opacity="0.7"/><rect x="12" y="427" width="4" height="1.5" fill="#d4d4d4" fill-opacity="0.7"/><rect x="17" y="427" width="3" height="1.5" fill="#d4d4d4" fill-opacity="0.7"/><rect x="10" y="429" width="2" height="1.5" fill="#4fc1ff" fill-opacity="0.7"/><rect x="13" y="429" width="1" height="1.5" fill="#c586c0" fill-opacity="0.7"/><rect x="10" y="431" width="7" height="1.5" fill="#6a9955" fill-opacity="0.7"/><rect x="18" y="431" width="1" height="1.5" fill="#4fc1ff" fill-opacity="0.7"/><rect x="12" y="433" width="6" height="1.5" fill="#c586c0" fill-opacity="0.7"/><rect x="19" y="433" width="3" height="1.5" fill="#6a9955" fill-opacity="0.7"/><rect x="23" y="433" width="1" height="1.5" fill="#9cdcfe" fill-opacity="0.7"/><rect x="25" y="433" width="3" height="1.5" fill="#9cdcfe" fill-opacity="0.7"/><rect x="29" y="433" width="2" height="1.5" fill="#c586c0" fill-opacity="0.7"/><rect x="32" y="433" width="5" height="1.5" fill="#4fc1ff" fill-opacity="0.7"/><rect x="38" y="433" width="4" height="1.5" fill="#dcdcaa" fill-opacity="0.7"/><rect x="43" y="433" width="1" height="1.5" fill="#ce9178" fill-opacity="0.7"/><rect x="14" y="435" width="6" height="1.5" fill="#4fc1ff" fill-opacity="0.7"/><rect x="21" y="435" width="1" height="1.5" fill="#4fc1ff" fill-opacity="0.7"/><rect x="23" y="435" width="3" height="1.5" fill="#6a9955" fill-opacity="0.7"/><rect x="27" y="435" width="2" height="1.5" fill="#6a9955" fill-opacity="0.7"/><rect x="30" y="435" width="6" height="1.5" fill="#9cdcfe" fill-opacity="0.7"/><rect x="37" y="435" width="3" height="1.5" fill="#c586c0" fill-opacity="0.7"/><rect x="41" y="435" width="5" height="1.5" fill="#ce9178" fill-opacity="0.7"/><rect x="47" y="435" width="1" height="1.5" fill="#4fc1ff" fill-opacity="0.7"/><rect x="16" y="437" width="2" height="1.5" fill="#4fc1ff" fill-opacity="0.7"/><rect x="19" y="437" width="5" height="1.5" fill="#4fc1ff" fill-opacity="0.7"/><rect x="25" y="437" width="7" height="1.5" fill="#d4d4d4" fill-opacity="0.7"/><rect x="33" y="437" width="2" height="1.5" fill="#9cdcfe" fill-opacity="0.7"/><rect x="36" y="437" width="3" height="1.5" fill="#569cd6" fill-opacity="0.7"/><rect x="40" y="437" width="4" height="1.5" fill="#ce9178" fill-opacity="0.7"/><rect x="45" y="437" width="5" height="1.5" fill="#4fc1ff" fill-opacity="0.7"/><rect x="51" y="437" width="1" height="1.5" fill="#ce9178" fill-opacity="0.7"/><rect x="53" y="437" width="2" height="1.5" fill="#d4d4d4" fill-opacity="0.7"/><rect x="56" y="437" width="4" height="1.5" fill="#d4d4d4" fill-opacity="0.7"/><rect x="16" y="439" width="7" height="1.5" fill="#c586c0" fill-opacity="0.7"/><rect x="24" y="439" width="6" height="1.5" fill="#4fc1ff" fill-opacity="0.7"/><rect x="31" y="439" width="4" height="1.5" fill="#ce9178" fill-opacity="0.7"/><rect x="36" y="439" width="1" height="1.5" fill="#ce9178" fill-opacity="0.7"/><rect x="14" y="441" width="1" height="1.5" fill="#c586c0" fill-opacity="0.7"/><rect x="16" y="441" width="2" height="1.5" fill="#d4d4d4" fill-opacity="0.7"/><rect x="19" y="441" width="2" height="1.5" fill="#9cdcfe" fill-opacity="0.7"/><rect x="14" y="443" width="3" height="1.5" fill="#569cd6" fill-opacity="0.7"/><rect x="18" y="443" width="7" height="1.5" fill="#569cd6" fill-opacity="0.7"/><rect x="26" y="443" width="7" height="1.5" fill="#d4d4d4" fill-opacity="0.7"/><rect x="34" y="443" width="4" height="1.5" fill="#d4d4d4" fill-opacity="0.7"/><rect x="12" y="445" width="1" height="1.5" fill="#6a9955" fill-opacity="0.7"/><rect x="14" y="445" width="1" height="1.5" fill="#c586c0" fill-opacity="0.7"/><rect x="16" y="445" width="2" height="1.5" fill="#ce9178" fill-opacity="0.7"/><rect x="10" y="447" width="5" height="1.5" fill="#569cd6" fill-opacity="0.7"/><rect x="10" y="449" width="3" height="1.5" fill="#9cdcfe" fill-opacity="0.7"/><rect x="14" y="449" width="5" height="1.5" fill="#dcdcaa" fill-opacity="0.7"/><rect x="20" y="449" width="5" height="1.5" fill="#9cdcfe" fill-opacity="0.7"/><rect x="26" y="449" width="2" height="1.5" fill="#6a9955" fill-opacity="0.7"/><rect x="12" y="451" width="4" height="1.5" fill="#4fc1ff" fill-opacity="0.7"/><rect x="17" y="451" width="6" height="1.5" fill="#ce9178" fill-opacity="0.7"/><rect x="24" y="451" width="2" height="1.5" fill="#ce9178" fill-opacity="0.7"/><rect x="12" y="453" width="4" height="1.5" fill="#569cd6" fill-opacity="0.7"/><rect x="17" y="453" width="4" height="1.5" fill="#6a9955" fill-opacity="0.7"/><rect x="22" y="453" width="3" height="1.5" fill="#c586c0" fill-opacity="0.7"/><rect x="16" y="455" width="7" height="1.5" fill="#ce9178" fill-opacity="0.7"/><rect x="24" y="455" width="4" height="1.5" fill="#4fc1ff" fill-opacity="0.7"/><rect x="29" y="455" width="1" height="1.5" fill="#ce9178" fill-opacity="0.7"/><rect x="16" y="457" width="7" height="1.5" fill="#ce9178" fill-opacity="0.7"/><rect x="24" y="457" width="7" height="1.5" fill="#4fc1ff" fill-opacity="0.7"/><rect x="32" y="457" width="1" height="1.5" fill="#ce9178" fill-opacity="0.7"/><rect x="16" y="459" width="5" height="1.5" fill="#ce9178" fill-opacity="0.7"/><rect x="16" y="461" width="4" height="1.5" fill="#d4d4d4" fill-opacity="0.7"/><rect x="21" y="461" width="2" height="1.5" fill="#ce9178" fill-opacity="0.7"/><rect x="16" y="463" width="7" height="1.5" fill="#dcdcaa" fill-opacity="0.7"/><rect x="24" y="463" width="1" height="1.5" fill="#c586c0" fill-opacity="0.7"/><rect x="26" y="463" width="3" height="1.5" fill="#569cd6" fill-opacity="0.7"/><rect x="30" y="463" width="4" height="1.5" fill="#ce9178" fill-opacity="0.7"/><rect x="16" y="465" width="2" height="1.5" fill="#d4d4d4" fill-opacity="0.7"/><rect x="19" y="465" width="4" height="1.5" fill="#c586c0" fill-opacity="0.7"/><rect x="24" y="465" width="1" height="1.5" fill="#c586c0" fill-opacity="0.7"/><rect x="26" y="465" width="4" height="1.5" fill="#dcdcaa" fill-opacity="0.7"/><rect x="31" y="465" width="6" height="1.5" fill="#6a9955" fill-opacity="0.7"/><rect x="16" y="467" width="4" height="1.5" fill="#c586c0" fill-opacity="0.7"/><rect x="21" y="467" width="1" height="1.5" fill="#c586c0" fill-opacity="0.7"/><rect x="16" y="469" width="5" height="1.5" fill="#6a9955" fill-opacity="0.7"/><rect x="22" y="469" width="1" height="1.5" fill="#569cd6" fill-opacity="0.7"/><rect x="24" y="469" width="7" height="1.5" fill="#4fc1ff" fill-opacity="0.7"/><rect x="32" y="469" width="2" height="1.5" fill="#9cdcfe" fill-opacity="0.7"/><rect x="16" y="471" width="3" height="1.5" fill="#569cd6" fill-opacity="0.7"/><rect x="20" y="471" width="6" height="1.5" fill="#4fc1ff" fill-opacity="0.7"/><rect x="27" y="471" width="4" height="1.5" fill="#c586c0" fill-opacity="0.7"/><rect x="32" y="471" width="4" height="1.5" fill="#6a9955" fill-opacity="0.7"/><rect x="16" y="473" width="3" height="1.5" fill="#569cd6" fill-opacity="0.7"/><rect x="20" y="473" width="4" height="1.5" fill="#c586c0" fill-opacity="0.7"/><rect x="25" y="473" width="3" height="1.5" fill="#ce9178" fill-opacity="0.7"/><rect x="29" y="473" width="6" height="1.5" fill="#6a9955" fill-opacity="0.7"/><rect x="36" y="473" width="2" height="1.5" fill="#d4d4d4" fill-opacity="0.7"/><rect x="39" y="473" width="3" height="1.5" fill="#c586c0" fill-opacity="0.7"/><rect x="43" y="473" width="1" height="1.5" fill="#9cdcfe" fill-opacity="0.7"/><rect x="16" y="475" width="3" height="1.5" fill="#ce9178" fill-opacity="0.7"/><rect x="20" y="475" width="7" height="1.5" fill="#d4d4d4" fill-opacity="0.7"/><rect x="28" y="475" width="2" height="1.5" fill="#dcdcaa" fill-opacity="0.7"/><rect x="14" y="477" width="6" height="1.5" fill="#dcdcaa" fill-opacity="0.7"/><rect x="12" y="479" width="4" height="1.5" fill="#ce9178" fill-opacity="0.7"/><rect x="12" y="481" width="5" height="1.5" fill="#569cd6" fill-opacity="0.7"/><rect x="18" y="481" width="4" height="1.5" fill="#6a9955" fill-opacity="0.7"/><rect x="23" y="481" width="1" height="1.5" fill="#6a9955" fill-opacity="0.7"/><rect x="14" y="483" width="1" height="1.5" fill="#dcdcaa" fill-opacity="0.7"/><rect x="16" y="483" width="2" height="1.5" fill="#ce9178" fill-opacity="0.7"/><rect x="19" y="483" width="6" height="1.5" fill="#d4d4d4" fill-opacity="0.7"/><rect x="26" y="483" width="5" height="1.5" fill="#569cd6" fill-opacity="0.7"/><rect x="32" y="483" width="1" height="1.5" fill="#4fc1ff" fill-opacity="0.7"/><rect x="34" y="483" width="5" height="1.5" fill="#569cd6" fill-opacity="0.7"/><rect x="40" y="483" width="5" height="1.5" fill="#6a9955" fill-opacity="0.7"/><rect x="16" y="485" width="3" height="1.5" fill="#6a9955" fill-opacity="0.7"/><rect x="20" y="485" width="2" height="1.5" fill="#6a9955" fill-opacity="0.7"/><rect x="23" y="485" width="7" height="1.5" fill="#4fc1ff" fill-opacity="0.7"/><rect x="31" y="485" width="7" height="1.5" fill="#d4d4d4" fill-opacity="0.7"/><rect x="39" y="485" width="1" height="1.5" fill="#dcdcaa" fill-opacity="0.7"/><rect x="41" y="485" width="7" height="1.5" fill="#569cd6" fill-opacity="0.7"/><rect x="49" y="485" width="2" height="1.5" fill="#dcdcaa" fill-opacity="0.7"/><rect x="52" y="485" width="7" height="1.5" fill="#4fc1ff" fill-opacity="0.7"/><rect x="60" y="485" width="1" height="1.5" fill="#569cd6" fill-opacity="0.7"/><rect x="62" y="485" width="1" height="1.5" fill="#dcdcaa" fill-opacity="0.7"/><rect x="18" y="487" width="5" height="1.5" fill="#569cd6" fill-opacity="0.7"/><rect x="24" y="487" width="3" height="1.5" fill="#4fc1ff" fill-opacity="0.7"/><rect x="28" y="487" width="3" height="1.5" fill="#ce9178" fill-opacity="0.7"/><rect x="32" y="487" width="7" height="1.5" fill="#d4d4d4" fill-opacity="0.7"/><rect x="40" y="487" width="5" height="1.5" fill="#d4d4d4" fill-opacity="0.7"/><rect x="46" y="487" width="1" height="1.5" fill="#dcdcaa" fill-opacity="0.7"/><rect x="18" y="489" width="3" height="1.5" fill="#9cdcfe" fill-opacity="0.7"/><rect x="22" y="489" width="2" height="1.5" fill="#d4d4d4" fill-opacity="0.7"/><rect x="25" y="489" width="6" height="1.5" fill="#d4d4d4" fill-opacity="0.7"/><rect x="32" y="489" width="3" height="1.5" fill="#d4d4d4" fill-opacity="0.7"/><rect x="36" y="489" width="5" height="1.5" fill="#569cd6" fill-opacity="0.7"/><rect x="42" y="489" width="3" height="1.5" fill="#6a9955" fill-opacity="0.7"/><rect x="46" y="489" width="1" height="1.5" fill="#d4d4d4" fill-opacity="0.7"/><rect x="48" y="489" width="1" height="1.5" fill="#d4d4d4" fill-opacity="0.7"/><rect x="50" y="489" width="7" height="1.5" fill="#d4d4d4" fill-opacity="0.7"/><rect x="58" y="489" width="2" height="1.5" fill="#569cd6" fill-opacity="0.7"/><rect x="16" y="491" width="6" height="1.5" fill="#c586c0" fill-opacity="0.7"/><rect x="16" y="493" width="2" height="1.5" fill="#569cd6" fill-opacity="0.7"/><rect x="19" y="493" width="5" height="1.5" fill="#ce9178" fill-opacity="0.7"/><rect x="25" y="493" width="5" height="1.5" fill="#569cd6" fill-opacity="0.7"/><rect x="31" y="493" width="5" height="1.5" fill="#d4d4d4" fill-opacity="0.7"/><rect x="14" y="495" width="3" height="1.5" fill="#9cdcfe" fill-opacity="0.7"/><rect x="12" y="497" width="3" height="1.5" fill="#4fc1ff" fill-opacity="0.7"/><rect x="12" y="499" width="6" height="1.5" fill="#dcdcaa" fill-opacity="0.7"/><rect x="19" y="499" width="4" height="1.5" fill="#6a9955" fill-opacity="0.7"/><rect x="24" y="499" width="5" height="1.5" fill="#4fc1ff" fill-opacity="0.7"/><rect x="14" y="501" width="3" height="1.5" fill="#dcdcaa" fill-opacity="0.7"/><rect x="18" y="501" width="6" height="1.5" fill="#d4d4d4" fill-opacity="0.7"/><rect x="25" y="501" width="5" height="1.5" fill="#4fc1ff" fill-opacity="0.7"/><rect x="14" y="503" width="2" height="1.5" fill="#ce9178" fill-opacity="0.7"/><rect x="17" y="503" width="5" height="1.5" fill="#ce9178" fill-opacity="0.7"/><rect x="23" y="503" width="5" height="1.5" fill="#ce9178" fill-opacity="0.7"/><rect x="29" y="503" width="2" height="1.5" fill="#9cdcfe" fill-opacity="0.7"/><rect x="16" y="505" width="1" height="1.5" fill="#ce9178" fill-opacity="0.7"/><rect x="18" y="505" width="2" height="1.5" fill="#4fc1ff" fill-opacity="0.7"/><rect x="21" y="505" width="3" height="1.5" fill="#4fc1ff" fill-opacity="0.7"/><rect x="16" y="507" width="7" height="1.5" fill="#569cd6" fill-opacity="0.7"/><rect x="24" y="507" width="1" height="1.5" fill="#ce9178" fill-opacity="0.7"/><rect x="26" y="507" width="2" height="1.5" fill="#9cdcfe" fill-opacity="0.7"/><rect x="29" y="507" width="4" height="1.5" fill="#569cd6" fill-opacity="0.7"/><rect x="34" y="507" width="3" height="1.5" fill="#ce9178" fill-opacity="0.7"/><rect x="16" y="509" width="4" height="1.5" fill="#569cd6" fill-opacity="0.7"/><rect x="21" y="509" width="1" height="1.5" fill="#4fc1ff" fill-opacity="0.7"/><rect x="16" y="511" width="5" height="1.5" fill="#6a9955" fill-opacity="0.7"/><rect x="22" y="511" width="2" height="1.5" fill="#ce9178" fill-opacity="0.7"/><rect x="25" y="511" width="4" height="1.5" fill="#569cd6" fill-opacity="0.7"/><rect x="30" y="511" width="4" height="1.5" fill="#dcdcaa" fill-opacity="0.7"/><rect x="35" y="511" width="1" height="1.5" fill="#6a9955" fill-opacity="0.7"/><rect x="37" y="511" width="1" height="1.5" fill="#ce9178" fill-opacity="0.7"/><rect x="39" y="511" width="1" height="1.5" fill="#d4d4d4" fill-opacity="0.7"/><rect x="16" y="513" width="3" height="1.5" fill="#4fc1ff" fill-opacity="0.7"/><rect x="20" y="513" width="2" height="1.5" fill="#d4d4d4" fill-opacity="0.7"/><rect x="23" y="513" width="2" height="1.5" fill="#569cd6" fill-opacity="0.7"/><rect x="26" y="513" width="7" height="1.5" fill="#c586c0" fill-opacity="0.7"/><rect x="34" y="513" width="1" height="1.5" fill="#9cdcfe" fill-opacity="0.7"/><rect x="16" y="515" width="5" height="1.5" fill="#6a9955" fill-opacity="0.7"/><rect x="22" y="515" width="7" height="1.5" fill="#4fc1ff" fill-opacity="0.7"/><rect x="30" y="515" width="2" height="1.5" fill="#ce9178" fill-opacity="0.7"/><rect x="33" y="515" width="7" height="1.5" fill="#569cd6" fill-opacity="0.7"/><rect x="41" y="515" width="1" height="1.5" fill="#ce9178" fill-opacity="0.7"/><rect x="43" y="515" width="1" height="1.5" fill="#d4d4d4" fill-opacity="0.7"/><rect x="45" y="515" width="2" height="1.5" fill="#d4d4d4" fill-opacity="0.7"/><rect x="16" y="517" width="1" height="1.5" fill="#c586c0" fill-opacity="0.7"/><rect x="18" y="517" width="1" height="1.5" fill="#569cd6" fill-opacity="0.7"/><rect x="20" y="517" width="6" height="1.5" fill="#569cd6" fill-opacity="0.7"/><rect x="14" y="519" width="3" height="1.5" fill="#ce9178" fill-opacity="0.7"/><rect x="12" y="521" width="1" height="1.5" fill="#4fc1ff" fill-opacity="0.7"/><rect x="14" y="521" width="1" height="1.5" fill="#dcdcaa" fill-opacity="0.7"/><rect x="12" y="523" width="4" height="1.5" fill="#dcdcaa" fill-opacity="0.7"/><rect x="17" y="523" width="4" height="1.5" fill="#4fc1ff" fill-opacity="0.7"/><rect x="22" y="523" width="2" height="1.5" fill="#dcdcaa" fill-opacity="0.7"/><rect x="14" y="525" width="3" height="1.5" fill="#c586c0" fill-opacity="0.7"/><rect x="18" y="525" width="1" height="1.5" fill="#dcdcaa" fill-opacity="0.7"/><rect x="20" y="525" width="3" height="1.5" fill="#9cdcfe" fill-opacity="0.7"/><rect x="24" y="525" width="5" height="1.5" fill="#4fc1ff" fill-opacity="0.7"/><rect x="30" y="525" width="3" height="1.5" fill="#4fc1ff" fill-opacity="0.7"/><rect x="16" y="527" width="5" height="1.5" fill="#4fc1ff" fill-opacity="0.7"/><rect x="22" y="527" width="4" height="1.5" fill="#dcdcaa" fill-opacity="0.7"/><rect x="27" y="527" width="4" height="1.5" fill="#569cd6" fill-opacity="0.7"/><rect x="32" y="527" width="2" height="1.5" fill="#569cd6" fill-opacity="0.7"/><rect x="35" y="527" width="2" height="1.5" fill="#d4d4d4" fill-opacity="0.7"/><rect x="38" y="527" width="1" height="1.5" fill="#6a9955" fill-opacity="0.7"/><rect x="18" y="529" width="2" height="1.5" fill="#4fc1ff" fill-opacity="0.7"/><rect x="21" y="529" width="2" height="1.5" fill="#dcdcaa" fill-opacity="0.7"/><rect x="24" y="529" width="6" height="1.5" fill="#d4d4d4" fill-opacity="0.7"/><rect x="31" y="529" width="5" height="1.5" fill="#d4d4d4" fill-opacity="0.7"/><rect x="37" y="529" width="5" height="1.5" fill="#9cdcfe" fill-opacity="0.7"/><rect x="18" y="531" width="2" height="1.5" fill="#d4d4d4" fill-opacity="0.7"/><rect x="21" y="531" width="2" height="1.5" fill="#ce9178" fill-opacity="0.7"/><rect x="24" y="531" width="3" height="1.5" fill="#4fc1ff" fill-opacity="0.7"/><rect x="28" y="531" width="6" height="1.5" fill="#dcdcaa" fill-opacity="0.7"/><rect x="35" y="531" width="6" height="1.5" fill="#9cdcfe" fill-opacity="0.7"/><rect x="42" y="531" width="7" height="1.5" fill="#dcdcaa" fill-opacity="0.7"/><rect x="50" y="531" width="5" height="1.5" fill="#ce9178" fill-opacity="0.7"/><rect x="56" y="531" width="1" height="1.5" fill="#dcdcaa" fill-opacity="0.7"/><rect x="58" y="531" width="2" height="1.5" fill="#dcdcaa" fill-opacity="0.7"/><rect x="16" y="533" width="1" height="1.5" fill="#c586c0" fill-opacity="0.7"/><rect x="18" y="533" width="4" height="1.5" fill="#569cd6" fill-opacity="0.7"/><rect x="16" y="535" width="3" height="1.5" fill="#4fc1ff" fill-opacity="0.7"/><rect x="20" y="535" width="1" height="1.5" fill="#ce9178" fill-opacity="0.7"/><rect x="22" y="535" width="7" height="1.5" fill="#c586c0" fill-opacity="0.7"/><rect x="30" y="535" width="2" height="1.5" fill="#c586c0" fill-opacity="0.7"/><rect x="33" y="535" width="6" height="1.5" fill="#dcdcaa" fill-opacity="0.7"/><rect x="14" y="537" width="3" height="1.5" fill="#dcdcaa" fill-opacity="0.7"/><rect x="18" y="537" width="1" height="1.5" fill="#d4d4d4" fill-opacity="0.7"/><rect x="12" y="539" width="4" height="1.5" fill="#ce9178" fill-opacity="0.7"/><rect x="12" y="541" width="4" height="1.5" fill="#9cdcfe" fill-opacity="0.7"/><rect x="17" y="541" width="1" height="1.5" fill="#6a9955" fill-opacity="0.7"/><rect x="19" y="541" width="1" height="1.5" fill="#c586c0" fill-opacity="0.7"/><rect x="21" y="541" width="1" height="1.5" fill="#c586c0" fill-opacity="0.7"/><rect x="14" y="543" width="2" height="1.5" fill="#569cd6" fill-opacity="0.7"/><rect x="17" y="543" width="1" height="1.5" fill="#dcdcaa" fill-opacity="0.7"/><rect x="19" y="543" width="2" height="1.5" fill="#6a9955" fill-opacity="0.7"/><rect x="22" y="543" width="2" height="1.5" fill="#4fc1ff" fill-opacity="0.7"/><rect x="18" y="545" width="3" height="1.5" fill="#569cd6" fill-opacity="0.7"/><rect x="22" y="545" width="2" height="1.5" fill="#569cd6" fill-opacity="0.7"/><rect x="25" y="545" width="3" height="1.5" fill="#4fc1ff" fill-opacity="0.7"/><rect x="18" y="547" width="1" height="1.5" fill="#dcdcaa" fill-opacity="0.7"/><rect x="20" y="547" width="2" height="1.5" fill="#569cd6" fill-opacity="0.7"/><rect x="23" y="547" width="6" height="1.5" fill="#dcdcaa" fill-opacity="0.7"/><rect x="30" y="547" width="7" height="1.5" fill="#6a9955" fill-opacity="0.7"/><rect x="38" y="547" width="3" height="1.5" fill="#4fc1ff" fill-opacity="0.7"/><rect x="42" y="547" width="4" height="1.5" fill="#ce9178" fill-opacity="0.7"/><rect x="18" y="549" width="3" height="1.5" fill="#569cd6" fill-opacity="0.7"/><rect x="22" y="549" width="5" height="1.5" fill="#ce9178" fill-opacity="0.7"/><rect x="18" y="551" width="2" height="1.5" fill="#4fc1ff" fill-opacity="0.7"/><rect x="21" y="551" width="6" height="1.5" fill="#9cdcfe" fill-opacity="0.7"/><rect x="28" y="551" width="1" height="1.5" fill="#d4d4d4" fill-opacity="0.7"/><rect x="30" y="551" width="3" height="1.5" fill="#569cd6" fill-opacity="0.7"/><rect x="34" y="551" width="5" height="1.5" fill="#ce9178" fill-opacity="0.7"/><rect x="40" y="551" width="3" height="1.5" fill="#6a9955" fill-opacity="0.7"/><rect x="44" y="551" width="2" height="1.5" fill="#d4d4d4" fill-opacity="0.7"/><rect x="18" y="553" width="1" height="1.5" fill="#ce9178" fill-opacity="0.7"/><rect x="20" y="553" width="6" height="1.5" fill="#dcdcaa" fill-opacity="0.7"/><rect x="27" y="553" width="1" height="1.5" fill="#ce9178" fill-opacity="0.7"/><rect x="29" y="553" width="3" height="1.5" fill="#569cd6" fill-opacity="0.7"/><rect x="33" y="553" width="2" height="1.5" fill="#4fc1ff" fill-opacity="0.7"/><rect x="36" y="553" width="2" height="1.5" fill="#ce9178" fill-opacity="0.7"/><rect x="16" y="555" width="3" height="1.5" fill="#6a9955" fill-opacity="0.7"/><rect x="14" y="557" width="3" height="1.5" fill="#6a9955" fill-opacity="0.7"/><rect x="14" y="559" width="3" height="1.5" fill="#6a9955" fill-opacity="0.7"/><rect x="18" y="559" width="4" height="1.5" fill="#9cdcfe" fill-opacity="0.7"/><rect x="23" y="559" width="2" height="1.5" fill="#569cd6" fill-opacity="0.7"/><rect x="26" y="559" width="2" height="1.5" fill="#9cdcfe" fill-opacity="0.7"/><rect x="16" y="561" width="4" height="1.5" fill="#c586c0" fill-opacity="0.7"/><rect x="21" y="561" width="5" height="1.5" fill="#9cdcfe" fill-opacity="0.7"/><rect x="27" y="561" width="3" height="1.5" fill="#569cd6" fill-opacity="0.7"/><rect x="31" y="561" width="1" height="1.5" fill="#569cd6" fill-opacity="0.7"/><rect x="33" y="561" width="3" height="1.5" fill="#dcdcaa" fill-opacity="0.7"/><rect x="18" y="563" width="1" height="1.5" fill="#9cdcfe" fill-opacity="0.7"/><rect x="20" y="563" width="2" height="1.5" fill="#c586c0" fill-opacity="0.7"/><rect x="23" y="563" width="7" height="1.5" fill="#6a9955" fill-opacity="0.7"/><rect x="31" y="563" width="5" height="1.5" fill="#ce9178" fill-opacity="0.7"/><rect x="37" y="563" width="4" height="1.5" fill="#9cdcfe" fill-opacity="0.7"/><rect x="42" y="563" width="2" height="1.5" fill="#4fc1ff" fill-opacity="0.7"/><rect x="45" y="563" width="1" height="1.5" fill="#569cd6" fill-opacity="0.7"/><rect x="47" y="563" width="3" height="1.5" fill="#9cdcfe" fill-opacity="0.7"/><rect x="51" y="563" width="3" height="1.5" fill="#d4d4d4" fill-opacity="0.7"/><rect x="55" y="563" width="2" height="1.5" fill="#4fc1ff" fill-opacity="0.7"/><rect x="20" y="565" width="6" height="1.5" fill="#6a9955" fill-opacity="0.7"/><rect x="27" y="565" width="3" height="1.5" fill="#4fc1ff" fill-opacity="0.7"/><rect x="31" y="565" width="2" height="1.5" fill="#4fc1ff" fill-opacity="0.7"/><rect x="34" y="565" width="2" height="1.5" fill="#c586c0" fill-opacity="0.7"/><rect x="37" y="565" width="4" height="1.5" fill="#6a9955" fill-opacity="0.7"/><rect x="42" y="565" width="3" height="1.5" fill="#4fc1ff" fill-opacity="0.7"/><rect x="20" y="567" width="4" height="1.5" fill="#dcdcaa" fill-opacity="0.7"/><rect x="25" y="567" width="6" height="1.5" fill="#569cd6" fill-opacity="0.7"/><rect x="32" y="567" width="4" height="1.5" fill="#d4d4d4" fill-opacity="0.7"/><rect x="37" y="567" width="7" height="1.5" fill="#569cd6" fill-opacity="0.7"/><rect x="45" y="567" width="6" height="1.5" fill="#4fc1ff" fill-opacity="0.7"/><rect x="52" y="567" width="2" height="1.5" fill="#c586c0" fill-opacity="0.7"/><rect x="55" y="567" width="2" height="1.5" fill="#4fc1ff" fill-opacity="0.7"/><rect x="58" y="567" width="3" height="1.5" fill="#ce9178" fill-opacity="0.7"/><rect x="62" y="567" width="2" height="1.5" fill="#9cdcfe" fill-opacity="0.7"/><rect x="18" y="569" width="3" height="1.5" fill="#6a9955" fill-opacity="0.7"/><rect x="18" y="571" width="5" height="1.5" fill="#ce9178" fill-opacity="0.7"/><rect x="24" y="571" width="4" height="1.5" fill="#c586c0" fill-opacity="0.7"/><rect x="29" y="571" width="6" height="1.5" fill="#9cdcfe" fill-opacity="0.7"/><rect x="36" y="571" width="1" height="1.5" fill="#6a9955" fill-opacity="0.7"/><rect x="16" y="573" width="4" height="1.5" fill="#d4d4d4" fill-opacity="0.7"/><rect x="14" y="575" width="4" height="1.5" fill="#6a9955" fill-opacity="0.7"/><rect x="14" y="577" width="1" height="1.5" fill="#ce9178" fill-opacity="0.7"/><rect x="16" y="577" width="3" height="1.5" fill="#6a9955" fill-opacity="0.7"/><rect x="20" y="577" width="6" height="1.5" fill="#6a9955" fill-opacity="0.7"/><rect x="27" y="577" width="1" height="1.5" fill="#569cd6" fill-opacity="0.7"/><rect x="29" y="577" width="1" height="1.5" fill="#d4d4d4" fill-opacity="0.7"/><rect x="31" y="577" width="5" height="1.5" fill="#6a9955" fill-opacity="0.7"/><rect x="37" y="577" width="1" height="1.5" fill="#ce9178" fill-opacity="0.7"/><rect x="39" y="577" width="3" height="1.5" fill="#9cdcfe" fill-opacity="0.7"/><rect x="16" y="579" width="2" height="1.5" fill="#c586c0" fill-opacity="0.7"/><rect x="19" y="579" width="7" height="1.5" fill="#9cdcfe" fill-opacity="0.7"/><rect x="27" y="579" width="1" height="1.5" fill="#dcdcaa" fill-opacity="0.7"/><rect x="16" y="581" width="6" height="1.5" fill="#ce9178" fill-opacity="0.7"/><rect x="23" y="581" width="4" height="1.5" fill="#4fc1ff" fill-opacity="0.7"/><rect x="28" y="581" width="1" height="1.5" fill="#9cdcfe" fill-opacity="0.7"/><rect x="14" y="583" width="1" height="1.5" fill="#6a9955" fill-opacity="0.7"/><rect x="16" y="583" width="4" height="1.5" fill="#6a9955" fill-opacity="0.7"/><rect x="14" y="585" width="2" height="1.5" fill="#d4d4d4" fill-opacity="0.7"/><rect x="17" y="585" width="3" height="1.5" fill="#4fc1ff" fill-opacity="0.7"/><rect x="21" y="585" width="2" height="1.5" fill="#dcdcaa" fill-opacity="0.7"/><rect x="14" y="587" width="6" height="1.5" fill="#6a9955" fill-opacity="0.7"/><rect x="21" y="587" width="7" height="1.5" fill="#d4d4d4" fill-opacity="0.7"/><rect x="29" y="587" width="6" height="1.5" fill="#569cd6" fill-opacity="0.7"/><rect x="36" y="587" width="6" height="1.5" fill="#dcdcaa" fill-opacity="0.7"/><rect x="14" y="589" width="7" height="1.5" fill="#d4d4d4" fill-opacity="0.7"/><rect x="22" y="589" width="7" height="1.5" fill="#d4d4d4" fill-opacity="0.7"/><rect x="30" y="589" width="7" height="1.5" fill="#569cd6" fill-opacity="0.7"/><rect x="38" y="589" width="1" height="1.5" fill="#6a9955" fill-opacity="0.7"/><rect x="12" y="591" width="3" height="1.5" fill="#dcdcaa" fill-opacity="0.7"/><rect x="16" y="591" width="1" height="1.5" fill="#9cdcfe" fill-opacity="0.7"/><rect x="18" y="591" width="3" height="1.5" fill="#4fc1ff" fill-opacity="0.7"/><rect x="10" y="593" width="4" height="1.5" fill="#c586c0" fill-opacity="0.7"/><rect x="18" y="595" width="6" height="1.5" fill="#ce9178" fill-opacity="0.7"/><rect x="25" y="595" width="1" height="1.5" fill="#569cd6" fill-opacity="0.7"/><rect x="18" y="597" width="1" height="1.5" fill="#d4d4d4" fill-opacity="0.7"/><rect x="20" y="597" width="3" height="1.5" fill="#c586c0" fill-opacity="0.7"/><rect x="24" y="597" width="2" height="1.5" fill="#d4d4d4" fill-opacity="0.7"/><rect x="18" y="599" width="2" height="1.5" fill="#d4d4d4" fill-opacity="0.7"/><rect x="21" y="599" width="6" height="1.5" fill="#569cd6" fill-opacity="0.7"/><rect x="28" y="599" width="1" height="1.5" fill="#9cdcfe" fill-opacity="0.7"/><rect x="18" y="601" width="4" height="1.5" fill="#c586c0" fill-opacity="0.7"/><rect x="23" y="601" width="7" height="1.5" fill="#c586c0" fill-opacity="0.7"/><rect x="31" y="601" width="4" height="1.5" fill="#9cdcfe" fill-opacity="0.7"/><rect x="18" y="603" width="5" height="1.5" fill="#d4d4d4" fill-opacity="0.7"/><rect x="24" y="603" width="4" height="1.5" fill="#6a9955" fill-opacity="0.7"/><rect x="29" y="603" width="2" height="1.5" fill="#c586c0" fill-opacity="0.7"/><rect x="18" y="605" width="6" height="1.5" fill="#4fc1ff" fill-opacity="0.7"/><rect x="25" y="605" width="1" height="1.5" fill="#9cdcfe" fill-opacity="0.7"/><rect x="27" y="605" width="2" height="1.5" fill="#6a9955" fill-opacity="0.7"/><rect x="30" y="605" width="6" height="1.5" fill="#dcdcaa" fill-opacity="0.7"/><rect x="18" y="607" width="2" height="1.5" fill="#ce9178" fill-opacity="0.7"/><rect x="21" y="607" width="4" height="1.5" fill="#569cd6" fill-opacity="0.7"/><rect x="18" y="609" width="5" height="1.5" fill="#c586c0" fill-opacity="0.7"/><rect x="24" y="609" width="3" height="1.5" fill="#6a9955" fill-opacity="0.7"/><rect x="28" y="609" width="3" height="1.5" fill="#569cd6" fill-opacity="0.7"/><rect x="32" y="609" width="1" height="1.5" fill="#d4d4d4" fill-opacity="0.7"/><rect x="34" y="609" width="6" height="1.5" fill="#ce9178" fill-opacity="0.7"/><rect x="41" y="609" width="3" height="1.5" fill="#4fc1ff" fill-opacity="0.7"/><rect x="14" y="611" width="1" height="1.5" fill="#9cdcfe" fill-opacity="0.7"/><rect x="16" y="611" width="3" height="1.5" fill="#d4d4d4" fill-opacity="0.7"/><rect x="20" y="611" width="2" height="1.5" fill="#9cdcfe" fill-opacity="0.7"/><rect x="14" y="613" width="3" height="1.5" fill="#ce9178" fill-opacity="0.7"/><rect x="18" y="613" width="3" height="1.5" fill="#dcdcaa" fill-opacity="0.7"/><rect x="22" y="613" width="5" height="1.5" fill="#6a9955" fill-opacity="0.7"/><rect x="14" y="615" width="1" height="1.5" fill="#9cdcfe" fill-opacity="0.7"/><rect x="16" y="615" width="1" height="1.5" fill="#9cdcfe" fill-opacity="0.7"/><rect x="18" y="615" width="4" height="1.5" fill="#dcdcaa" fill-opacity="0.7"/><rect x="23" y="615" width="3" height="1.5" fill="#dcdcaa" fill-opacity="0.7"/><rect x="14" y="617" width="5" height="1.5" fill="#4fc1ff" fill-opacity="0.7"/><rect x="20" y="617" width="2" height="1.5" fill="#c586c0" fill-opacity="0.7"/><rect x="23" y="617" width="2" height="1.5" fill="#c586c0" fill-opacity="0.7"/><rect x="14" y="619" width="1" height="1.5" fill="#4fc1ff" fill-opacity="0.7"/><rect x="16" y="619" width="1" height="1.5" fill="#4fc1ff" fill-opacity="0.7"/><rect x="18" y="619" width="3" height="1.5" fill="#c586c0" fill-opacity="0.7"/><rect x="22" y="619" width="1" height="1.5" fill="#c586c0" fill-opacity="0.7"/><rect x="14" y="621" width="2" height="1.5" fill="#6a9955" fill-opacity="0.7"/><rect x="17" y="621" width="1" height="1.5" fill="#ce9178" fill-opacity="0.7"/><rect x="19" y="621" width="4" height="1.5" fill="#c586c0" fill-opacity="0.7"/><rect x="24" y="621" width="4" height="1.5" fill="#c586c0" fill-opacity="0.7"/><rect x="29" y="621" width="6" height="1.5" fill="#d4d4d4" fill-opacity="0.7"/><rect x="14" y="623" width="5" height="1.5" fill="#c586c0" fill-opacity="0.7"/><rect x="20" y="623" width="1" height="1.5" fill="#ce9178" fill-opacity="0.7"/><rect x="22" y="623" width="2" height="1.5" fill="#569cd6" fill-opacity="0.7"/><rect x="25" y="623" width="7" height="1.5" fill="#9cdcfe" fill-opacity="0.7"/><rect x="33" y="623" width="1" height="1.5" fill="#569cd6" fill-opacity="0.7"/><rect x="20" y="625" width="2" height="1.5" fill="#d4d4d4" fill-opacity="0.7"/><rect x="23" y="625" width="7" height="1.5" fill="#4fc1ff" fill-opacity="0.7"/><rect x="31" y="625" width="3" height="1.5" fill="#9cdcfe" fill-opacity="0.7"/><rect x="35" y="625" width="6" height="1.5" fill="#9cdcfe" fill-opacity="0.7"/><rect x="20" y="627" width="4" height="1.5" fill="#9cdcfe" fill-opacity="0.7"/><rect x="25" y="627" width="4" height="1.5" fill="#ce9178" fill-opacity="0.7"/><rect x="20" y="629" width="4" height="1.5" fill="#dcdcaa" fill-opacity="0.7"/><rect x="25" y="629" width="3" height="1.5" fill="#9cdcfe" fill-opacity="0.7"/><rect x="29" y="629" width="5" height="1.5" fill="#ce9178" fill-opacity="0.7"/><rect x="35" y="629" width="1" height="1.5" fill="#d4d4d4" fill-opacity="0.7"/><rect x="37" y="629" width="3" height="1.5" fill="#6a9955" fill-opacity="0.7"/><rect x="20" y="631" width="7" height="1.5" fill="#569cd6" fill-opacity="0.7"/><rect x="28" y="631" width="4" height="1.5" fill="#6a9955" fill-opacity="0.7"/><rect x="33" y="631" width="5" height="1.5" fill="#dcdcaa" fill-opacity="0.7"/><rect x="20" y="633" width="4" height="1.5" fill="#dcdcaa" fill-opacity="0.7"/><rect x="25" y="633" width="6" height="1.5" fill="#c586c0" fill-opacity="0.7"/><rect x="32" y="633" width="1" height="1.5" fill="#ce9178" fill-opacity="0.7"/><rect x="34" y="633" width="6" height="1.5" fill="#569cd6" fill-opacity="0.7"/><rect x="41" y="633" width="1" height="1.5" fill="#9cdcfe" fill-opacity="0.7"/><rect x="20" y="635" width="5" height="1.5" fill="#6a9955" fill-opacity="0.7"/><rect x="26" y="635" width="4" height="1.5" fill="#9cdcfe" fill-opacity="0.7"/><rect x="18" y="637" width="4" height="1.5" fill="#ce9178" fill-opacity="0.7"/><rect x="23" y="637" width="1" height="1.5" fill="#c586c0" fill-opacity="0.7"/><rect x="18" y="639" width="6" height="1.5" fill="#6a9955" fill-opacity="0.7"/><rect x="25" y="639" width="5" height="1.5" fill="#ce9178" fill-opacity="0.7"/><rect x="31" y="639" width="2" height="1.5" fill="#dcdcaa" fill-opacity="0.7"/><rect x="18" y="641" width="7" height="1.5" fill="#6a9955" fill-opacity="0.7"/><rect x="26" y="641" width="5" height="1.5" fill="#4fc1ff" fill-opacity="0.7"/><rect x="32" y="641" width="6" height="1.5" fill="#ce9178" fill-opacity="0.7"/><rect x="18" y="643" width="3" height="1.5" fill="#d4d4d4" fill-opacity="0.7"/><rect x="22" y="643" width="1" height="1.5" fill="#dcdcaa" fill-opacity="0.7"/><rect x="24" y="643" width="7" height="1.5" fill="#c586c0" fill-opacity="0.7"/><rect x="18" y="645" width="6" height="1.5" fill="#c586c0" fill-opacity="0.7"/><rect x="25" y="645" width="6" height="1.5" fill="#dcdcaa" fill-opacity="0.7"/><rect x="18" y="647" width="3" height="1.5" fill="#9cdcfe" fill-opacity="0.7"/><rect x="22" y="647" width="2" height="1.5" fill="#ce9178" fill-opacity="0.7"/><rect x="18" y="649" width="6" height="1.5" fill="#d4d4d4" fill-opacity="0.7"/><rect x="25" y="649" width="4" height="1.5" fill="#dcdcaa" fill-opacity="0.7"/><rect x="30" y="649" width="3" height="1.5" fill="#c586c0" fill-opacity="0.7"/><rect x="34" y="649" width="2" height="1.5" fill="#6a9955" fill-opacity="0.7"/><rect x="18" y="651" width="4" height="1.5" fill="#4fc1ff" fill-opacity="0.7"/><rect x="23" y="651" width="2" height="1.5" fill="#9cdcfe" fill-opacity="0.7"/><rect x="26" y="651" width="3" height="1.5" fill="#d4d4d4" fill-opacity="0.7"/><rect x="18" y="653" width="5" height="1.5" fill="#ce9178" fill-opacity="0.7"/><rect x="24" y="653" width="4" height="1.5" fill="#6a9955" fill-opacity="0.7"/><rect x="29" y="653" width="6" height="1.5" fill="#6a9955" fill-opacity="0.7"/><rect x="36" y="653" width="2" height="1.5" fill="#c586c0" fill-opacity="0.7"/><rect x="18" y="655" width="6" height="1.5" fill="#c586c0" fill-opacity="0.7"/><rect x="25" y="655" width="6" height="1.5" fill="#ce9178" fill-opacity="0.7"/><rect x="32" y="655" width="1" height="1.5" fill="#dcdcaa" fill-opacity="0.7"/><rect x="16" y="657" width="3" height="1.5" fill="#dcdcaa" fill-opacity="0.7"/><rect x="14" y="659" width="3" height="1.5" fill="#6a9955" fill-opacity="0.7"/><rect x="14" y="661" width="4" height="1.5" fill="#dcdcaa" fill-opacity="0.7"/><rect x="19" y="661" width="4" height="1.5" fill="#d4d4d4" fill-opacity="0.7"/><rect x="16" y="663" width="2" height="1.5" fill="#ce9178" fill-opacity="0.7"/><rect x="19" y="663" width="5" height="1.5" fill="#4fc1ff" fill-opacity="0.7"/><rect x="25" y="663" width="5" height="1.5" fill="#c586c0" fill-opacity="0.7"/><rect x="31" y="663" width="1" height="1.5" fill="#c586c0" fill-opacity="0.7"/><rect x="33" y="663" width="3" height="1.5" fill="#c586c0" fill-opacity="0.7"/><rect x="37" y="663" width="3" height="1.5" fill="#ce9178" fill-opacity="0.7"/><rect x="18" y="665" width="5" height="1.5" fill="#c586c0" fill-opacity="0.7"/><rect x="24" y="665" width="2" height="1.5" fill="#c586c0" fill-opacity="0.7"/><rect x="27" y="665" width="3" height="1.5" fill="#dcdcaa" fill-opacity="0.7"/><rect x="31" y="665" width="6" height="1.5" fill="#c586c0" fill-opacity="0.7"/><rect x="38" y="665" width="1" height="1.5" fill="#6a9955" fill-opacity="0.7"/><rect x="20" y="667" width="5" height="1.5" fill="#9cdcfe" fill-opacity="0.7"/><rect x="26" y="667" width="7" height="1.5" fill="#dcdcaa" fill-opacity="0.7"/><rect x="34" y="667" width="7" height="1.5" fill="#c586c0" fill-opacity="0.7"/><rect x="42" y="667" width="1" height="1.5" fill="#4fc1ff" fill-opacity="0.7"/><rect x="44" y="667" width="6" height="1.5" fill="#4fc1ff" fill-opacity="0.7"/><rect x="51" y="667" width="5" height="1.5" fill="#6a9955" fill-opacity="0.7"/><rect x="57" y="667" width="3" height="1.5" fill="#d4d4d4" fill-opacity="0.7"/><rect x="61" y="667" width="6" height="1.5" fill="#c586c0" fill-opacity="0.7"/><rect x="68" y="667" width="5" height="1.5" fill="#569cd6" fill-opacity="0.7"/><rect x="20" y="669" width="1" height="1.5" fill="#569cd6" fill-opacity="0.7"/><rect x="22" y="669" width="7" height="1.5" fill="#4fc1ff" fill-opacity="0.7"/><rect x="30" y="669" width="7" height="1.5" fill="#9cdcfe" fill-opacity="0.7"/><rect x="38" y="669" width="3" height="1.5" fill="#4fc1ff" fill-opacity="0.7"/><rect x="42" y="669" width="5" height="1.5" fill="#6a9955" fill-opacity="0.7"/><rect x="48" y="669" width="3" height="1.5" fill="#569cd6" fill-opacity="0.7"/><rect x="18" y="671" width="6" height="1.5" fill="#6a9955" fill-opacity="0.7"/><rect x="25" y="671" width="5" height="1.5" fill="#6a9955" fill-opacity="0.7"/><rect x="18" y="673" width="3" height="1.5" fill="#c586c0" fill-opacity="0.7"/><rect x="22" y="673" width="6" height="1.5" fill="#569cd6" fill-opacity="0.7"/><rect x="16" y="675" width="1" height="1.5" fill="#9cdcfe" fill-opacity="0.7"/><rect x="18" y="675" width="1" height="1.5" fill="#6a9955" fill-opacity="0.7"/><rect x="14" y="677" width="3" height="1.5" fill="#6a9955" fill-opacity="0.7"/><rect x="20" y="679" width="5" height="1.5" fill="#9cdcfe" fill-opacity="0.7"/><rect x="26" y="679" width="3" height="1.5" fill="#4fc1ff" fill-opacity="0.7"/><rect x="20" y="681" width="4" height="1.5" fill="#9cdcfe" fill-opacity="0.7"/><rect x="25" y="681" width="1" height="1.5" fill="#9cdcfe" fill-opacity="0.7"/><rect x="27" y="681" width="3" height="1.5" fill="#569cd6" fill-opacity="0.7"/><rect x="31" y="681" width="5" height="1.5" fill="#4fc1ff" fill-opacity="0.7"/><rect x="20" y="683" width="6" height="1.5" fill="#dcdcaa" fill-opacity="0.7"/><rect x="20" y="685" width="4" height="1.5" fill="#d4d4d4" fill-opacity="0.7"/><rect x="25" y="685" width="2" height="1.5" fill="#4fc1ff" fill-opacity="0.7"/><rect x="28" y="685" width="5" height="1.5" fill="#9cdcfe" fill-opacity="0.7"/><rect x="34" y="685" width="3" height="1.5" fill="#4fc1ff" fill-opacity="0.7"/><rect x="20" y="687" width="4" height="1.5" fill="#c586c0" fill-opacity="0.7"/><rect x="25" y="687" width="2" height="1.5" fill="#d4d4d4" fill-opacity="0.7"/><rect x="28" y="687" width="6" height="1.5" fill="#dcdcaa" fill-opacity="0.7"/><rect x="35" y="687" width="2" height="1.5" fill="#569cd6" fill-opacity="0.7"/><rect x="38" y="687" width="1" height="1.5" fill="#ce9178" fill-opacity="0.7"/><rect x="20" y="689" width="1" height="1.5" fill="#9cdcfe" fill-opacity="0.7"/><rect x="22" y="689" width="6" height="1.5" fill="#dcdcaa" fill-opacity="0.7"/><rect x="29" y="689" width="3" height="1.5" fill="#9cdcfe" fill-opacity="0.7"/><rect x="33" y="689" width="4" height="1.5" fill="#9cdcfe" fill-opacity="0.7"/><rect x="38" y="689" width="6" height="1.5" fill="#9cdcfe" fill-opacity="0.7"/><rect x="45" y="689" width="4" height="1.5" fill="#d4d4d4" fill-opacity="0.7"/><rect x="20" y="691" width="7" height="1.5" fill="#4fc1ff" fill-opacity="0.7"/><rect x="28" y="691" width="2" height="1.5" fill="#4fc1ff" fill-opacity="0.7"/><rect x="31" y="691" width="5" height="1.5" fill="#4fc1ff" fill-opacity="0.7"/><rect x="18" y="693" width="3" height="1.5" fill="#dcdcaa" fill-opacity="0.7"/><rect x="22" y="693" width="1" height="1.5" fill="#6a9955" fill-opacity="0.7"/><rect x="16" y="695" width="3" height="1.5" fill="#4fc1ff" fill-opacity="0.7"/><rect x="16" y="697" width="1" height="1.5" fill="#6a9955" fill-opacity="0.7"/><rect x="18" y="697" width="7" height="1.5" fill="#d4d4d4" fill-opacity="0.7"/><rect x="26" y="697" width="1" height="1.5" fill="#4fc1ff" fill-opacity="0.7"/><rect x="18" y="699" width="2" height="1.5" fill="#dcdcaa" fill-opacity="0.7"/><rect x="21" y="699" width="5" height="1.5" fill="#4fc1ff" fill-opacity="0.7"/><rect x="27" y="699" width="2" height="1.5" fill="#4fc1ff" fill-opacity="0.7"/><rect x="30" y="699" width="7" height="1.5" fill="#6a9955" fill-opacity="0.7"/><rect x="38" y="699" width="4" height="1.5" fill="#569cd6" fill-opacity="0.7"/><rect x="43" y="699" width="7" height="1.5" fill="#569cd6" fill-opacity="0.7"/><rect x="20" y="701" width="5" height="1.5" fill="#569cd6" fill-opacity="0.7"/><rect x="26" y="701" width="4" height="1.5" fill="#4fc1ff" fill-opacity="0.7"/><rect x="31" y="701" width="5" height="1.5" fill="#4fc1ff" fill-opacity="0.7"/><rect x="37" y="701" width="2" height="1.5" fill="#4fc1ff" fill-opacity="0.7"/><rect x="40" y="701" width="5" height="1.5" fill="#dcdcaa" fill-opacity="0.7"/><rect x="22" y="703" width="4" height="1.5" fill="#4fc1ff" fill-opacity="0.7"/><rect x="27" y="703" width="1" height="1.5" fill="#dcdcaa" fill-opacity="0.7"/><rect x="29" y="703" width="4" height="1.5" fill="#9cdcfe" fill-opacity="0.7"/><rect x="34" y="703" width="7" height="1.5" fill="#ce9178" fill-opacity="0.7"/><rect x="42" y="703" width="7" height="1.5" fill="#9cdcfe" fill-opacity="0.7"/><rect x="50" y="703" width="1" height="1.5" fill="#4fc1ff" fill-opacity="0.7"/><rect x="52" y="703" width="1" height="1.5" fill="#4fc1ff" fill-opacity="0.7"/><rect x="54" y="703" width="7" height="1.5" fill="#6a9955" fill-opacity="0.7"/><rect x="62" y="703" width="5" height="1.5" fill="#c586c0" fill-opacity="0.7"/><rect x="68" y="703" width="1" height="1.5" fill="#ce9178" fill-opacity="0.7"/><rect x="22" y="705" width="4" height="1.5" fill="#9cdcfe" fill-opacity="0.7"/><rect x="27" y="705" width="6" height="1.5" fill="#569cd6" fill-opacity="0.7"/><rect x="34" y="705" width="3" height="1.5" fill="#d4d4d4" fill-opacity="0.7"/><rect x="20" y="707" width="1" height="1.5" fill="#569cd6" fill-opacity="0.7"/><rect x="22" y="707" width="3" height="1.5" fill="#4fc1ff" fill-opacity="0.7"/><rect x="20" y="709" width="1" height="1.5" fill="#6a9955" fill-opacity="0.7"/><rect x="22" y="709" width="7" height="1.5" fill="#d4d4d4" fill-opacity="0.7"/><rect x="30" y="709" width="2" height="1.5" fill="#9cdcfe" fill-opacity="0.7"/><rect x="18" y="711" width="3" height="1.5" fill="#dcdcaa" fill-opacity="0.7"/><rect x="22" y="711" width="1" height="1.5" fill="#9cdcfe" fill-opacity="0.7"/><rect x="16" y="713" width="2" height="1.5" fill="#d4d4d4" fill-opacity="0.7"/><rect x="18" y="715" width="3" height="1.5" fill="#d4d4d4" fill-opacity="0.7"/><rect x="22" y="715" width="1" height="1.5" fill="#9cdcfe" fill-opacity="0.7"/><rect x="24" y="715" width="1" height="1.5" fill="#d4d4d4" fill-opacity="0.7"/><rect x="18" y="717" width="4" height="1.5" fill="#569cd6" fill-opacity="0.7"/><rect x="23" y="717" width="3" height="1.5" fill="#569cd6" fill-opacity="0.7"/><rect x="27" y="717" width="1" height="1.5" fill="#569cd6" fill-opacity="0.7"/><rect x="29" y="717" width="2" height="1.5" fill="#ce9178" fill-opacity="0.7"/><rect x="18" y="719" width="4" height="1.5" fill="#dcdcaa" fill-opacity="0.7"/><rect x="23" y="719" width="3" height="1.5" fill="#6a9955" fill-opacity="0.7"/><rect x="18" y="721" width="6" height="1.5" fill="#dcdcaa" fill-opacity="0.7"/><rect x="25" y="721" width="4" height="1.5" fill="#c586c0" fill-opacity="0.7"/><rect x="18" y="723" width="3" height="1.5" fill="#d4d4d4" fill-opacity="0.7"/><rect x="22" y="723" width="4" height="1.5" fill="#6a9955" fill-opacity="0.7"/><rect x="27" y="723" width="3" height="1.5" fill="#dcdcaa" fill-opacity="0.7"/><rect x="18" y="725" width="3" height="1.5" fill="#9cdcfe" fill-opacity="0.7"/><rect x="22" y="725" width="3" height="1.5" fill="#d4d4d4" fill-opacity="0.7"/><rect x="18" y="727" width="4" height="1.5" fill="#9cdcfe" fill-opacity="0.7"/><rect x="23" y="727" width="6" height="1.5" fill="#9cdcfe" fill-opacity="0.7"/><rect x="30" y="727" width="5" height="1.5" fill="#6a9955" fill-opacity="0.7"/><rect x="36" y="727" width="1" height="1.5" fill="#dcdcaa" fill-opacity="0.7"/><rect x="18" y="729" width="3" height="1.5" fill="#6a9955" fill-opacity="0.7"/><rect x="22" y="729" width="6" height="1.5" fill="#4fc1ff" fill-opacity="0.7"/><rect x="29" y="729" width="2" height="1.5" fill="#6a9955" fill-opacity="0.7"/><rect x="18" y="731" width="1" height="1.5" fill="#c586c0" fill-opacity="0.7"/><rect x="20" y="731" width="5" height="1.5" fill="#dcdcaa" fill-opacity="0.7"/><rect x="26" y="731" width="5" height="1.5" fill="#dcdcaa" fill-opacity="0.7"/><rect x="32" y="731" width="1" height="1.5" fill="#ce9178" fill-opacity="0.7"/><rect x="34" y="731" width="2" height="1.5" fill="#4fc1ff" fill-opacity="0.7"/><rect x="18" y="733" width="5" height="1.5" fill="#c586c0" fill-opacity="0.7"/><rect x="24" y="733" width="5" height="1.5" fill="#d4d4d4" fill-opacity="0.7"/><rect x="30" y="733" width="1" height="1.5" fill="#d4d4d4" fill-opacity="0.7"/><rect x="32" y="733" width="1" height="1.5" fill="#4fc1ff" fill-opacity="0.7"/><rect x="16" y="735" width="1" height="1.5" fill="#ce9178" fill-opacity="0.7"/><rect x="18" y="735" width="1" height="1.5" fill="#569cd6" fill-opacity="0.7"/><rect x="20" y="735" width="2" height="1.5" fill="#c586c0" fill-opacity="0.7"/><rect x="14" y="737" width="3" height="1.5" fill="#ce9178" fill-opacity="0.7"/><rect x="14" y="739" width="4" height="1.5" fill="#c586c0" fill-opacity="0.7"/><rect x="19" y="739" width="2" height="1.5" fill="#9cdcfe" fill-opacity="0.7"/><rect x="16" y="741" width="5" height="1.5" fill="#569cd6" fill-opacity="0.7"/><rect x="22" y="741" width="1" height="1.5" fill="#6a9955" fill-opacity="0.7"/><rect x="24" y="741" width="6" height="1.5" fill="#dcdcaa" fill-opacity="0.7"/><rect x="31" y="741" width="6" height="1.5" fill="#6a9955" fill-opacity="0.7"/><rect x="38" y="741" width="2" height="1.5" fill="#6a9955" fill-opacity="0.7"/><rect x="41" y="741" width="1" height="1.5" fill="#4fc1ff" fill-opacity="0.7"/><rect x="18" y="743" width="5" height="1.5" fill="#9cdcfe" fill-opacity="0.7"/><rect x="24" y="743" width="1" height="1.5" fill="#dcdcaa" fill-opacity="0.7"/><rect x="26" y="743" width="6" height="1.5" fill="#dcdcaa" fill-opacity="0.7"/><rect x="33" y="743" width="5" height="1.5" fill="#ce9178" fill-opacity="0.7"/><rect x="39" y="743" width="2" height="1.5" fill="#d4d4d4" fill-opacity="0.7"/><rect x="42" y="743" width="3" height="1.5" fill="#569cd6" fill-opacity="0.7"/><rect x="46" y="743" width="5" height="1.5" fill="#ce9178" fill-opacity="0.7"/><rect x="52" y="743" width="6" height="1.5" fill="#569cd6" fill-opacity="0.7"/><rect x="59" y="743" width="3" height="1.5" fill="#dcdcaa" fill-opacity="0.7"/><rect x="63" y="743" width="3" height="1.5" fill="#dcdcaa" fill-opacity="0.7"/><rect x="20" y="745" width="7" height="1.5" fill="#569cd6" fill-opacity="0.7"/><rect x="28" y="745" width="1" height="1.5" fill="#4fc1ff" fill-opacity="0.7"/><rect x="30" y="745" width="1" height="1.5" fill="#569cd6" fill-opacity="0.7"/><rect x="32" y="745" width="7" height="1.5" fill="#dcdcaa" fill-opacity="0.7"/><rect x="40" y="745" width="6" height="1.5" fill="#9cdcfe" fill-opacity="0.7"/><rect x="47" y="745" width="6" height="1.5" fill="#569cd6" fill-opacity="0.7"/><rect x="54" y="745" width="4" height="1.5" fill="#4fc1ff" fill-opacity="0.7"/><rect x="20" y="747" width="7" height="1.5" fill="#d4d4d4" fill-opacity="0.7"/><rect x="28" y="747" width="7" height="1.5" fill="#569cd6" fill-opacity="0.7"/><rect x="36" y="747" width="3" height="1.5" fill="#ce9178" fill-opacity="0.7"/><rect x="40" y="747" width="5" height="1.5" fill="#9cdcfe" fill-opacity="0.7"/><rect x="46" y="747" width="6" height="1.5" fill="#9cdcfe" fill-opacity="0.7"/><rect x="53" y="747" width="7" height="1.5" fill="#d4d4d4" fill-opacity="0.7"/><rect x="61" y="747" width="2" height="1.5" fill="#d4d4d4" fill-opacity="0.7"/><rect x="18" y="749" width="4" height="1.5" fill="#569cd6" fill-opacity="0.7"/><rect x="23" y="749" width="4" height="1.5" fill="#6a9955" fill-opacity="0.7"/><rect x="18" y="751" width="6" height="1.5" fill="#9cdcfe" fill-opacity="0.7"/><rect x="25" y="751" width="2" height="1.5" fill="#d4d4d4" fill-opacity="0.7"/><rect x="28" y="751" width="3" height="1.5" fill="#dcdcaa" fill-opacity="0.7"/><rect x="32" y="751" width="6" height="1.5" fill="#ce9178" fill-opacity="0.7"/><rect x="39" y="751" width="1" height="1.5" fill="#d4d4d4" fill-opacity="0.7"/><rect x="41" y="751" width="2" height="1.5" fill="#dcdcaa" fill-opacity="0.7"/><rect x="16" y="753" width="3" height="1.5" fill="#d4d4d4" fill-opacity="0.7"/><rect x="14" y="755" width="5" height="1.5" fill="#ce9178" fill-opacity="0.7"/><rect x="14" y="757" width="6" height="1.5" fill="#c586c0" fill-opacity="0.7"/><rect x="21" y="757" width="6" height="1.5" fill="#4fc1ff" fill-opacity="0.7"/><rect x="28" y="757" width="4" height="1.5" fill="#9cdcfe" fill-opacity="0.7"/><rect x="33" y="757" width="1" height="1.5" fill="#c586c0" fill-opacity="0.7"/><rect x="35" y="757" width="4" height="1.5" fill="#c586c0" fill-opacity="0.7"/><rect x="40" y="757" width="1" height="1.5" fill="#d4d4d4" fill-opacity="0.7"/><rect x="16" y="759" width="1" height="1.5" fill="#ce9178" fill-opacity="0.7"/><rect x="18" y="759" width="1" height="1.5" fill="#4fc1ff" fill-opacity="0.7"/><rect x="20" y="759" width="5" height="1.5" fill="#4fc1ff" fill-opacity="0.7"/><rect x="26" y="759" width="5" height="1.5" fill="#4fc1ff" fill-opacity="0.7"/><rect x="32" y="759" width="4" height="1.5" fill="#569cd6" fill-opacity="0.7"/><rect x="16" y="761" width="5" height="1.5" fill="#569cd6" fill-opacity="0.7"/><rect x="22" y="761" width="2" height="1.5" fill="#9cdcfe" fill-opacity="0.7"/><rect x="25" y="761" width="4" height="1.5" fill="#dcdcaa" fill-opacity="0.7"/><rect x="18" y="763" width="4" height="1.5" fill="#dcdcaa" fill-opacity="0.7"/><rect x="23" y="763" width="4" height="1.5" fill="#9cdcfe" fill-opacity="0.7"/><rect x="28" y="763" width="1" height="1.5" fill="#9cdcfe" fill-opacity="0.7"/><rect x="30" y="763" width="2" height="1.5" fill="#dcdcaa" fill-opacity="0.7"/><rect x="33" y="763" width="1" height="1.5" fill="#6a9955" fill-opacity="0.7"/><rect x="18" y="765" width="2" height="1.5" fill="#c586c0" fill-opacity="0.7"/><rect x="21" y="765" width="4" height="1.5" fill="#c586c0" fill-opacity="0.7"/><rect x="18" y="767" width="6" height="1.5" fill="#569cd6" fill-opacity="0.7"/><rect x="25" y="767" width="1" height="1.5" fill="#4fc1ff" fill-opacity="0.7"/><rect x="18" y="769" width="6" height="1.5" fill="#9cdcfe" fill-opacity="0.7"/><rect x="25" y="769" width="3" height="1.5" fill="#ce9178" fill-opacity="0.7"/><rect x="29" y="769" width="2" height="1.5" fill="#d4d4d4" fill-opacity="0.7"/><rect x="32" y="769" width="2" height="1.5" fill="#9cdcfe" fill-opacity="0.7"/><rect x="18" y="771" width="1" height="1.5" fill="#dcdcaa" fill-opacity="0.7"/><rect x="20" y="771" width="6" height="1.5" fill="#c586c0" fill-opacity="0.7"/><rect x="27" y="771" width="1" height="1.5" fill="#ce9178" fill-opacity="0.7"/><rect x="18" y="773" width="5" height="1.5" fill="#9cdcfe" fill-opacity="0.7"/><rect x="18" y="775" width="2" height="1.5" fill="#4fc1ff" fill-opacity="0.7"/><rect x="21" y="775" width="5" height="1.5" fill="#9cdcfe" fill-opacity="0.7"/><rect x="27" y="775" width="5" height="1.5" fill="#ce9178" fill-opacity="0.7"/><rect x="33" y="775" width="1" height="1.5" fill="#d4d4d4" fill-opacity="0.7"/><rect x="18" y="777" width="2" height="1.5" fill="#dcdcaa" fill-opacity="0.7"/><rect x="21" y="777" width="4" height="1.5" fill="#ce9178" fill-opacity="0.7"/><rect x="26" y="777" width="4" height="1.5" fill="#dcdcaa" fill-opacity="0.7"/><rect x="18" y="779" width="1" height="1.5" fill="#569cd6" fill-opacity="0.7"/><rect x="20" y="779" width="1" height="1.5" fill="#569cd6" fill-opacity="0.7"/><rect x="22" y="779" width="7" height="1.5" fill="#c586c0" fill-opacity="0.7"/><rect x="30" y="779" width="4" height="1.5" fill="#569cd6" fill-opacity="0.7"/><rect x="35" y="779" width="4" height="1.5" fill="#ce9178" fill-opacity="0.7"/><rect x="40" y="779" width="4" height="1.5" fill="#9cdcfe" fill-opacity="0.7"/><rect x="45" y="779" width="3" height="1.5" fill="#d4d4d4" fill-opacity="0.7"/><rect x="18" y="781" width="1" height="1.5" fill="#9cdcfe" fill-opacity="0.7"/><rect x="20" y="781" width="2" height="1.5" fill="#4fc1ff" fill-opacity="0.7"/><rect x="23" y="781" width="1" height="1.5" fill="#c586c0" fill-opacity="0.7"/><rect x="25" y="781" width="7" height="1.5" fill="#c586c0" fill-opacity="0.7"/><rect x="33" y="781" width="2" height="1.5" fill="#d4d4d4" fill-opacity="0.7"/><rect x="16" y="783" width="6" height="1.5" fill="#569cd6" fill-opacity="0.7"/><rect x="14" y="785" width="2" height="1.5" fill="#c586c0" fill-opacity="0.7"/><rect x="14" y="787" width="7" height="1.5" fill="#4fc1ff" fill-opacity="0.7"/><rect x="22" y="787" width="3" height="1.5" fill="#ce9178" fill-opacity="0.7"/><rect x="16" y="789" width="6" height="1.5" fill="#9cdcfe" fill-opacity="0.7"/><rect x="23" y="789" width="3" height="1.5" fill="#d4d4d4" fill-opacity="0.7"/><rect x="27" y="789" width="3" height="1.5" fill="#d4d4d4" fill-opacity="0.7"/><rect x="31" y="789" width="2" height="1.5" fill="#ce9178" fill-opacity="0.7"/><rect x="34" y="789" width="6" height="1.5" fill="#569cd6" fill-opacity="0.7"/><rect x="41" y="789" width="5" height="1.5" fill="#c586c0" fill-opacity="0.7"/><rect x="18" y="791" width="7" height="1.5" fill="#4fc1ff" fill-opacity="0.7"/><rect x="26" y="791" width="7" height="1.5" fill="#d4d4d4" fill-opacity="0.7"/><rect x="34" y="791" width="1" height="1.5" fill="#ce9178" fill-opacity="0.7"/><rect x="36" y="791" width="6" height="1.5" fill="#c586c0" fill-opacity="0.7"/><rect x="18" y="793" width="7" height="1.5" fill="#4fc1ff" fill-opacity="0.7"/><rect x="26" y="793" width="5" height="1.5" fill="#d4d4d4" fill-opacity="0.7"/><rect x="32" y="793" width="2" height="1.5" fill="#6a9955" fill-opacity="0.7"/><rect x="18" y="795" width="6" height="1.5" fill="#d4d4d4" fill-opacity="0.7"/><rect x="25" y="795" width="5" height="1.5" fill="#569cd6" fill-opacity="0.7"/><rect x="31" y="795" width="1" height="1.5" fill="#c586c0" fill-opacity="0.7"/><rect x="18" y="797" width="4" height="1.5" fill="#ce9178" fill-opacity="0.7"/><rect x="23" y="797" width="2" height="1.5" fill="#9cdcfe" fill-opacity="0.7"/><rect x="26" y="797" width="4" height="1.5" fill="#d4d4d4" fill-opacity="0.7"/><rect x="31" y="797" width="1" height="1.5" fill="#4fc1ff" fill-opacity="0.7"/><rect x="18" y="799" width="5" height="1.5" fill="#c586c0" fill-opacity="0.7"/><rect x="24" y="799" width="2" height="1.5" fill="#d4d4d4" fill-opacity="0.7"/><rect x="27" y="799" width="4" height="1.5" fill="#9cdcfe" fill-opacity="0.7"/><rect x="32" y="799" width="1" height="1.5" fill="#569cd6" fill-opacity="0.7"/><rect x="18" y="801" width="3" height="1.5" fill="#dcdcaa" fill-opacity="0.7"/><rect x="22" y="801" width="5" height="1.5" fill="#d4d4d4" fill-opacity="0.7"/><rect x="28" y="801" width="2" height="1.5" fill="#c586c0" fill-opacity="0.7"/><rect x="31" y="801" width="5" height="1.5" fill="#4fc1ff" fill-opacity="0.7"/><rect x="37" y="801" width="6" height="1.5" fill="#9cdcfe" fill-opacity="0.7"/><rect x="18" y="803" width="1" height="1.5" fill="#9cdcfe" fill-opacity="0.7"/><rect x="20" y="803" width="6" height="1.5" fill="#9cdcfe" fill-opacity="0.7"/><rect x="27" y="803" width="6" height="1.5" fill="#4fc1ff" fill-opacity="0.7"/><rect x="34" y="803" width="3" height="1.5" fill="#d4d4d4" fill-opacity="0.7"/><rect x="18" y="805" width="4" height="1.5" fill="#9cdcfe" fill-opacity="0.7"/><rect x="23" y="805" width="1" height="1.5" fill="#c586c0" fill-opacity="0.7"/><rect x="25" y="805" width="6" height="1.5" fill="#dcdcaa" fill-opacity="0.7"/><rect x="32" y="805" width="6" height="1.5" fill="#6a9955" fill-opacity="0.7"/><rect x="18" y="807" width="2" height="1.5" fill="#6a9955" fill-opacity="0.7"/><rect x="21" y="807" width="5" height="1.5" fill="#6a9955" fill-opacity="0.7"/><rect x="16" y="809" width="6" height="1.5" fill="#c586c0" fill-opacity="0.7"/><rect x="23" y="809" width="1" height="1.5" fill="#4fc1ff" fill-opacity="0.7"/><rect x="14" y="811" width="4" height="1.5" fill="#c586c0" fill-opacity="0.7"/><rect x="20" y="813" width="2" height="1.5" fill="#4fc1ff" fill-opacity="0.7"/><rect x="23" y="813" width="6" height="1.5" fill="#6a9955" fill-opacity="0.7"/><rect x="30" y="813" width="1" height="1.5" fill="#569cd6" fill-opacity="0.7"/><rect x="20" y="815" width="7" height="1.5" fill="#dcdcaa" fill-opacity="0.7"/><rect x="20" y="817" width="2" height="1.5" fill="#569cd6" fill-opacity="0.7"/><rect x="23" y="817" width="6" height="1.5" fill="#9cdcfe" fill-opacity="0.7"/><rect x="30" y="817" width="4" height="1.5" fill="#c586c0" fill-opacity="0.7"/><rect x="20" y="819" width="7" height="1.5" fill="#569cd6" fill-opacity="0.7"/><rect x="28" y="819" width="5" height="1.5" fill="#dcdcaa" fill-opacity="0.7"/><rect x="34" y="819" width="5" height="1.5" fill="#4fc1ff" fill-opacity="0.7"/><rect x="40" y="819" width="2" height="1.5" fill="#9cdcfe" fill-opacity="0.7"/><rect x="20" y="821" width="3" height="1.5" fill="#ce9178" fill-opacity="0.7"/><rect x="24" y="821" width="1" height="1.5" fill="#569cd6" fill-opacity="0.7"/><rect x="26" y="821" width="4" height="1.5" fill="#d4d4d4" fill-opacity="0.7"/><rect x="31" y="821" width="6" height="1.5" fill="#d4d4d4" fill-opacity="0.7"/><rect x="20" y="823" width="5" height="1.5" fill="#6a9955" fill-opacity="0.7"/><rect x="26" y="823" width="3" height="1.5" fill="#4fc1ff" fill-opacity="0.7"/><rect x="20" y="825" width="1" height="1.5" fill="#9cdcfe" fill-opacity="0.7"/><rect x="22" y="825" width="3" height="1.5" fill="#9cdcfe" fill-opacity="0.7"/><rect x="20" y="827" width="4" height="1.5" fill="#dcdcaa" fill-opacity="0.7"/><rect x="25" y="827" width="1" height="1.5" fill="#9cdcfe" fill-opacity="0.7"/><rect x="27" y="827" width="5" height="1.5" fill="#569cd6" fill-opacity="0.7"/><rect x="33" y="827" width="7" height="1.5" fill="#ce9178" fill-opacity="0.7"/><rect x="41" y="827" width="2" height="1.5" fill="#4fc1ff" fill-opacity="0.7"/><rect x="44" y="827" width="2" height="1.5" fill="#ce9178" fill-opacity="0.7"/><rect x="20" y="829" width="5" height="1.5" fill="#4fc1ff" fill-opacity="0.7"/><rect x="26" y="829" width="1" height="1.5" fill="#4fc1ff" fill-opacity="0.7"/><rect x="28" y="829" width="6" height="1.5" fill="#4fc1ff" fill-opacity="0.7"/><rect x="20" y="831" width="4" height="1.5" fill="#dcdcaa" fill-opacity="0.7"/><rect x="25" y="831" width="7" height="1.5" fill="#9cdcfe" fill-opacity="0.7"/><rect x="33" y="831" width="6" height="1.5" fill="#4fc1ff" fill-opacity="0.7"/><rect x="40" y="831" width="3" height="1.5" fill="#6a9955" fill-opacity="0.7"/><rect x="44" y="831" width="2" height="1.5" fill="#d4d4d4" fill-opacity="0.7"/><rect x="20" y="833" width="6" height="1.5" fill="#c586c0" fill-opacity="0.7"/><rect x="27" y="833" width="4" height="1.5" fill="#dcdcaa" fill-opacity="0.7"/><rect x="32" y="833" width="1" height="1.5" fill="#6a9955" fill-opacity="0.7"/><rect x="18" y="835" width="4" height="1.5" fill="#d4d4d4" fill-opacity="0.7"/><rect x="23" y="835" width="1" height="1.5" fill="#569cd6" fill-opacity="0.7"/><rect x="16" y="837" width="4" height="1.5" fill="#d4d4d4" fill-opacity="0.7"/><rect x="16" y="839" width="1" height="1.5" fill="#569cd6" fill-opacity="0.7"/><rect x="18" y="839" width="3" height="1.5" fill="#4fc1ff" fill-opacity="0.7"/><rect x="22" y="839" width="3" height="1.5" fill="#ce9178" fill-opacity="0.7"/><rect x="18" y="841" width="7" height="1.5" fill="#d4d4d4" fill-opacity="0.7"/><rect x="26" y="841" width="1" height="1.5" fill="#6a9955" fill-opacity="0.7"/><rect x="28" y="841" width="5" height="1.5" fill="#c586c0" fill-opacity="0.7"/><rect x="34" y="841" width="7" height="1.5" fill="#d4d4d4" fill-opacity="0.7"/><rect x="42" y="841" width="1" height="1.5" fill="#6a9955" fill-opacity="0.7"/><rect x="20" y="843" width="4" height="1.5" fill="#6a9955" fill-opacity="0.7"/><rect x="25" y="843" width="7" height="1.5" fill="#4fc1ff" fill-opacity="0.7"/><rect x="33" y="843" width="1" height="1.5" fill="#ce9178" fill-opacity="0.7"/><rect x="35" y="843" width="1" height="1.5" fill="#c586c0" fill-opacity="0.7"/><rect x="37" y="843" width="3" height="1.5" fill="#ce9178" fill-opacity="0.7"/><rect x="14" y="845" width="6" height="1.5" fill="#569cd6" fill-opacity="0.7"/><rect x="21" y="845" width="4" height="1.5" fill="#569cd6" fill-opacity="0.7"/><rect x="14" y="847" width="5" height="1.5" fill="#c586c0" fill-opacity="0.7"/><rect x="20" y="847" width="1" height="1.5" fill="#dcdcaa" fill-opacity="0.7"/><rect x="14" y="849" width="7" height="1.5" fill="#569cd6" fill-opacity="0.7"/><rect x="22" y="849" width="4" height="1.5" fill="#d4d4d4" fill-opacity="0.7"/><rect x="14" y="851" width="3" height="1.5" fill="#4fc1ff" fill-opacity="0.7"/><rect x="18" y="851" width="4" height="1.5" fill="#dcdcaa" fill-opacity="0.7"/><rect x="23" y="851" width="6" height="1.5" fill="#9cdcfe" fill-opacity="0.7"/><rect x="30" y="851" width="1" height="1.5" fill="#569cd6" fill-opacity="0.7"/><rect x="14" y="853" width="4" height="1.5" fill="#569cd6" fill-opacity="0.7"/><rect x="19" y="853" width="2" height="1.5" fill="#569cd6" fill-opacity="0.7"/><rect x="22" y="853" width="2" height="1.5" fill="#ce9178" fill-opacity="0.7"/><rect x="25" y="853" width="6" height="1.5" fill="#ce9178" fill-opacity="0.7"/><rect x="14" y="855" width="5" height="1.5" fill="#569cd6" fill-opacity="0.7"/><rect x="14" y="857" width="2" height="1.5" fill="#4fc1ff" fill-opacity="0.7"/><rect x="17" y="857" width="4" height="1.5" fill="#569cd6" fill-opacity="0.7"/><rect x="22" y="857" width="5" height="1.5" fill="#9cdcfe" fill-opacity="0.7"/><rect x="28" y="857" width="3" height="1.5" fill="#9cdcfe" fill-opacity="0.7"/><rect x="32" y="857" width="3" height="1.5" fill="#569cd6" fill-opacity="0.7"/><rect x="36" y="857" width="2" height="1.5" fill="#ce9178" fill-opacity="0.7"/><rect x="14" y="859" width="1" height="1.5" fill="#9cdcfe" fill-opacity="0.7"/><rect x="16" y="859" width="6" height="1.5" fill="#4fc1ff" fill-opacity="0.7"/><rect x="23" y="859" width="2" height="1.5" fill="#c586c0" fill-opacity="0.7"/><rect x="14" y="861" width="7" height="1.5" fill="#dcdcaa" fill-opacity="0.7"/><rect x="22" y="861" width="3" height="1.5" fill="#9cdcfe" fill-opacity="0.7"/><rect x="14" y="863" width="5" height="1.5" fill="#569cd6" fill-opacity="0.7"/><rect x="20" y="863" width="4" height="1.5" fill="#6a9955" fill-opacity="0.7"/><rect x="25" y="863" width="3" height="1.5" fill="#d4d4d4" fill-opacity="0.7"/><rect x="29" y="863" width="4" height="1.5" fill="#dcdcaa" fill-opacity="0.7"/><rect x="34" y="863" width="2" height="1.5" fill="#ce9178" fill-opacity="0.7"/><rect x="12" y="865" width="4" height="1.5" fill="#569cd6" fill-opacity="0.7"/><rect x="17" y="865" width="3" height="1.5" fill="#569cd6" fill-opacity="0.7"/><rect x="10" y="867" width="3" height="1.5" fill="#9cdcfe" fill-opacity="0.7"/><rect x="14" y="867" width="1" height="1.5" fill="#c586c0" fill-opacity="0.7"/><rect x="10" y="869" width="7" height="1.5" fill="#9cdcfe" fill-opacity="0.7"/><rect x="18" y="869" width="7" height="1.5" fill="#dcdcaa" fill-opacity="0.7"/><rect x="12" y="871" width="2" height="1.5" fill="#d4d4d4" fill-opacity="0.7"/><rect x="15" y="871" width="2" height="1.5" fill="#569cd6" fill-opacity="0.7"/><rect x="18" y="871" width="5" height="1.5" fill="#4fc1ff" fill-opacity="0.7"/><rect x="24" y="871" width="7" height="1.5" fill="#569cd6" fill-opacity="0.7"/><rect x="32" y="871" width="4" height="1.5" fill="#d4d4d4" fill-opacity="0.7"/><rect x="16" y="873" width="7" height="1.5" fill="#dcdcaa" fill-opacity="0.7"/><rect x="24" y="873" width="3" height="1.5" fill="#c586c0" fill-opacity="0.7"/><rect x="28" y="873" width="1" height="1.5" fill="#dcdcaa" fill-opacity="0.7"/><rect x="16" y="875" width="4" height="1.5" fill="#ce9178" fill-opacity="0.7"/><rect x="21" y="875" width="1" height="1.5" fill="#ce9178" fill-opacity="0.7"/><rect x="23" y="875" width="2" height="1.5" fill="#569cd6" fill-opacity="0.7"/><rect x="26" y="875" width="2" height="1.5" fill="#c586c0" fill-opacity="0.7"/><rect x="29" y="875" width="1" height="1.5" fill="#6a9955" fill-opacity="0.7"/><rect x="16" y="877" width="3" height="1.5" fill="#dcdcaa" fill-opacity="0.7"/><rect x="20" y="877" width="3" height="1.5" fill="#ce9178" fill-opacity="0.7"/><rect x="24" y="877" width="2" height="1.5" fill="#dcdcaa" fill-opacity="0.7"/><rect x="27" y="877" width="5" height="1.5" fill="#dcdcaa" fill-opacity="0.7"/><rect x="33" y="877" width="2" height="1.5" fill="#ce9178" fill-opacity="0.7"/><rect x="36" y="877" width="1" height="1.5" fill="#c586c0" fill-opacity="0.7"/><rect x="16" y="879" width="4" height="1.5" fill="#dcdcaa" fill-opacity="0.7"/><rect x="21" y="879" width="6" height="1.5" fill="#4fc1ff" fill-opacity="0.7"/><rect x="28" y="879" width="4" height="1.5" fill="#4fc1ff" fill-opacity="0.7"/><rect x="33" y="879" width="1" height="1.5" fill="#d4d4d4" fill-opacity="0.7"/><rect x="35" y="879" width="3" height="1.5" fill="#6a9955" fill-opacity="0.7"/><rect x="39" y="879" width="3" height="1.5" fill="#d4d4d4" fill-opacity="0.7"/><rect x="16" y="881" width="7" height="1.5" fill="#569cd6" fill-opacity="0.7"/><rect x="24" y="881" width="7" height="1.5" fill="#d4d4d4" fill-opacity="0.7"/><rect x="32" y="881" width="4" height="1.5" fill="#9cdcfe" fill-opacity="0.7"/><rect x="14" y="883" width="3" height="1.5" fill="#c586c0" fill-opacity="0.7"/><rect x="18" y="883" width="3" height="1.5" fill="#ce9178" fill-opacity="0.7"/><rect x="12" y="885" width="3" height="1.5" fill="#569cd6" fill-opacity="0.7"/><rect x="12" y="887" width="3" height="1.5" fill="#c586c0" fill-opacity="0.7"/><rect x="16" y="887" width="6" height="1.5" fill="#ce9178" fill-opacity="0.7"/><rect x="23" y="887" width="3" height="1.5" fill="#569cd6" fill-opacity="0.7"/><rect x="14" y="889" width="6" height="1.5" fill="#ce9178" fill-opacity="0.7"/><rect x="21" y="889" width="5" height="1.5" fill="#d4d4d4" fill-opacity="0.7"/><rect x="27" y="889" width="7" height="1.5" fill="#6a9955" fill-opacity="0.7"/><rect x="35" y="889" width="2" height="1.5" fill="#ce9178" fill-opacity="0.7"/><rect x="38" y="889" width="1" height="1.5" fill="#4fc1ff" fill-opacity="0.7"/><rect x="40" y="889" width="6" height="1.5" fill="#6a9955" fill-opacity="0.7"/><rect x="16" y="891" width="2" height="1.5" fill="#d4d4d4" fill-opacity="0.7"/><rect x="19" y="891" width="4" height="1.5" fill="#d4d4d4" fill-opacity="0.7"/><rect x="24" y="891" width="3" height="1.5" fill="#6a9955" fill-opacity="0.7"/><rect x="28" y="891" width="1" height="1.5" fill="#dcdcaa" fill-opacity="0.7"/><rect x="30" y="891" width="6" height="1.5" fill="#4fc1ff" fill-opacity="0.7"/><rect x="37" y="891" width="4" height="1.5" fill="#dcdcaa" fill-opacity="0.7"/><rect x="42" y="891" width="1" height="1.5" fill="#ce9178" fill-opacity="0.7"/><rect x="44" y="891" width="4" height="1.5" fill="#ce9178" fill-opacity="0.7"/><rect x="49" y="891" width="1" height="1.5" fill="#9cdcfe" fill-opacity="0.7"/><rect x="51" y="891" width="2" height="1.5" fill="#6a9955" fill-opacity="0.7"/><rect x="54" y="891" width="4" height="1.5" fill="#6a9955" fill-opacity="0.7"/><rect x="59" y="891" width="3" height="1.5" fill="#4fc1ff" fill-opacity="0.7"/><rect x="63" y="891" width="1" height="1.5" fill="#c586c0" fill-opacity="0.7"/><rect x="65" y="891" width="1" height="1.5" fill="#4fc1ff" fill-opacity="0.7"/><rect x="18" y="893" width="3" height="1.5" fill="#569cd6" fill-opacity="0.7"/><rect x="22" y="893" width="3" height="1.5" fill="#ce9178" fill-opacity="0.7"/><rect x="26" y="893" width="2" height="1.5" fill="#4fc1ff" fill-opacity="0.7"/><rect x="29" y="893" width="7" height="1.5" fill="#ce9178" fill-opacity="0.7"/><rect x="37" y="893" width="2" height="1.5" fill="#ce9178" fill-opacity="0.7"/><rect x="40" y="893" width="5" height="1.5" fill="#ce9178" fill-opacity="0.7"/><rect x="46" y="893" width="2" height="1.5" fill="#c586c0" fill-opacity="0.7"/><rect x="49" y="893" width="5" height="1.5" fill="#569cd6" fill-opacity="0.7"/><rect x="55" y="893" width="3" height="1.5" fill="#4fc1ff" fill-opacity="0.7"/><rect x="59" y="893" width="5" height="1.5" fill="#d4d4d4" fill-opacity="0.7"/><rect x="65" y="893" width="1" height="1.5" fill="#ce9178" fill-opacity="0.7"/><rect x="18" y="895" width="7" height="1.5" fill="#6a9955" fill-opacity="0.7"/><rect x="26" y="895" width="6" height="1.5" fill="#9cdcfe" fill-opacity="0.7"/><rect x="33" y="895" width="4" height="1.5" fill="#569cd6" fill-opacity="0.7"/><rect x="38" y="895" width="7" height="1.5" fill="#4fc1ff" fill-opacity="0.7"/><rect x="46" y="895" width="6" height="1.5" fill="#ce9178" fill-opacity="0.7"/><rect x="53" y="895" width="2" height="1.5" fill="#c586c0" fill-opacity="0.7"/><rect x="56" y="895" width="2" height="1.5" fill="#6a9955" fill-opacity="0.7"/><rect x="16" y="897" width="1" height="1.5" fill="#569cd6" fill-opacity="0.7"/><rect x="18" y="897" width="5" height="1.5" fill="#9cdcfe" fill-opacity="0.7"/><rect x="16" y="899" width="7" height="1.5" fill="#569cd6" fill-opacity="0.7"/><rect x="24" y="899" width="7" height="1.5" fill="#d4d4d4" fill-opacity="0.7"/><rect x="32" y="899" width="1" height="1.5" fill="#6a9955" fill-opacity="0.7"/><rect x="34" y="899" width="2" height="1.5" fill="#6a9955" fill-opacity="0.7"/><rect x="37" y="899" width="2" height="1.5" fill="#d4d4d4" fill-opacity="0.7"/><rect x="14" y="901" width="6" height="1.5" fill="#4fc1ff" fill-opacity="0.7"/><rect x="21" y="901" width="1" height="1.5" fill="#4fc1ff" fill-opacity="0.7"/><rect x="23" y="901" width="5" height="1.5" fill="#c586c0" fill-opacity="0.7"/><rect x="14" y="903" width="1" height="1.5" fill="#6a9955" fill-opacity="0.7"/><rect x="16" y="903" width="4" height="1.5" fill="#c586c0" fill-opacity="0.7"/><rect x="14" y="905" width="1" height="1.5" fill="#dcdcaa" fill-opacity="0.7"/><rect x="16" y="905" width="1" height="1.5" fill="#4fc1ff" fill-opacity="0.7"/><rect x="18" y="905" width="3" height="1.5" fill="#569cd6" fill-opacity="0.7"/><rect x="22" y="905" width="4" height="1.5" fill="#4fc1ff" fill-opacity="0.7"/><rect x="27" y="905" width="1" height="1.5" fill="#dcdcaa" fill-opacity="0.7"/><rect x="14" y="907" width="4" height="1.5" fill="#6a9955" fill-opacity="0.7"/><rect x="19" y="907" width="1" height="1.5" fill="#d4d4d4" fill-opacity="0.7"/><rect x="21" y="907" width="1" height="1.5" fill="#6a9955" fill-opacity="0.7"/><rect x="23" y="907" width="1" height="1.5" fill="#569cd6" fill-opacity="0.7"/><rect x="25" y="907" width="1" height="1.5" fill="#dcdcaa" fill-opacity="0.7"/><rect x="14" y="909" width="5" height="1.5" fill="#6a9955" fill-opacity="0.7"/><rect x="20" y="909" width="1" height="1.5" fill="#dcdcaa" fill-opacity="0.7"/><rect x="22" y="909" width="7" height="1.5" fill="#c586c0" fill-opacity="0.7"/><rect x="30" y="909" width="5" height="1.5" fill="#569cd6" fill-opacity="0.7"/><rect x="14" y="911" width="4" height="1.5" fill="#6a9955" fill-opacity="0.7"/><rect x="19" y="911" width="2" height="1.5" fill="#6a9955" fill-opacity="0.7"/><rect x="22" y="911" width="2" height="1.5" fill="#dcdcaa" fill-opacity="0.7"/><rect x="14" y="913" width="6" height="1.5" fill="#ce9178" fill-opacity="0.7"/><rect x="21" y="913" width="3" height="1.5" fill="#569cd6" fill-opacity="0.7"/><rect x="25" y="913" width="4" height="1.5" fill="#dcdcaa" fill-opacity="0.7"/><rect x="30" y="913" width="1" height="1.5" fill="#9cdcfe" fill-opacity="0.7"/><rect x="32" y="913" width="4" height="1.5" fill="#569cd6" fill-opacity="0.7"/><rect x="37" y="913" width="3" height="1.5" fill="#ce9178" fill-opacity="0.7"/><rect x="41" y="913" width="2" height="1.5" fill="#d4d4d4" fill-opacity="0.7"/><rect x="14" y="915" width="6" height="1.5" fill="#4fc1ff" fill-opacity="0.7"/><rect x="21" y="915" width="4" height="1.5" fill="#6a9955" fill-opacity="0.7"/><rect x="26" y="915" width="1" height="1.5" fill="#6a9955" fill-opacity="0.7"/><rect x="28" y="915" width="5" height="1.5" fill="#4fc1ff" fill-opacity="0.7"/><rect x="8" y="98" width="112" height="6" fill="#2f5f9e" fill-opacity="0.85"/><rect x="8" y="104" width="112" height="4" fill="#2f5f9e" fill-opacity="0.85"/><rect x="8" y="110" width="112" height="2" fill="#2f5f9e" fill-opacity="0.85"/><rect x="8" y="112" width="112" height="2" fill="#a06a1a" fill-opacity="0.85"/><rect x="8" y="126" width="112" height="10" fill="#2f5f9e" fill-opacity="0.85"/><rect x="8" y="136" width="112" height="2" fill="#2f5f9e" fill-opacity="0.85"/><rect x="8" y="198" width="112" height="2" fill="#b87a1a" fill-opacity="0.85"/><rect x="8" y="391" width="112" height="2" fill="#2f5f9e" fill-opacity="0.85"/><rect x="8" y="548" width="112" height="2" fill="#2f5f9e" fill-opacity="0.85"/><rect x="8" y="553" width="112" height="2" fill="#2f5f9e" fill-opacity="0.85"/><rect x="8" y="624" width="112" height="2" fill="#2f5f9e" fill-opacity="0.85"/><rect x="8" y="636" width="112" height="2" fill="#2f5f9e" fill-opacity="0.85"/><rect x="8" y="654" width="112" height="2" fill="#2f5f9e" fill-opacity="0.85"/><rect x="8" y="728" width="112" height="2" fill="#2f5f9e" fill-opacity="0.85"/><rect x="8" y="798" width="112" height="2" fill="#b87a1a" fill-opacity="0.85"/></svg><div style="position:absolute;left:1595px;top:92px;width:1px;height:918px;background:#141414"></div><div style="position:absolute;left:1597px;top:215px;width:12px;height:83px;background:rgba(121,121,121,0.4)"></div><div style="position:absolute;left:1604px;top:96px;width:5px;height:6px;background:#3794ff"></div><div style="position:absolute;left:1604px;top:192px;width:5px;height:6px;background:#3794ff"></div><div style="position:absolute;left:1604px;top:201px;width:5px;height:6px;background:#3794ff"></div><div style="position:absolute;left:1599px;top:203px;width:4px;height:6px;background:#a07a1a"></div><div style="position:absolute;left:1604px;top:216px;width:5px;height:12px;background:#3794ff"></div><div style="position:absolute;left:1600px;top:258px;width:5px;height:5px;background:#b0b0b0"></div><div style="position:absolute;left:1600px;top:266px;width:8px;height:6px;background:#5a8a8a"></div><div style="position:absolute;left:1604px;top:446px;width:5px;height:5px;background:#3794ff"></div><div style="position:absolute;left:1604px;top:584px;width:5px;height:6px;background:#3794ff"></div><div style="position:absolute;left:1604px;top:655px;width:5px;height:6px;background:#3794ff"></div><div style="position:absolute;left:1604px;top:672px;width:5px;height:6px;background:#3794ff"></div><div style="position:absolute;left:1604px;top:735px;width:5px;height:6px;background:#3794ff"></div><div style="position:absolute;left:1597px;top:795px;width:5px;height:6px;background:#3794ff"></div><div style="position:absolute;left:1602px;top:795px;width:5px;height:6px;background:#a07a1a"></div><div style="position:absolute;left:1477px;top:271px;width:2px;height:12px;background:#1b81a8"></div><div style="position:absolute;left:1477px;top:283px;width:2px;height:4px;background:#2ea043"></div><div style="position:absolute;left:1609px;top:35px;width:1px;height:975px;background:#2b2b2b"></div><div style="position:absolute;left:1610px;top:35px;width:310px;height:975px;background:#181818"></div><div style="position:absolute;left:1625px;top:42px;white-space:pre;font-size:16px;line-height:22px;color:#cccccc;font-weight:bold">···</div><svg style="position:absolute;left:1692px;top:44px;" width="16" height="16" viewBox="0 0 16 16" fill="none"><rect x="1" y="1.5" width="14" height="13" rx="1" stroke="#cccccc" stroke-width="1.1"/><path d="M4 5l3 2.5L4 10M8 11h4" stroke="#cccccc" stroke-width="1.1"/></svg><div style="position:absolute;left:1713px;top:42px;white-space:pre;font-size:12px;line-height:22px;color:#cccccc">bash</div><svg style="position:absolute;left:1745px;top:44px;" width="16" height="16" viewBox="0 0 16 16" fill="none"><path d="M8 1.5v13M1.5 8h13" stroke="#cccccc" stroke-width="1.2"/></svg><svg style="position:absolute;left:1765px;top:47px;" width="10" height="10" viewBox="0 0 10 10" fill="none"><path d="M1 3l4 4 4-4" stroke="#cccccc" stroke-width="1.1"/></svg><svg style="position:absolute;left:1785px;top:44px;" width="16" height="16" viewBox="0 0 16 16" fill="none"><rect x="1.5" y="1.5" width="13" height="13" rx="1" stroke="#cccccc" stroke-width="1.2"/><path d="M1.5 8h13" stroke="#cccccc" stroke-width="1.2"/></svg><svg style="position:absolute;left:1811px;top:44px;" width="16" height="16" viewBox="0 0 16 16" fill="none"><path d="M2 3.5h12M6 3.5V2h4v1.5M3.5 3.5l0.8 11h7.4l0.8-11M6.5 6v6.5M9.5 6v6.5" stroke="#cccccc" stroke-width="1.1"/></svg><div style="position:absolute;left:1837px;top:42px;white-space:pre;font-size:16px;line-height:22px;color:#cccccc;font-weight:bold">···</div><svg style="position:absolute;left:1864px;top:44px;" width="14" height="16" viewBox="0 0 14 16" fill="none"><path d="M9.5 3l-5 5 5 5" stroke="#cccccc" stroke-width="1.2"/></svg><svg style="position:absolute;left:1889px;top:44px;" width="16" height="16" viewBox="0 0 16 16" fill="none"><path d="M3 3l10 10M13 3L3 13" stroke="#cccccc" stroke-width="1.2"/></svg><div class="mono" style="position:absolute;left:1631px;top:91px;white-space:pre;font-size:11.67px;line-height:17px"><span style="color:#23d18b;color:#0dbc79">josh@ligoudan</span> <span style="color:#bf5fd8">MINGW64</span> <span style="color:#e5e510">/d/work/fs/app</span>
<span style="color:#e5e510">/workorder</span> <span style="color:#11a8cd;color:#2aa7d0">(release-eservice)</span>
<span style="color:#e5e5e5">$</span></div><div style="position:absolute;left:0px;top:1010px;width:1920px;height:22px;background:#181818;border-top:1px solid #2b2b2b"></div><div style="position:absolute;left:0px;top:1010px;width:34px;height:22px;background:#0078d4"></div><svg style="position:absolute;left:9px;top:1012px;" width="18" height="18" viewBox="0 0 18 18" fill="none"><path d="M3 6.5l5 4-5 4M14 3.5l-5 3.5 5 3.5" stroke="#ffffff" stroke-width="1.2"/></svg><svg style="position:absolute;left:40px;top:1014px;" width="13" height="15" viewBox="0 0 13 15" fill="none"><circle cx="3" cy="3" r="1.8" stroke="#cccccc" stroke-width="1.1"/><circle cx="3" cy="12" r="1.8" stroke="#cccccc" stroke-width="1.1"/><circle cx="10" cy="5" r="1.8" stroke="#cccccc" stroke-width="1.1"/><path d="M3 4.8v5.4M10 6.8c0 3-7 2-7 3.5" stroke="#cccccc" stroke-width="1.1"/></svg><div class="sb" style="left:57px">release-eservice*</div><svg style="position:absolute;left:152px;top:1014px;" width="13" height="14" viewBox="0 0 13 14" fill="none"><path d="M11.5 5.5A5 5 0 0 0 2 6M1.5 8.5A5 5 0 0 0 11 8" stroke="#cccccc" stroke-width="1.2"/><path d="M11.5 2v3.5H8M1.5 12V8.5H5" stroke="#cccccc" stroke-width="1.2"/></svg><div class="sb" style="left:170px">38↓ 0↑</div><svg style="position:absolute;left:217px;top:1013px;" width="15" height="16" viewBox="0 0 15 16" fill="none"><circle cx="4" cy="3" r="1.9" stroke="#cccccc" stroke-width="1.2"/><circle cx="4" cy="13" r="1.9" stroke="#cccccc" stroke-width="1.2"/><circle cx="11" cy="7" r="1.9" stroke="#cccccc" stroke-width="1.2"/><path d="M4 4.9v6.2M11 8.9c0 2.5-3 2.5-5.5 3.3" stroke="#cccccc" stroke-width="1.2"/></svg><svg style="position:absolute;left:247px;top:1014px;" width="14" height="14" viewBox="0 0 14 14" fill="none"><circle cx="7" cy="7" r="5.7" stroke="#cccccc" stroke-width="1.1"/><path d="M4.3 4.3l5.4 5.4M9.7 4.3l-5.4 5.4" stroke="#cccccc" stroke-width="1.1"/></svg><div class="sb" style="left:264px">0</div><svg style="position:absolute;left:274px;top:1014px;" width="16" height="14" viewBox="0 0 16 14" fill="none"><path d="M8 1.5l6.5 11.5h-13z" stroke="#cccccc" stroke-width="1.1"/><path d="M8 5.5v4M8 10.8v1" stroke="#cccccc" stroke-width="1.1"/></svg><div class="sb" style="left:292px">1</div><svg style="position:absolute;left:300px;top:1014px;" width="14" height="14" viewBox="0 0 14 14" fill="none"><circle cx="7" cy="7" r="5.7" stroke="#cccccc" stroke-width="1.1"/><path d="M7 6v4.5M7 3.8v1" stroke="#cccccc" stroke-width="1.2"/></svg><div class="sb" style="left:320px">201</div><svg style="position:absolute;left:354px;top:1014px;" width="14" height="14" viewBox="0 0 14 14" fill="none"><circle cx="7" cy="5" r="1.5" fill="#cccccc"/><path d="M7 6.5l-3 7M7 6.5l3 7M3.5 2a5 5 0 0 0 0 6M10.5 2a5 5 0 0 1 0 6M2 0.5a7 7 0 0 0 0 9M12 0.5a7 7 0 0 1 0 9" stroke="#cccccc" stroke-width="1.1"/></svg><div class="sb" style="left:372px">0</div><div class="sb" style="left:393px">[TypeScript Importer]: Symbols: 7</div><svg style="position:absolute;left:1250px;top:1013px;" width="10" height="16" viewBox="0 0 10 16" fill="none"><circle cx="5" cy="8" r="3" stroke="#cccccc" stroke-width="1.3"/><path d="M5 1v4M5 11v4" stroke="#cccccc" stroke-width="1.3"/></svg><div class="sb" style="left:1266px">You, 3 seconds ago</div><div class="sb" style="left:1383px">Ln 105, Col 6</div><div class="sb" style="left:1467px">Spaces: 2</div><div class="sb" style="left:1532px">UTF-8</div><div class="sb" style="left:1579px">CRLF</div><div class="sb" style="left:1621px">Vue</div><div class="sb" style="left:1657px">Codeium: {...}</div><svg style="position:absolute;left:1744px;top:1014px;" width="15" height="14" viewBox="0 0 15 14" fill="none"><path d="M7.5 1.5l6 11h-12z" stroke="#cccccc" stroke-width="1.1"/><path d="M7.5 5.5v3.5M7.5 10.2v1" stroke="#cccccc" stroke-width="1.1"/></svg><div class="sb" style="left:1761px">27 Spell</div><svg style="position:absolute;left:1820px;top:1015px;" width="14" height="12" viewBox="0 0 14 12" fill="none"><path d="M1.5 6.5l3.5 3.5 7.5-8" stroke="#cccccc" stroke-width="1.2"/></svg><div class="sb" style="left:1838px">Prettier</div><svg style="position:absolute;left:1888px;top:1014px;" width="14" height="14" viewBox="0 0 14 14" fill="none"><path d="M3 10V6a4 4 0 0 1 8 0v4l1.5 1.5h-11zM5.5 12.5a1.5 1.5 0 0 0 3 0" stroke="#cccccc" stroke-width="1.1"/><circle cx="11" cy="3" r="2" fill="#cccccc"/></svg><div style="position:absolute;left:1457px;top:912px;width:452px;height:86px;background:#1f1f1f;border:1px solid #2b2b2b;border-radius:4px;box-shadow:0 0 8px 2px rgba(0,0,0,0.36)"></div><svg style="position:absolute;left:1466px;top:925px;" width="18" height="18" viewBox="0 0 18 18" fill="none"><circle cx="9" cy="9" r="7.5" stroke="#3794ff" stroke-width="1.3"/><path d="M9 7.5v5.5M9 4.8v1.3" stroke="#3794ff" stroke-width="1.6"/></svg><div style="position:absolute;left:1489px;top:924px;white-space:pre;font-size:13px;line-height:22px;color:#cccccc;letter-spacing:-0.05px">Restart Visual Studio Code to apply the latest update.</div><svg style="position:absolute;left:1881px;top:927px;" width="14" height="14" viewBox="0 0 14 14" fill="none"><path d="M2 2l10 10M12 2L2 12" stroke="#cccccc" stroke-width="1.2"/></svg><div style="position:absolute;left:1644px;top:955px;width:89px;height:28px;background:#0078d4;border-radius:2px;color:#ffffff;font-size:13px;line-height:28px;text-align:center">Update Now</div><div style="position:absolute;left:1743px;top:955px;width:49px;height:28px;background:#313131;border:1px solid #3a3a3a;border-radius:2px;color:#cccccc;font-size:13px;line-height:26px;text-align:center">Later</div><div style="position:absolute;left:1802px;top:955px;width:96px;height:28px;background:#313131;border:1px solid #3a3a3a;border-radius:2px;color:#cccccc;font-size:13px;line-height:26px;text-align:center">Release Notes</div><div style="position:absolute;left:1752px;top:1000px;white-space:pre;font-size:19px;line-height:24px;color:rgba(200,200,200,0.45)">@</div><svg style="position:absolute;left:1768px;top:1005px;opacity:1" width="146" height="20" viewBox="-1 -1 146 20"><path transform="translate(0.00 0) scale(1.143)" d="M4.5 0.8L1 2.2M0.5 4.5H5.5M3 2V13M3 5.5L0.5 10M3 6L5.5 8.5M7 1L13 4.5M13 1L7 4.5M6.5 6H13.5M9 4.5Q8 7 6.5 8.5M7.5 9H12.5V12M7.5 9V12M10 7V13.5" stroke="rgba(200,200,200,0.5)" stroke-width="0.79" fill="none" stroke-linecap="round" stroke-linejoin="round"/><path transform="translate(17.80 0) scale(1.143)" d="M2.5 5.5H11.5M7 1V12.5M1 12.5H13" stroke="rgba(200,200,200,0.5)" stroke-width="0.79" fill="none" stroke-linecap="round" stroke-linejoin="round"/><path transform="translate(35.60 0) scale(1.143)" d="M0.5 4.5H4.5M2.5 1V12.5L1.3 11.5M0.5 9.5L4.5 7.5M6 1.5H13V4H6M6 1.5V8Q6 12 5 13.5M9.5 4.5V11M7.5 6V8.5H11.5V6M7 10V13H12.5V10" stroke="rgba(200,200,200,0.5)" stroke-width="0.79" fill="none" stroke-linecap="round" stroke-linejoin="round"/><path transform="translate(53.40 0) scale(1.143)" d="M7 0.8Q4.5 4 0.8 6M7 0.8Q9.5 4 13.2 6M4 6.5H10M2.5 9H11.5M7 6.5V12.5M4.5 10L5.5 11.8M9.5 10L8.5 11.8M1 13H13" stroke="rgba(200,200,200,0.5)" stroke-width="0.79" fill="none" stroke-linecap="round" stroke-linejoin="round"/><path transform="translate(71.20 0) scale(1.143)" d="M0.5 4.5H4.5M2.5 1V12.5L1.3 11.5M0.5 9.5L4.5 7.5M6 3.5H13.5M9.8 1V6.5M6.5 6.5H12.5Q11 11 6 13.5M7.5 8.5Q10 12 13.5 13.5" stroke="rgba(200,200,200,0.5)" stroke-width="0.79" fill="none" stroke-linecap="round" stroke-linejoin="round"/><path transform="translate(89.00 0) scale(1.143)" d="M1 5H13M7 1V13.5M6.5 5.5Q5 10 1 12.5M7.5 5.5Q9 10 13 12.5M10 1.5L11.5 3" stroke="rgba(200,200,200,0.5)" stroke-width="0.79" fill="none" stroke-linecap="round" stroke-linejoin="round"/><path transform="translate(106.80 0) scale(1.143)" d="M2.5 0.8L3.5 2.2M0.8 4H5L1 9.5M3 7V13.5M3.5 8L5 9.5M6.5 5.5H13M9.8 1.5V12.5M6 12.8H13.5" stroke="rgba(200,200,200,0.5)" stroke-width="0.79" fill="none" stroke-linecap="round" stroke-linejoin="round"/><path transform="translate(124.60 0) scale(1.143)" d="M13 1.5H1.5V12.8H13.5M4.5 4.5L11 10.5M11 4.5L4.5 10.5" stroke="rgba(200,200,200,0.5)" stroke-width="0.79" fill="none" stroke-linecap="round" stroke-linejoin="round"/></svg><svg style="position:absolute;left:0;top:0" width="1920" height="1032" viewBox="0 0 1920 1032"><path d="M644.8 554.6 L716 569" stroke="#ec2228" stroke-width="4.2" stroke-linecap="round"/><polygon points="637,553 652.1,564.2 650.7,555.8 655.2,548.5" fill="#ec2228"/><path d="M556.0 633.9 L633 628.5" stroke="#ec2228" stroke-width="4.2" stroke-linecap="round"/><polygon points="548,634.5 565.5,641.3 562.0,633.5 564.4,625.3" fill="#ec2228"/><path d="M515.0 750.3 L602 743" stroke="#ec2228" stroke-width="4.2" stroke-linecap="round"/><polygon points="507,751 524.6,757.5 521.0,749.8 523.3,741.6" fill="#ec2228"/></svg></body></html>
